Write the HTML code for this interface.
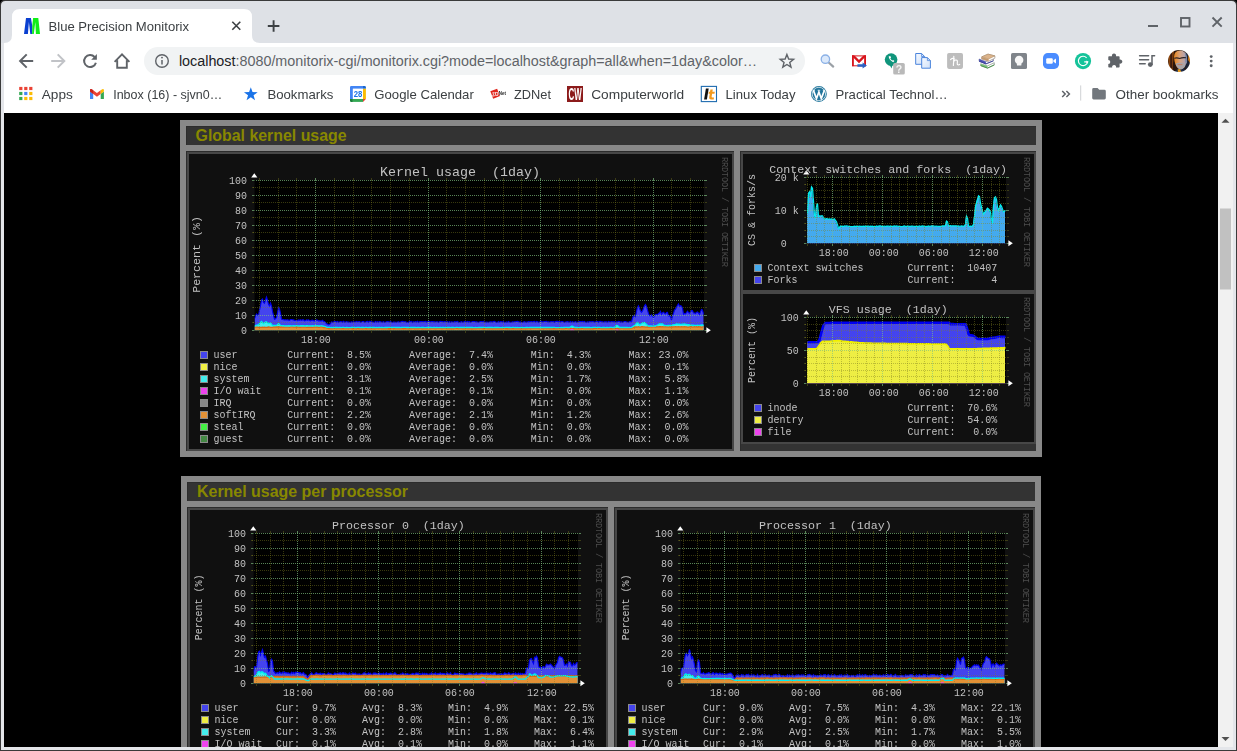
<!DOCTYPE html>
<html><head><meta charset="utf-8"><title>Blue Precision Monitorix</title>
<style>
html,body{margin:0;padding:0;background:#000;overflow:hidden;}
body{width:1237px;height:751px;position:relative;font-family:"Liberation Sans",sans-serif;}
svg{position:absolute;left:0;top:0;display:block;}
text{white-space:pre;}
</style></head><body>
<svg width="1237" height="751" viewBox="0 0 1237 751">
<rect x="0" y="0" width="1237" height="751" fill="#000" />
<path d="M0 751 V5 Q0 0 5 0 H1232 Q1237 0 1237 5 V751 Z" fill="#3a3a3a"/>
<path d="M1 750 V5.5 Q1 1 5.5 1 H1231.5 Q1236 1 1236 5.5 V750 Z" fill="#dee1e6"/>
<rect x="1" y="43" width="3" height="707" fill="#e4e6ea" />
<rect x="1233" y="43" width="3" height="707" fill="#e4e6ea" />
<rect x="1" y="747" width="1235" height="3" fill="#e4e6ea" />
<rect x="4" y="43" width="1229" height="70" fill="#ffffff" />
<path d="M4 43 Q12 43 12 35 V17 Q12 9 20 9 H244 Q252 9 252 17 V35 Q252 43 260 43 Z" fill="#ffffff"/>
<path d="M26 18 H30.9 L32.3 26 L32.1 33.9 H30.3 L28.9 22 L27.9 33.9 H24 Z" fill="#0a3fd0"/><path d="M33.1 18 H38.3 L40 33.9 H35.9 L35.3 22 L33.8 33.9 H32.1 L32.3 26 Z" fill="#10ee18"/>
<path d="M232.3 21.8 L240.3 29.8 M240.3 21.8 L232.3 29.8" stroke="#3c4043" stroke-width="1.6" fill="none"/>
<path d="M267.8 26 H279.4 M273.6 20.2 V31.8" stroke="#3c4043" stroke-width="1.9" fill="none"/>
<path d="M1148 26 H1158" stroke="#5f6368" stroke-width="2" fill="none"/>
<rect x="1181" y="18" width="8.5" height="8.5" stroke="#5f6368" stroke-width="1.9" fill="none"/>
<path d="M1212.5 17.5 L1221.7 26.7 M1221.7 17.5 L1212.5 26.7" stroke="#5f6368" stroke-width="1.9" fill="none"/>
<path d="M33.2 61 H20.4 M26.7 54.4 L20.1 61 L26.7 67.6" stroke="#5f6368" stroke-width="2" fill="none"/>
<path d="M51.2 61 H64 M57.7 54.4 L64.3 61 L57.7 67.6" stroke="#c1c3c7" stroke-width="2" fill="none"/>
<path d="M94.6 57.0 A6.0 6.0 0 1 0 95.9 62.7" stroke="#5f6368" stroke-width="2" fill="none"/>
<path d="M96.9 54 V59.7 H91.2 Z" fill="#5f6368"/>
<path d="M114.6 61.8 L122 54.4 L129.4 61.8 M117.2 60.2 V67.8 H126.8 V60.2" stroke="#5f6368" stroke-width="1.9" fill="none" stroke-linejoin="miter"/>
<rect x="144" y="47" width="661" height="28" rx="14" fill="#f1f3f4"/>
<circle cx="162" cy="61" r="6.3" stroke="#5f6368" stroke-width="1.4" fill="none"/>
<path d="M162 60 V64.6" stroke="#5f6368" stroke-width="1.5"/><circle cx="162" cy="57.6" r="0.95" fill="#5f6368"/>
<text x="178.9" y="65.7" font-family='"Liberation Sans", sans-serif' font-size="15.1" textLength="578.3" lengthAdjust="spacingAndGlyphs"><tspan fill="#202124">localhost</tspan><tspan fill="#5f6368">:8080/monitorix-cgi/monitorix.cgi?mode=localhost&amp;graph=all&amp;when=1day&amp;color…</tspan></text>
<polygon points="786.90,54.50 788.66,59.07 793.56,59.34 789.75,62.43 791.01,67.16 786.90,64.50 782.79,67.16 784.05,62.43 780.24,59.34 785.14,59.07" fill="none" stroke="#5f6368" stroke-width="1.4" stroke-linejoin="miter"/>
<path d="M828.4 62.2 L833.2 66.6" stroke="#9aa0a6" stroke-width="2.2" stroke-linecap="round"/>
<circle cx="825.4" cy="59.2" r="4.2" fill="#dbe9fb" stroke="#8ab0e6" stroke-width="1.3"/>
<clipPath id="gmc"><rect x="852" y="55.4" width="14" height="10.9"/></clipPath>
<rect x="852.5" y="55.9" width="13" height="9.9" fill="#ffffff" stroke="#d8141c" stroke-width="1"/>
<g clip-path="url(#gmc)"><path d="M852.9 66.4 V55 M865.1 66.4 V55" stroke="#d8141c" stroke-width="1.9" fill="none"/><path d="M852 54.6 L859 61.6 L866 54.6" stroke="#d8141c" stroke-width="2.3" fill="none" stroke-linejoin="miter"/></g>
<path d="M857.4 64.2 H862.6 V62.6 L866.9 65.5 L862.6 68.4 V66.8 H857.4 Z" fill="#2c62c4"/>
<circle cx="891.1" cy="59.6" r="6.3" fill="#10957c"/><path d="M889.6 65 L891.6 68.4 L892.4 65 Z" fill="#10957c"/>
<path d="M888.6 56.6 q0.6 3.8 4.6 5.6 l1.2 -1.3 l-1.3 -1 l-0.9 0.6 q-1.4 -0.9 -1.9 -2.3 l0.8 -0.8 l-0.9 -1.5 z" fill="#fff"/>
<rect x="893.2" y="63" width="11.6" height="11.6" rx="1.6" fill="#b9b9b9"/>
<defs><linearGradient id="pg" x1="0" y1="0" x2="1" y2="1"><stop offset="0" stop-color="#f7faff"/><stop offset="1" stop-color="#cfe0f8"/></linearGradient></defs>
<path d="M915.7 53.5 H921.6 L924.6 56.5 V64.3 H915.7 Z" fill="url(#pg)" stroke="#4a84dc" stroke-width="1"/><path d="M921.6 53.5 V56.5 H924.6" fill="none" stroke="#4a84dc" stroke-width="0.8"/>
<path d="M921.7 57.6 H927.4 L930.4 60.6 V68.2 H921.7 Z" fill="url(#pg)" stroke="#4a84dc" stroke-width="1"/><path d="M927.4 57.6 V60.6 H930.4" fill="none" stroke="#4a84dc" stroke-width="0.8"/>
<rect x="947.1" y="53" width="15.9" height="15.9" rx="1.8" fill="#bdbdbd"/>
<path d="M950.6 59.6 C951.4 58.2 952.8 58 954.6 59 M953.8 56.3 C954 59 953.5 62 953.4 65.5 M953.6 61.8 C954.6 59.8 956.8 59.4 957.3 60.8 C957.7 62 956.9 63.4 957.4 64.4 C957.9 65.2 959 65.1 959.7 64.4" stroke="#fff" stroke-width="1.15" fill="none" stroke-linecap="round" stroke-linejoin="round"/>
<path d="M980.7 63.8 L987.5 65.9 L994.3 62.7 L994.3 64.9 L987.5 68.1 L980.7 65.6 Z" fill="#ffffff" stroke="#5a6a5a" stroke-width="0.5"/>
<path d="M980.7 63.8 L987.5 65.9 L987.5 68.1 L980.7 65.6 Z" fill="#7cc47c"/><path d="M980.7 65.6 L987.5 68.1 L994.3 64.9" fill="none" stroke="#3f8f3f" stroke-width="0.9"/>
<path d="M979.1 59 L985.9 61.7 L993.4 58.6 L993.4 60.8 L985.9 63.9 L979.1 61.2 Z" fill="#ffffff" stroke="#4a4a7a" stroke-width="0.5"/>
<path d="M979.1 59 L985.9 61.7 L985.9 63.9 L979.1 61.2 Z" fill="#4a52b4"/><path d="M979.1 61.2 L985.9 63.9 L993.4 60.8" fill="none" stroke="#353c96" stroke-width="0.9"/>
<path d="M981.7 56.9 L988 54.1 L994.9 55.9 L994.9 58.2 L988.6 61.2 L981.7 59 Z" fill="#ffffff" stroke="#7a6a5a" stroke-width="0.5"/>
<path d="M981.7 56.9 L988 54.1 L994.9 55.9 L988.6 59 Z" fill="#dcb48c" stroke="#a8845c" stroke-width="0.5"/><path d="M981.7 56.9 L988.6 59 L988.6 61.2 L981.7 59 Z" fill="#c49a70"/>
<rect x="1011" y="53" width="16" height="16" rx="1.6" fill="#7f848a"/>
<circle cx="1019.1" cy="60" r="4.3" fill="#f7f7f7"/><rect x="1016.9" y="63.2" width="4.5" height="2.3" rx="0.5" fill="#f7f7f7"/>
<rect x="1043" y="53" width="16" height="16" rx="4.8" fill="#4a8cff"/>
<rect x="1046.2" y="58.2" width="6.6" height="5.6" rx="1.2" fill="#fff"/><path d="M1053.4 60.2 L1056 58.4 V63.6 L1053.4 61.8 Z" fill="#fff"/>
<circle cx="1083" cy="61.1" r="8.1" fill="#15c39a"/>
<path d="M1086.6 57.8 A4.7 4.7 0 1 0 1087.7 61.8 H1084.2" stroke="#fff" stroke-width="1.15" fill="none"/><path d="M1086.4 60.4 L1088.4 62 L1086.4 63.6 Z" fill="#fff"/>
<path d="M1108.3 57 Q1108.3 56.2 1109.1 56.2 H1112 A2.1 2.1 0 1 1 1116 56.2 H1118.8 Q1119.6 56.2 1119.6 57 V59.6 A2.1 2.1 0 1 1 1119.6 63.6 V66.8 Q1119.6 67.6 1118.8 67.6 H1116 A2 2 0 1 0 1112.2 67.6 H1109.1 Q1108.3 67.6 1108.3 66.8 V64 A2 2 0 1 0 1108.3 60 Z" fill="#5f6368"/>
<path d="M1139.6 55.7 H1148.6 M1139.6 59.7 H1148.6 M1139.6 63.8 H1145.2" stroke="#5f6368" stroke-width="1.5" fill="none" stroke-linecap="round"/>
<path d="M1152 64.6 V55.7 H1154.6" stroke="#5f6368" stroke-width="1.5" fill="none" stroke-linecap="round"/><circle cx="1150.3" cy="64.6" r="2.4" fill="#5f6368"/>
<defs><linearGradient id="avf" x1="0" x2="1" y1="0" y2="0"><stop offset="0" stop-color="#e8851a"/><stop offset="0.45" stop-color="#d9a27c"/><stop offset="0.8" stop-color="#b9a3a6"/><stop offset="1" stop-color="#8d93ad"/></linearGradient><clipPath id="avc"><circle cx="1179" cy="61" r="11"/></clipPath><filter id="avb" x="-10%" y="-10%" width="120%" height="120%"><feGaussianBlur stdDeviation="0.55"/></filter></defs>
<g clip-path="url(#avc)"><g filter="url(#avb)"><rect x="1166" y="48" width="26" height="26" fill="#2b1709"/><path d="M1168 56 Q1170 50 1174 50 L1172.5 70 L1169 68 Z" fill="#8a4410"/><rect x="1170.2" y="52" width="2" height="16" fill="#3a1c08"/><path d="M1186 52 Q1191 56 1190.5 64 L1186.5 70 L1184 66 Z" fill="#1c2230"/><path d="M1188.4 54 Q1191 58 1190 63 L1188 60 Z" fill="#c77412"/><path d="M1174 57 Q1174 50.6 1180 50.4 Q1186.4 50.6 1186.6 58 Q1187 64 1184 68 Q1181 70.6 1178 68.4 Q1174.6 65 1174 57 Z" fill="url(#avf)"/><path d="M1175.6 63.4 Q1179 62.4 1184.4 63 Q1185.6 66 1183.6 68.4 Q1181 70.4 1178.4 68.6 Q1176 66.4 1175.6 63.4 Z" fill="#a9a4a6"/><path d="M1177.6 64.6 H1182.4" stroke="#c97a5a" stroke-width="0.9"/><path d="M1185 52 Q1187.6 55 1187 64 L1185.4 62 Z" fill="#7f8aa8"/><path d="M1174.2 58.2 Q1177 57.4 1179.6 58.4 Q1182.6 57.2 1186 57.8" stroke="#2a2326" stroke-width="1.1" fill="none"/><path d="M1175 71 L1178 68.6 L1181 70 L1184 68 L1186 72 H1175 Z" fill="#1d2a45"/><path d="M1177.6 69.4 L1179.8 69 L1181.4 72 H1178 Z" fill="#e89a1c"/></g></g>
<circle cx="1211.2" cy="56.6" r="1.45" fill="#5f6368"/>
<circle cx="1211.2" cy="61.1" r="1.45" fill="#5f6368"/>
<circle cx="1211.2" cy="65.7" r="1.45" fill="#5f6368"/>
<rect x="19.2" y="86.9" width="3.2" height="3.2" fill="#ea4335" />
<rect x="24.2" y="86.9" width="3.2" height="3.2" fill="#ea4335" />
<rect x="29.2" y="86.9" width="3.2" height="3.2" fill="#ea4335" />
<rect x="19.2" y="91.9" width="3.2" height="3.2" fill="#34a853" />
<rect x="24.2" y="91.9" width="3.2" height="3.2" fill="#4285f4" />
<rect x="29.2" y="91.9" width="3.2" height="3.2" fill="#fbbc04" />
<rect x="19.2" y="96.9" width="3.2" height="3.2" fill="#34a853" />
<rect x="24.2" y="96.9" width="3.2" height="3.2" fill="#fbbc04" />
<rect x="29.2" y="96.9" width="3.2" height="3.2" fill="#fbbc04" />
<path d="M90 99 V91.4 L93.2 93.8 V99 Z" fill="#4285f4"/><path d="M103.9 99 V91.4 L100.7 93.8 V99 Z" fill="#34a853"/><path d="M90 91.5 V90.2 Q90 88.4 91.8 89.2 L96.95 93.1 L100.7 90.3 V93.9 L96.95 96.8 Z" fill="#ea4335"/><path d="M90 91.5 V90.2 Q90 88.4 91.8 89.2 L93.2 90.3 V93.9 Z" fill="#c5221f"/><path d="M100.7 90.3 L102.1 89.2 Q103.9 88.4 103.9 90.2 V91.5 L100.7 93.9 Z" fill="#fbbc04"/>
<polygon points="250.80,87.20 252.50,92.05 257.65,92.18 253.56,95.30 255.03,100.22 250.80,97.30 246.57,100.22 248.04,95.30 243.95,92.18 249.10,92.05" fill="#1a73e8"/>
<path d="M351.2 86 H363 V88.8 H352.9 V99 H350 V87.2 Q350 86 351.2 86 Z" fill="#4285f4"/><path d="M363 86 H364.7 Q365.9 86 365.9 87.2 V88.8 H363 Z" fill="#1967d2"/><rect x="363" y="88.8" width="2.9" height="10.2" fill="#fbbc04"/><rect x="352.9" y="99" width="10.1" height="2.9" fill="#34a853"/><path d="M350 99 H352.9 V101.9 H351.2 Q350 101.9 350 100.7 Z" fill="#188038"/><path d="M363 99 H365.9 L363 101.9 Z" fill="#ea4335"/><rect x="352.9" y="88.8" width="10.1" height="10.2" fill="#fff"/>
<path d="M490.3 91.2 L497.1 88.8 L500 96.1 L493.2 98.7 Z" fill="#e0251c"/>
<rect x="567" y="86" width="16" height="16" fill="#8c1b1b"/>
<rect x="701.3" y="86.4" width="15.2" height="15.2" fill="#fff" stroke="#1f6cb0" stroke-width="1.1"/>
<path d="M705.9 88.4 H708.7 L706.9 99.5 H704.1 Z" fill="#111"/>
<path d="M710.4 89.4 H712.8 L712.4 91.8 H714.8 L714.5 93.8 H712.1 L711.6 96.8 Q711.5 97.6 712.5 97.6 H714 L713.7 99.5 H710.8 Q708.8 99.3 709.2 97.2 L709.8 93.8 H708.5 L708.8 91.8 H710 Z" fill="#f39a1e"/>
<circle cx="818.9" cy="94" r="7.9" fill="#21759b"/><circle cx="818.9" cy="94" r="6.7" fill="none" stroke="#fff" stroke-width="0.7"/>
<path d="M813.4 90.4 L816.5 98.6 L818.9 92 L821.3 98.6 L824.4 90.4" stroke="#fff" stroke-width="1.7" fill="none" stroke-linejoin="miter"/><path d="M812.6 90.3 H815 M817.6 90.3 H820.2 M822.8 90.3 H825.2" stroke="#fff" stroke-width="0.7"/>
<path d="M1062.2 91 L1065.2 94 L1062.2 97 M1066.4 91 L1069.4 94 L1066.4 97" stroke="#5f6368" stroke-width="1.5" fill="none"/>
<rect x="1080.2" y="85.4" width="1" height="15.2" fill="#cfd1d4" />
<path d="M1092.2 89.4 Q1092.2 88 1093.6 88 H1097.6 L1099.2 89.8 H1104.4 Q1105.8 89.8 1105.8 91.2 V98 Q1105.8 99.4 1104.4 99.4 H1093.6 Q1092.2 99.4 1092.2 98 Z" fill="#72777d"/>
<rect x="1218" y="113" width="15" height="634" fill="#f1f1f1" />
<rect x="1220" y="208.5" width="11" height="81" fill="#c1c1c1" />
<path d="M1221.5 122.8 L1225.5 118.8 L1229.5 122.8 Z" fill="#505050"/>
<path d="M1221.5 737 L1225.5 741 L1229.5 737 Z" fill="#505050"/>
<rect x="4" y="113" width="1214" height="634" fill="#000000" />
<clipPath id="cc"><rect x="4" y="113" width="1214" height="634"/></clipPath>
<g clip-path="url(#cc)">
<rect x="180" y="120" width="862" height="337" fill="#888888" />
<rect x="186" y="126" width="850" height="19" fill="#2c2c2c" />
<rect x="187" y="127" width="849" height="18" fill="#333333" />
<text xml:space="preserve" x="195.6" y="141" font-family='"Liberation Sans", sans-serif' font-size="16" font-weight="bold" fill="#888800" text-anchor="start" textLength="151" lengthAdjust="spacingAndGlyphs" >Global kernel usage</text>
<rect x="740" y="151" width="296" height="300" fill="#2c2c2c" />
<rect x="741" y="152" width="295" height="299" fill="#333333" />
<rect x="186" y="151" width="548" height="300" fill="#2c2c2c" />
<rect x="187" y="152" width="547" height="299" fill="#474747" />
<rect x="189" y="154" width="543" height="295" fill="#101010" />
<rect x="254" y="180" width="450" height="151" fill="#000" />
<path d="M254.5 330.5L254.5 318.55L255.5 316.43L256.5 314.03L257.5 315.04L258.5 315.49L259.5 310.26L260.5 305.56L261.5 300.06L262.5 299.11L263.5 302.43L264.5 303.35L265.5 299.92L266.5 296.95L267.5 300.16L268.5 304.29L269.5 306.03L270.5 303.05L271.5 305.99L272.5 311.33L273.5 315.54L274.5 319.24L275.5 318.72L276.5 317.47L277.5 312.98L278.5 307.84L279.5 309.12L280.5 313.18L281.5 319.04L282.5 319.57L283.5 319.62L284.5 319.99L285.5 319.87L286.5 320.04L287.5 319.87L288.5 320.11L289.5 320.32L290.5 319.54L291.5 319.56L292.5 319.74L293.5 319.90L294.5 320.34L295.5 320.45L296.5 320.40L297.5 320.65L298.5 319.90L299.5 320.31L300.5 319.84L301.5 320.36L302.5 319.74L303.5 319.87L304.5 320.82L305.5 320.60L306.5 319.84L307.5 320.34L308.5 319.79L309.5 320.45L310.5 320.82L311.5 320.22L312.5 320.07L313.5 320.64L314.5 320.85L315.5 320.59L316.5 319.91L317.5 320.15L318.5 320.87L319.5 320.74L320.5 320.91L321.5 320.97L322.5 320.17L323.5 321.35L324.5 321.43L325.5 322.49L326.5 323.71L327.5 324.04L328.5 324.81L329.5 324.34L330.5 323.62L331.5 321.99L332.5 322.22L333.5 322.15L334.5 321.38L335.5 321.57L336.5 322.12L337.5 321.48L338.5 322.22L339.5 322.02L340.5 321.51L341.5 321.74L342.5 322.34L343.5 321.36L344.5 322.22L345.5 322.17L346.5 321.60L347.5 322.09L348.5 322.12L349.5 322.37L350.5 322.35L351.5 321.81L352.5 322.18L353.5 321.79L354.5 322.04L355.5 321.95L356.5 321.39L357.5 321.92L358.5 321.82L359.5 321.50L360.5 322.25L361.5 322.28L362.5 321.45L363.5 321.55L364.5 322.18L365.5 322.24L366.5 321.64L367.5 321.42L368.5 322.23L369.5 321.40L370.5 321.48L371.5 321.79L372.5 321.99L373.5 322.34L374.5 322.41L375.5 321.39L376.5 322.19L377.5 321.67L378.5 322.17L379.5 321.54L380.5 321.79L381.5 322.13L382.5 322.26L383.5 321.66L384.5 322.37L385.5 322.20L386.5 321.83L387.5 321.51L388.5 321.77L389.5 322.14L390.5 321.44L391.5 322.23L392.5 322.43L393.5 322.15L394.5 321.96L395.5 322.38L396.5 322.26L397.5 322.04L398.5 321.82L399.5 322.31L400.5 322.05L401.5 321.47L402.5 321.37L403.5 321.73L404.5 321.69L405.5 321.81L406.5 322.30L407.5 322.41L408.5 322.43L409.5 321.45L410.5 321.68L411.5 321.39L412.5 322.43L413.5 321.75L414.5 321.92L415.5 321.65L416.5 322.10L417.5 321.35L418.5 322.37L419.5 321.85L420.5 321.64L421.5 321.46L422.5 321.64L423.5 321.68L424.5 321.58L425.5 321.44L426.5 322.06L427.5 321.70L428.5 321.46L429.5 321.49L430.5 321.99L431.5 321.58L432.5 321.50L433.5 321.82L434.5 321.76L435.5 322.03L436.5 321.81L437.5 321.78L438.5 322.36L439.5 321.75L440.5 321.36L441.5 321.48L442.5 321.65L443.5 322.02L444.5 321.64L445.5 321.81L446.5 321.97L447.5 321.53L448.5 322.36L449.5 321.62L450.5 322.42L451.5 321.79L452.5 321.92L453.5 322.20L454.5 321.68L455.5 321.90L456.5 321.77L457.5 321.44L458.5 322.17L459.5 322.44L460.5 322.12L461.5 321.70L462.5 322.23L463.5 322.26L464.5 321.45L465.5 321.72L466.5 321.96L467.5 321.47L468.5 322.09L469.5 321.72L470.5 322.23L471.5 321.98L472.5 321.56L473.5 321.44L474.5 321.48L475.5 322.03L476.5 321.81L477.5 322.10L478.5 322.30L479.5 321.90L480.5 321.53L481.5 321.52L482.5 321.67L483.5 321.40L484.5 322.15L485.5 322.26L486.5 321.95L487.5 322.15L488.5 322.21L489.5 321.99L490.5 321.76L491.5 321.91L492.5 322.10L493.5 321.53L494.5 321.37L495.5 321.95L496.5 322.37L497.5 322.42L498.5 321.49L499.5 322.40L500.5 321.67L501.5 321.82L502.5 322.11L503.5 321.58L504.5 322.43L505.5 322.30L506.5 321.95L507.5 322.42L508.5 321.54L509.5 322.19L510.5 322.30L511.5 322.40L512.5 321.76L513.5 321.96L514.5 321.76L515.5 321.73L516.5 321.56L517.5 321.40L518.5 321.70L519.5 322.23L520.5 321.93L521.5 322.25L522.5 322.44L523.5 321.93L524.5 321.66L525.5 322.25L526.5 322.15L527.5 322.07L528.5 321.68L529.5 321.88L530.5 321.77L531.5 321.62L532.5 322.02L533.5 321.58L534.5 321.45L535.5 322.35L536.5 321.42L537.5 321.66L538.5 322.31L539.5 321.95L540.5 321.76L541.5 321.45L542.5 322.04L543.5 321.82L544.5 321.48L545.5 321.57L546.5 321.41L547.5 321.94L548.5 321.73L549.5 322.22L550.5 321.66L551.5 321.55L552.5 321.74L553.5 321.66L554.5 322.22L555.5 321.46L556.5 321.37L557.5 321.37L558.5 321.86L559.5 321.58L560.5 322.10L561.5 321.45L562.5 321.51L563.5 322.07L564.5 322.36L565.5 321.97L566.5 321.84L567.5 321.60L568.5 321.91L569.5 322.42L570.5 321.56L571.5 322.38L572.5 321.57L573.5 322.26L574.5 322.08L575.5 321.58L576.5 322.30L577.5 322.29L578.5 321.88L579.5 321.65L580.5 321.53L581.5 321.69L582.5 321.41L583.5 321.91L584.5 321.41L585.5 322.36L586.5 322.21L587.5 321.87L588.5 322.13L589.5 321.65L590.5 321.75L591.5 321.87L592.5 321.52L593.5 321.83L594.5 322.11L595.5 322.03L596.5 321.52L597.5 321.46L598.5 322.22L599.5 321.51L600.5 321.38L601.5 321.87L602.5 321.82L603.5 322.23L604.5 321.86L605.5 321.90L606.5 321.78L607.5 322.42L608.5 321.38L609.5 321.88L610.5 322.01L611.5 321.57L612.5 321.83L613.5 321.91L614.5 321.69L615.5 322.38L616.5 321.86L617.5 321.99L618.5 321.40L619.5 321.43L620.5 322.15L621.5 321.93L622.5 322.31L623.5 321.97L624.5 321.55L625.5 321.46L626.5 321.93L627.5 322.10L628.5 322.24L629.5 321.77L630.5 321.43L631.5 321.91L632.5 318.19L633.5 316.02L634.5 316.34L635.5 316.80L636.5 311.68L637.5 307.46L638.5 305.80L639.5 308.37L640.5 310.93L641.5 312.25L642.5 310.91L643.5 308.49L644.5 305.83L645.5 304.52L646.5 306.47L647.5 310.07L648.5 313.64L649.5 315.60L650.5 315.80L651.5 314.87L652.5 316.33L653.5 317.36L654.5 315.85L655.5 314.47L656.5 314.36L657.5 314.88L658.5 313.44L659.5 312.96L660.5 311.24L661.5 314.16L662.5 312.81L663.5 312.20L664.5 313.45L665.5 314.03L666.5 312.48L667.5 312.29L668.5 316.07L669.5 315.57L670.5 316.79L671.5 320.25L672.5 315.76L673.5 313.44L674.5 310.13L675.5 309.09L676.5 307.18L677.5 305.26L678.5 303.91L679.5 306.30L680.5 305.70L681.5 306.16L682.5 308.30L683.5 314.05L684.5 313.48L685.5 313.92L686.5 312.49L687.5 311.22L688.5 312.50L689.5 313.30L690.5 312.04L691.5 310.37L692.5 310.60L693.5 313.01L694.5 312.94L695.5 313.48L696.5 312.42L697.5 311.89L698.5 313.10L699.5 314.33L700.5 311.63L701.5 309.46L702.5 310.03L703.5 313.95L703.5 330.5 Z" fill="#4444ee"/>
<path d="M254.5 330.5L254.5 326.01L255.5 325.59L256.5 325.22L257.5 324.95L258.5 324.60L259.5 323.53L260.5 322.55L261.5 321.44L262.5 322.46L263.5 323.48L264.5 322.69L265.5 321.87L266.5 321.97L267.5 322.71L268.5 323.57L269.5 323.17L270.5 323.09L271.5 324.19L272.5 325.59L273.5 325.46L274.5 325.53L275.5 325.52L276.5 325.43L277.5 324.60L278.5 323.59L279.5 324.42L280.5 325.50L281.5 325.68L282.5 325.60L283.5 325.71L284.5 325.88L285.5 325.82L286.5 325.87L287.5 325.84L288.5 325.78L289.5 325.87L290.5 325.76L291.5 325.89L292.5 325.87L293.5 325.74L294.5 325.82L295.5 325.82L296.5 325.78L297.5 325.80L298.5 325.82L299.5 325.89L300.5 325.75L301.5 325.71L302.5 325.70L303.5 325.77L304.5 325.83L305.5 325.83L306.5 325.76L307.5 325.77L308.5 325.88L309.5 325.85L310.5 325.83L311.5 325.80L312.5 325.74L313.5 325.80L314.5 325.89L315.5 325.74L316.5 325.81L317.5 325.80L318.5 325.86L319.5 325.81L320.5 325.82L321.5 325.75L322.5 325.88L323.5 326.09L324.5 326.46L325.5 326.66L326.5 327.09L327.5 327.34L328.5 327.40L329.5 327.41L330.5 327.59L331.5 327.51L332.5 327.56L333.5 327.54L334.5 327.50L335.5 327.41L336.5 327.50L337.5 327.41L338.5 327.57L339.5 327.42L340.5 327.53L341.5 327.56L342.5 327.45L343.5 327.42L344.5 327.60L345.5 327.55L346.5 327.45L347.5 327.53L348.5 327.55L349.5 327.60L350.5 327.59L351.5 327.48L352.5 327.40L353.5 327.40L354.5 327.50L355.5 327.60L356.5 327.54L357.5 327.44L358.5 327.43L359.5 327.47L360.5 327.55L361.5 327.49L362.5 327.50L363.5 327.47L364.5 327.55L365.5 327.41L366.5 327.42L367.5 327.57L368.5 327.54L369.5 327.43L370.5 327.54L371.5 327.41L372.5 327.50L373.5 327.46L374.5 327.46L375.5 327.56L376.5 327.54L377.5 327.55L378.5 327.46L379.5 327.46L380.5 327.57L381.5 327.42L382.5 327.52L383.5 327.55L384.5 327.51L385.5 327.40L386.5 327.49L387.5 327.48L388.5 327.42L389.5 327.41L390.5 327.45L391.5 327.52L392.5 327.48L393.5 327.42L394.5 327.44L395.5 327.48L396.5 327.53L397.5 327.53L398.5 327.45L399.5 327.49L400.5 327.60L401.5 327.46L402.5 327.42L403.5 327.44L404.5 327.42L405.5 327.42L406.5 327.49L407.5 327.44L408.5 327.52L409.5 327.58L410.5 327.53L411.5 327.54L412.5 327.41L413.5 327.46L414.5 327.49L415.5 327.48L416.5 327.58L417.5 327.49L418.5 327.46L419.5 327.52L420.5 327.55L421.5 327.52L422.5 327.54L423.5 327.46L424.5 327.57L425.5 327.58L426.5 327.54L427.5 327.46L428.5 327.45L429.5 327.47L430.5 327.41L431.5 327.53L432.5 327.59L433.5 327.50L434.5 327.51L435.5 327.56L436.5 327.47L437.5 327.53L438.5 327.55L439.5 327.53L440.5 327.41L441.5 327.60L442.5 327.53L443.5 327.54L444.5 327.56L445.5 327.51L446.5 327.56L447.5 327.42L448.5 327.50L449.5 327.46L450.5 327.57L451.5 327.51L452.5 327.48L453.5 327.43L454.5 327.55L455.5 327.51L456.5 327.43L457.5 327.43L458.5 327.55L459.5 327.49L460.5 327.45L461.5 327.52L462.5 327.47L463.5 327.47L464.5 327.41L465.5 327.49L466.5 327.46L467.5 327.53L468.5 327.45L469.5 327.54L470.5 327.50L471.5 327.53L472.5 327.54L473.5 327.57L474.5 327.55L475.5 327.49L476.5 327.55L477.5 327.59L478.5 327.44L479.5 327.54L480.5 327.41L481.5 327.48L482.5 327.52L483.5 327.43L484.5 327.42L485.5 327.54L486.5 327.57L487.5 327.47L488.5 327.43L489.5 327.48L490.5 327.44L491.5 327.52L492.5 327.48L493.5 327.55L494.5 327.52L495.5 327.52L496.5 327.52L497.5 327.52L498.5 327.44L499.5 327.57L500.5 327.56L501.5 327.55L502.5 327.41L503.5 327.50L504.5 327.59L505.5 327.43L506.5 327.43L507.5 327.44L508.5 327.53L509.5 327.45L510.5 327.54L511.5 327.57L512.5 327.43L513.5 327.43L514.5 327.56L515.5 327.42L516.5 327.60L517.5 327.54L518.5 327.60L519.5 327.57L520.5 327.57L521.5 327.46L522.5 327.54L523.5 327.56L524.5 327.56L525.5 327.54L526.5 327.43L527.5 327.48L528.5 327.58L529.5 327.46L530.5 327.49L531.5 327.51L532.5 327.49L533.5 327.47L534.5 327.44L535.5 327.50L536.5 327.47L537.5 327.51L538.5 327.47L539.5 327.52L540.5 327.52L541.5 327.50L542.5 327.46L543.5 327.54L544.5 327.42L545.5 327.50L546.5 327.43L547.5 327.46L548.5 327.41L549.5 327.46L550.5 327.51L551.5 327.52L552.5 327.48L553.5 327.45L554.5 327.43L555.5 327.57L556.5 327.59L557.5 327.58L558.5 327.58L559.5 327.59L560.5 327.60L561.5 327.55L562.5 327.58L563.5 327.46L564.5 327.48L565.5 327.41L566.5 327.41L567.5 327.45L568.5 327.41L569.5 327.59L570.5 326.91L571.5 326.13L572.5 326.22L573.5 326.92L574.5 327.45L575.5 327.52L576.5 327.49L577.5 327.54L578.5 327.55L579.5 327.58L580.5 327.48L581.5 327.41L582.5 327.40L583.5 327.45L584.5 327.41L585.5 327.53L586.5 327.54L587.5 327.42L588.5 327.48L589.5 327.47L590.5 327.60L591.5 327.55L592.5 327.50L593.5 327.45L594.5 327.43L595.5 327.45L596.5 327.53L597.5 327.52L598.5 327.43L599.5 327.40L600.5 327.50L601.5 327.56L602.5 327.48L603.5 327.49L604.5 327.53L605.5 327.55L606.5 327.52L607.5 327.48L608.5 327.57L609.5 327.49L610.5 327.41L611.5 327.45L612.5 327.55L613.5 327.52L614.5 327.58L615.5 326.49L616.5 325.55L617.5 325.65L618.5 326.53L619.5 327.48L620.5 327.48L621.5 327.52L622.5 327.54L623.5 327.53L624.5 327.40L625.5 327.53L626.5 327.50L627.5 327.51L628.5 327.57L629.5 327.52L630.5 327.56L631.5 327.34L632.5 326.73L633.5 326.13L634.5 325.41L635.5 324.54L636.5 323.53L637.5 322.47L638.5 323.77L639.5 325.00L640.5 324.30L641.5 323.75L642.5 322.97L643.5 322.83L644.5 322.55L645.5 323.44L646.5 324.40L647.5 325.22L648.5 326.07L649.5 326.01L650.5 326.04L651.5 325.93L652.5 326.05L653.5 326.06L654.5 325.97L655.5 325.97L656.5 325.48L657.5 325.00L658.5 324.41L659.5 324.01L660.5 323.91L661.5 324.02L662.5 324.01L663.5 324.78L664.5 325.46L665.5 325.45L666.5 325.55L667.5 325.49L668.5 325.45L669.5 325.50L670.5 325.47L671.5 325.23L672.5 324.96L673.5 324.78L674.5 324.54L675.5 324.35L676.5 323.92L677.5 324.07L678.5 324.27L679.5 324.28L680.5 324.42L681.5 324.44L682.5 324.18L683.5 324.14L684.5 324.04L685.5 324.21L686.5 324.35L687.5 324.59L688.5 324.76L689.5 324.91L690.5 325.04L691.5 325.17L692.5 325.28L693.5 325.23L694.5 325.42L695.5 325.50L696.5 325.42L697.5 325.29L698.5 325.38L699.5 325.30L700.5 325.12L701.5 325.04L702.5 324.98L703.5 324.99L703.5 330.5 Z" fill="#44eeee"/>
<path d="M254.5 330.5L254.5 330.50L255.5 330.50L256.5 330.50L257.5 330.50L258.5 330.50L259.5 330.50L260.5 330.50L261.5 330.50L262.5 330.50L263.5 330.50L264.5 330.50L265.5 330.50L266.5 330.50L267.5 330.50L268.5 330.50L269.5 330.50L270.5 330.50L271.5 330.50L272.5 330.50L273.5 330.50L274.5 330.50L275.5 330.50L276.5 330.50L277.5 330.50L278.5 330.50L279.5 330.50L280.5 330.50L281.5 330.50L282.5 330.50L283.5 330.50L284.5 330.50L285.5 330.50L286.5 330.50L287.5 330.50L288.5 330.50L289.5 330.50L290.5 330.50L291.5 330.50L292.5 330.50L293.5 330.50L294.5 330.50L295.5 330.50L296.5 330.50L297.5 330.50L298.5 330.50L299.5 330.50L300.5 330.50L301.5 330.50L302.5 330.50L303.5 330.50L304.5 330.50L305.5 330.50L306.5 330.50L307.5 330.50L308.5 330.50L309.5 330.50L310.5 330.50L311.5 330.50L312.5 330.50L313.5 330.50L314.5 330.50L315.5 330.50L316.5 330.50L317.5 330.50L318.5 330.50L319.5 330.50L320.5 330.50L321.5 330.50L322.5 330.50L323.5 330.50L324.5 330.50L325.5 330.50L326.5 330.50L327.5 330.50L328.5 330.50L329.5 330.50L330.5 330.50L331.5 330.50L332.5 330.50L333.5 330.50L334.5 330.50L335.5 330.50L336.5 330.50L337.5 330.50L338.5 330.50L339.5 330.50L340.5 330.50L341.5 330.50L342.5 330.50L343.5 330.50L344.5 330.50L345.5 330.50L346.5 330.50L347.5 330.50L348.5 330.50L349.5 330.50L350.5 330.50L351.5 330.50L352.5 330.50L353.5 330.50L354.5 330.50L355.5 330.50L356.5 330.50L357.5 330.50L358.5 330.50L359.5 330.50L360.5 330.50L361.5 330.50L362.5 330.50L363.5 330.50L364.5 330.50L365.5 330.50L366.5 330.50L367.5 330.50L368.5 330.50L369.5 330.50L370.5 330.50L371.5 330.50L372.5 330.50L373.5 330.50L374.5 330.50L375.5 330.50L376.5 330.50L377.5 330.50L378.5 330.50L379.5 330.50L380.5 330.50L381.5 330.50L382.5 330.50L383.5 330.50L384.5 330.50L385.5 330.50L386.5 330.50L387.5 330.50L388.5 330.50L389.5 330.50L390.5 330.50L391.5 330.50L392.5 330.50L393.5 330.50L394.5 330.50L395.5 330.50L396.5 330.50L397.5 330.50L398.5 330.50L399.5 330.50L400.5 330.50L401.5 330.50L402.5 330.50L403.5 330.50L404.5 330.50L405.5 330.50L406.5 330.50L407.5 330.50L408.5 330.50L409.5 330.50L410.5 330.50L411.5 330.50L412.5 330.50L413.5 330.50L414.5 330.50L415.5 330.50L416.5 330.50L417.5 330.50L418.5 330.50L419.5 330.50L420.5 330.50L421.5 330.50L422.5 330.50L423.5 330.50L424.5 330.50L425.5 330.50L426.5 330.50L427.5 330.50L428.5 330.50L429.5 330.50L430.5 330.50L431.5 330.50L432.5 330.50L433.5 330.50L434.5 330.50L435.5 330.50L436.5 330.50L437.5 330.50L438.5 330.50L439.5 330.50L440.5 330.50L441.5 330.50L442.5 330.50L443.5 330.50L444.5 330.50L445.5 330.50L446.5 330.50L447.5 330.50L448.5 330.50L449.5 330.50L450.5 330.50L451.5 330.50L452.5 330.50L453.5 330.50L454.5 330.50L455.5 330.50L456.5 330.50L457.5 330.50L458.5 330.50L459.5 330.50L460.5 330.50L461.5 330.50L462.5 330.50L463.5 330.50L464.5 330.50L465.5 330.50L466.5 330.50L467.5 330.50L468.5 330.50L469.5 330.50L470.5 330.50L471.5 330.50L472.5 330.50L473.5 330.50L474.5 330.50L475.5 330.50L476.5 330.50L477.5 330.50L478.5 330.50L479.5 330.50L480.5 330.50L481.5 330.50L482.5 330.50L483.5 330.50L484.5 330.50L485.5 330.50L486.5 330.50L487.5 330.50L488.5 330.50L489.5 330.50L490.5 330.50L491.5 330.50L492.5 330.50L493.5 330.50L494.5 330.50L495.5 330.50L496.5 330.50L497.5 330.50L498.5 330.50L499.5 330.50L500.5 330.50L501.5 330.50L502.5 330.50L503.5 330.50L504.5 330.50L505.5 330.50L506.5 330.50L507.5 330.50L508.5 330.50L509.5 330.50L510.5 330.50L511.5 330.50L512.5 330.50L513.5 330.50L514.5 330.50L515.5 330.50L516.5 330.50L517.5 330.50L518.5 330.50L519.5 330.50L520.5 330.50L521.5 330.50L522.5 330.50L523.5 330.50L524.5 330.50L525.5 330.50L526.5 330.50L527.5 330.50L528.5 330.50L529.5 330.50L530.5 330.50L531.5 330.50L532.5 330.50L533.5 330.50L534.5 330.50L535.5 330.50L536.5 330.50L537.5 330.50L538.5 330.50L539.5 330.50L540.5 330.50L541.5 330.50L542.5 330.50L543.5 330.50L544.5 330.50L545.5 330.50L546.5 330.50L547.5 330.50L548.5 330.50L549.5 330.50L550.5 330.50L551.5 330.50L552.5 330.50L553.5 330.50L554.5 330.50L555.5 330.50L556.5 330.50L557.5 330.50L558.5 330.50L559.5 330.50L560.5 330.50L561.5 330.50L562.5 330.50L563.5 330.50L564.5 330.50L565.5 330.50L566.5 330.50L567.5 330.50L568.5 330.50L569.5 330.50L570.5 329.62L571.5 328.74L572.5 328.74L573.5 329.62L574.5 330.50L575.5 330.50L576.5 330.50L577.5 330.50L578.5 330.50L579.5 330.50L580.5 330.50L581.5 330.50L582.5 330.50L583.5 330.50L584.5 330.50L585.5 330.50L586.5 330.50L587.5 330.50L588.5 330.50L589.5 330.50L590.5 330.50L591.5 330.50L592.5 330.50L593.5 330.50L594.5 330.50L595.5 330.50L596.5 330.50L597.5 330.50L598.5 330.50L599.5 330.50L600.5 330.50L601.5 330.50L602.5 330.50L603.5 330.50L604.5 330.50L605.5 330.50L606.5 330.50L607.5 330.50L608.5 330.50L609.5 330.50L610.5 330.50L611.5 330.50L612.5 330.50L613.5 330.50L614.5 330.50L615.5 329.86L616.5 329.22L617.5 329.22L618.5 329.86L619.5 330.50L620.5 330.50L621.5 330.50L622.5 330.50L623.5 330.50L624.5 330.50L625.5 330.50L626.5 330.50L627.5 330.50L628.5 330.50L629.5 330.50L630.5 330.50L631.5 330.50L632.5 330.50L633.5 330.50L634.5 330.50L635.5 330.50L636.5 330.50L637.5 330.50L638.5 330.50L639.5 330.50L640.5 330.50L641.5 330.50L642.5 330.50L643.5 330.50L644.5 330.50L645.5 330.50L646.5 330.50L647.5 330.50L648.5 330.50L649.5 330.50L650.5 330.50L651.5 330.50L652.5 330.50L653.5 330.50L654.5 330.50L655.5 330.50L656.5 330.50L657.5 330.50L658.5 330.50L659.5 330.50L660.5 330.50L661.5 330.50L662.5 330.50L663.5 330.50L664.5 330.50L665.5 330.50L666.5 330.50L667.5 330.50L668.5 330.50L669.5 330.50L670.5 330.50L671.5 330.50L672.5 330.50L673.5 330.50L674.5 330.50L675.5 330.50L676.5 330.50L677.5 330.50L678.5 330.50L679.5 330.50L680.5 330.50L681.5 330.50L682.5 330.50L683.5 330.50L684.5 330.50L685.5 330.50L686.5 330.50L687.5 330.50L688.5 330.50L689.5 330.50L690.5 330.50L691.5 330.50L692.5 330.50L693.5 330.50L694.5 330.50L695.5 330.50L696.5 330.50L697.5 330.50L698.5 330.50L699.5 330.50L700.5 330.50L701.5 330.50L702.5 330.50L703.5 330.50L703.5 330.5 Z" fill="#ee44ee"/>
<path d="M254.5 330.5L254.5 327.42L255.5 327.20L256.5 327.19L257.5 327.10L258.5 327.43L259.5 327.40L260.5 327.44L261.5 327.39L262.5 327.13L263.5 327.42L264.5 327.22L265.5 327.37L266.5 327.32L267.5 327.24L268.5 327.03L269.5 327.14L270.5 327.43L271.5 327.29L272.5 327.35L273.5 326.98L274.5 327.01L275.5 327.00L276.5 326.99L277.5 327.02L278.5 326.91L279.5 326.98L280.5 327.24L281.5 326.94L282.5 327.11L283.5 326.97L284.5 327.07L285.5 327.14L286.5 327.17L287.5 327.14L288.5 327.19L289.5 327.29L290.5 326.94L291.5 326.95L292.5 326.86L293.5 327.00L294.5 327.07L295.5 326.98L296.5 327.28L297.5 327.01L298.5 327.13L299.5 327.26L300.5 327.25L301.5 327.09L302.5 327.22L303.5 327.12L304.5 327.05L305.5 327.15L306.5 327.28L307.5 327.10L308.5 327.23L309.5 327.23L310.5 327.25L311.5 327.17L312.5 327.31L313.5 327.02L314.5 326.87L315.5 327.16L316.5 326.99L317.5 326.88L318.5 327.33L319.5 327.28L320.5 326.95L321.5 326.93L322.5 327.03L323.5 327.53L324.5 327.66L325.5 327.70L326.5 327.95L327.5 328.25L328.5 328.58L329.5 328.29L330.5 328.56L331.5 328.39L332.5 328.68L333.5 328.26L334.5 328.45L335.5 328.39L336.5 328.64L337.5 328.44L338.5 328.46L339.5 328.45L340.5 328.57L341.5 328.39L342.5 328.58L343.5 328.60L344.5 328.67L345.5 328.41L346.5 328.69L347.5 328.64L348.5 328.72L349.5 328.43L350.5 328.47L351.5 328.48L352.5 328.73L353.5 328.53L354.5 328.58L355.5 328.70L356.5 328.75L357.5 328.25L358.5 328.69L359.5 328.60L360.5 328.62L361.5 328.45L362.5 328.71L363.5 328.52L364.5 328.57L365.5 328.33L366.5 328.75L367.5 328.58L368.5 328.50L369.5 328.27L370.5 328.49L371.5 328.51L372.5 328.42L373.5 328.60L374.5 328.73L375.5 328.50L376.5 328.29L377.5 328.38L378.5 328.62L379.5 328.41L380.5 328.33L381.5 328.62L382.5 328.46L383.5 328.57L384.5 328.63L385.5 328.61L386.5 328.65L387.5 328.57L388.5 328.73L389.5 328.55L390.5 328.71L391.5 328.37L392.5 328.45L393.5 328.75L394.5 328.36L395.5 328.65L396.5 328.51L397.5 328.47L398.5 328.58L399.5 328.61L400.5 328.53L401.5 328.68L402.5 328.32L403.5 328.69L404.5 328.34L405.5 328.64L406.5 328.60L407.5 328.56L408.5 328.73L409.5 328.69L410.5 328.57L411.5 328.53L412.5 328.31L413.5 328.26L414.5 328.73L415.5 328.48L416.5 328.69L417.5 328.35L418.5 328.59L419.5 328.30L420.5 328.48L421.5 328.69L422.5 328.75L423.5 328.63L424.5 328.32L425.5 328.68L426.5 328.51L427.5 328.56L428.5 328.58L429.5 328.35L430.5 328.64L431.5 328.39L432.5 328.42L433.5 328.28L434.5 328.49L435.5 328.29L436.5 328.53L437.5 328.46L438.5 328.44L439.5 328.33L440.5 328.30L441.5 328.69L442.5 328.68L443.5 328.48L444.5 328.34L445.5 328.48L446.5 328.60L447.5 328.27L448.5 328.60L449.5 328.71L450.5 328.72L451.5 328.73L452.5 328.39L453.5 328.70L454.5 328.39L455.5 328.32L456.5 328.25L457.5 328.35L458.5 328.54L459.5 328.44L460.5 328.33L461.5 328.39L462.5 328.60L463.5 328.37L464.5 328.70L465.5 328.60L466.5 328.25L467.5 328.51L468.5 328.62L469.5 328.36L470.5 328.52L471.5 328.75L472.5 328.74L473.5 328.62L474.5 328.58L475.5 328.28L476.5 328.63L477.5 328.32L478.5 328.32L479.5 328.54L480.5 328.25L481.5 328.37L482.5 328.51L483.5 328.62L484.5 328.52L485.5 328.30L486.5 328.48L487.5 328.65L488.5 328.56L489.5 328.51L490.5 328.65L491.5 328.46L492.5 328.73L493.5 328.34L494.5 328.66L495.5 328.70L496.5 328.46L497.5 328.60L498.5 328.31L499.5 328.50L500.5 328.49L501.5 328.33L502.5 328.64L503.5 328.38L504.5 328.43L505.5 328.54L506.5 328.27L507.5 328.74L508.5 328.32L509.5 328.68L510.5 328.33L511.5 328.67L512.5 328.72L513.5 328.50L514.5 328.29L515.5 328.62L516.5 328.51L517.5 328.45L518.5 328.63L519.5 328.48L520.5 328.75L521.5 328.53L522.5 328.37L523.5 328.58L524.5 328.64L525.5 328.72L526.5 328.40L527.5 328.54L528.5 328.29L529.5 328.38L530.5 328.70L531.5 328.29L532.5 328.28L533.5 328.34L534.5 328.33L535.5 328.41L536.5 328.39L537.5 328.42L538.5 328.45L539.5 328.62L540.5 328.68L541.5 328.39L542.5 328.45L543.5 328.72L544.5 328.43L545.5 328.44L546.5 328.49L547.5 328.36L548.5 328.31L549.5 328.56L550.5 328.34L551.5 328.50L552.5 328.46L553.5 328.54L554.5 328.28L555.5 328.53L556.5 328.27L557.5 328.58L558.5 328.41L559.5 328.29L560.5 328.41L561.5 328.56L562.5 328.71L563.5 328.51L564.5 328.54L565.5 328.34L566.5 328.36L567.5 328.26L568.5 328.53L569.5 328.54L570.5 328.47L571.5 328.38L572.5 328.71L573.5 328.64L574.5 328.68L575.5 328.59L576.5 328.60L577.5 328.27L578.5 328.65L579.5 328.28L580.5 328.60L581.5 328.65L582.5 328.26L583.5 328.71L584.5 328.69L585.5 328.69L586.5 328.72L587.5 328.56L588.5 328.64L589.5 328.67L590.5 328.74L591.5 328.40L592.5 328.73L593.5 328.63L594.5 328.47L595.5 328.31L596.5 328.42L597.5 328.40L598.5 328.40L599.5 328.35L600.5 328.32L601.5 328.67L602.5 328.72L603.5 328.44L604.5 328.49L605.5 328.49L606.5 328.36L607.5 328.66L608.5 328.40L609.5 328.54L610.5 328.54L611.5 328.63L612.5 328.61L613.5 328.46L614.5 328.47L615.5 328.30L616.5 328.61L617.5 328.39L618.5 328.70L619.5 328.42L620.5 328.67L621.5 328.32L622.5 328.27L623.5 328.62L624.5 328.35L625.5 328.64L626.5 328.60L627.5 328.70L628.5 328.53L629.5 328.70L630.5 328.40L631.5 328.16L632.5 327.94L633.5 327.46L634.5 327.37L635.5 326.98L636.5 326.97L637.5 327.15L638.5 326.71L639.5 327.11L640.5 327.10L641.5 326.75L642.5 326.74L643.5 326.93L644.5 326.94L645.5 327.08L646.5 327.15L647.5 326.89L648.5 327.03L649.5 327.07L650.5 326.70L651.5 327.14L652.5 326.97L653.5 326.77L654.5 326.78L655.5 327.10L656.5 326.78L657.5 326.87L658.5 326.84L659.5 326.68L660.5 326.75L661.5 326.85L662.5 326.77L663.5 326.90L664.5 326.87L665.5 326.74L666.5 326.84L667.5 326.96L668.5 327.14L669.5 326.76L670.5 326.98L671.5 326.94L672.5 327.01L673.5 326.87L674.5 326.95L675.5 326.73L676.5 326.85L677.5 326.87L678.5 326.76L679.5 326.93L680.5 326.88L681.5 326.77L682.5 326.79L683.5 326.78L684.5 326.70L685.5 326.87L686.5 326.87L687.5 327.06L688.5 327.03L689.5 326.93L690.5 326.90L691.5 326.70L692.5 327.13L693.5 326.98L694.5 326.78L695.5 326.92L696.5 326.73L697.5 327.07L698.5 326.76L699.5 326.93L700.5 326.87L701.5 327.12L702.5 326.95L703.5 326.75L703.5 330.5 Z" fill="#e29136"/>
<path d="M254.5 318.55L255.5 316.43L256.5 314.03L257.5 315.04L258.5 315.49L259.5 310.26L260.5 305.56L261.5 300.06L262.5 299.11L263.5 302.43L264.5 303.35L265.5 299.92L266.5 296.95L267.5 300.16L268.5 304.29L269.5 306.03L270.5 303.05L271.5 305.99L272.5 311.33L273.5 315.54L274.5 319.24L275.5 318.72L276.5 317.47L277.5 312.98L278.5 307.84L279.5 309.12L280.5 313.18L281.5 319.04L282.5 319.57L283.5 319.62L284.5 319.99L285.5 319.87L286.5 320.04L287.5 319.87L288.5 320.11L289.5 320.32L290.5 319.54L291.5 319.56L292.5 319.74L293.5 319.90L294.5 320.34L295.5 320.45L296.5 320.40L297.5 320.65L298.5 319.90L299.5 320.31L300.5 319.84L301.5 320.36L302.5 319.74L303.5 319.87L304.5 320.82L305.5 320.60L306.5 319.84L307.5 320.34L308.5 319.79L309.5 320.45L310.5 320.82L311.5 320.22L312.5 320.07L313.5 320.64L314.5 320.85L315.5 320.59L316.5 319.91L317.5 320.15L318.5 320.87L319.5 320.74L320.5 320.91L321.5 320.97L322.5 320.17L323.5 321.35L324.5 321.43L325.5 322.49L326.5 323.71L327.5 324.04L328.5 324.81L329.5 324.34L330.5 323.62L331.5 321.99L332.5 322.22L333.5 322.15L334.5 321.38L335.5 321.57L336.5 322.12L337.5 321.48L338.5 322.22L339.5 322.02L340.5 321.51L341.5 321.74L342.5 322.34L343.5 321.36L344.5 322.22L345.5 322.17L346.5 321.60L347.5 322.09L348.5 322.12L349.5 322.37L350.5 322.35L351.5 321.81L352.5 322.18L353.5 321.79L354.5 322.04L355.5 321.95L356.5 321.39L357.5 321.92L358.5 321.82L359.5 321.50L360.5 322.25L361.5 322.28L362.5 321.45L363.5 321.55L364.5 322.18L365.5 322.24L366.5 321.64L367.5 321.42L368.5 322.23L369.5 321.40L370.5 321.48L371.5 321.79L372.5 321.99L373.5 322.34L374.5 322.41L375.5 321.39L376.5 322.19L377.5 321.67L378.5 322.17L379.5 321.54L380.5 321.79L381.5 322.13L382.5 322.26L383.5 321.66L384.5 322.37L385.5 322.20L386.5 321.83L387.5 321.51L388.5 321.77L389.5 322.14L390.5 321.44L391.5 322.23L392.5 322.43L393.5 322.15L394.5 321.96L395.5 322.38L396.5 322.26L397.5 322.04L398.5 321.82L399.5 322.31L400.5 322.05L401.5 321.47L402.5 321.37L403.5 321.73L404.5 321.69L405.5 321.81L406.5 322.30L407.5 322.41L408.5 322.43L409.5 321.45L410.5 321.68L411.5 321.39L412.5 322.43L413.5 321.75L414.5 321.92L415.5 321.65L416.5 322.10L417.5 321.35L418.5 322.37L419.5 321.85L420.5 321.64L421.5 321.46L422.5 321.64L423.5 321.68L424.5 321.58L425.5 321.44L426.5 322.06L427.5 321.70L428.5 321.46L429.5 321.49L430.5 321.99L431.5 321.58L432.5 321.50L433.5 321.82L434.5 321.76L435.5 322.03L436.5 321.81L437.5 321.78L438.5 322.36L439.5 321.75L440.5 321.36L441.5 321.48L442.5 321.65L443.5 322.02L444.5 321.64L445.5 321.81L446.5 321.97L447.5 321.53L448.5 322.36L449.5 321.62L450.5 322.42L451.5 321.79L452.5 321.92L453.5 322.20L454.5 321.68L455.5 321.90L456.5 321.77L457.5 321.44L458.5 322.17L459.5 322.44L460.5 322.12L461.5 321.70L462.5 322.23L463.5 322.26L464.5 321.45L465.5 321.72L466.5 321.96L467.5 321.47L468.5 322.09L469.5 321.72L470.5 322.23L471.5 321.98L472.5 321.56L473.5 321.44L474.5 321.48L475.5 322.03L476.5 321.81L477.5 322.10L478.5 322.30L479.5 321.90L480.5 321.53L481.5 321.52L482.5 321.67L483.5 321.40L484.5 322.15L485.5 322.26L486.5 321.95L487.5 322.15L488.5 322.21L489.5 321.99L490.5 321.76L491.5 321.91L492.5 322.10L493.5 321.53L494.5 321.37L495.5 321.95L496.5 322.37L497.5 322.42L498.5 321.49L499.5 322.40L500.5 321.67L501.5 321.82L502.5 322.11L503.5 321.58L504.5 322.43L505.5 322.30L506.5 321.95L507.5 322.42L508.5 321.54L509.5 322.19L510.5 322.30L511.5 322.40L512.5 321.76L513.5 321.96L514.5 321.76L515.5 321.73L516.5 321.56L517.5 321.40L518.5 321.70L519.5 322.23L520.5 321.93L521.5 322.25L522.5 322.44L523.5 321.93L524.5 321.66L525.5 322.25L526.5 322.15L527.5 322.07L528.5 321.68L529.5 321.88L530.5 321.77L531.5 321.62L532.5 322.02L533.5 321.58L534.5 321.45L535.5 322.35L536.5 321.42L537.5 321.66L538.5 322.31L539.5 321.95L540.5 321.76L541.5 321.45L542.5 322.04L543.5 321.82L544.5 321.48L545.5 321.57L546.5 321.41L547.5 321.94L548.5 321.73L549.5 322.22L550.5 321.66L551.5 321.55L552.5 321.74L553.5 321.66L554.5 322.22L555.5 321.46L556.5 321.37L557.5 321.37L558.5 321.86L559.5 321.58L560.5 322.10L561.5 321.45L562.5 321.51L563.5 322.07L564.5 322.36L565.5 321.97L566.5 321.84L567.5 321.60L568.5 321.91L569.5 322.42L570.5 321.56L571.5 322.38L572.5 321.57L573.5 322.26L574.5 322.08L575.5 321.58L576.5 322.30L577.5 322.29L578.5 321.88L579.5 321.65L580.5 321.53L581.5 321.69L582.5 321.41L583.5 321.91L584.5 321.41L585.5 322.36L586.5 322.21L587.5 321.87L588.5 322.13L589.5 321.65L590.5 321.75L591.5 321.87L592.5 321.52L593.5 321.83L594.5 322.11L595.5 322.03L596.5 321.52L597.5 321.46L598.5 322.22L599.5 321.51L600.5 321.38L601.5 321.87L602.5 321.82L603.5 322.23L604.5 321.86L605.5 321.90L606.5 321.78L607.5 322.42L608.5 321.38L609.5 321.88L610.5 322.01L611.5 321.57L612.5 321.83L613.5 321.91L614.5 321.69L615.5 322.38L616.5 321.86L617.5 321.99L618.5 321.40L619.5 321.43L620.5 322.15L621.5 321.93L622.5 322.31L623.5 321.97L624.5 321.55L625.5 321.46L626.5 321.93L627.5 322.10L628.5 322.24L629.5 321.77L630.5 321.43L631.5 321.91L632.5 318.19L633.5 316.02L634.5 316.34L635.5 316.80L636.5 311.68L637.5 307.46L638.5 305.80L639.5 308.37L640.5 310.93L641.5 312.25L642.5 310.91L643.5 308.49L644.5 305.83L645.5 304.52L646.5 306.47L647.5 310.07L648.5 313.64L649.5 315.60L650.5 315.80L651.5 314.87L652.5 316.33L653.5 317.36L654.5 315.85L655.5 314.47L656.5 314.36L657.5 314.88L658.5 313.44L659.5 312.96L660.5 311.24L661.5 314.16L662.5 312.81L663.5 312.20L664.5 313.45L665.5 314.03L666.5 312.48L667.5 312.29L668.5 316.07L669.5 315.57L670.5 316.79L671.5 320.25L672.5 315.76L673.5 313.44L674.5 310.13L675.5 309.09L676.5 307.18L677.5 305.26L678.5 303.91L679.5 306.30L680.5 305.70L681.5 306.16L682.5 308.30L683.5 314.05L684.5 313.48L685.5 313.92L686.5 312.49L687.5 311.22L688.5 312.50L689.5 313.30L690.5 312.04L691.5 310.37L692.5 310.60L693.5 313.01L694.5 312.94L695.5 313.48L696.5 312.42L697.5 311.89L698.5 313.10L699.5 314.33L700.5 311.63L701.5 309.46L702.5 310.03L703.5 313.95" stroke="#0000ee" stroke-width="1.1" fill="none"/>
<path d="M254.5 327.42L255.5 327.20L256.5 327.19L257.5 327.10L258.5 327.43L259.5 327.40L260.5 327.44L261.5 327.39L262.5 327.13L263.5 327.42L264.5 327.22L265.5 327.37L266.5 327.32L267.5 327.24L268.5 327.03L269.5 327.14L270.5 327.43L271.5 327.29L272.5 327.35L273.5 326.98L274.5 327.01L275.5 327.00L276.5 326.99L277.5 327.02L278.5 326.91L279.5 326.98L280.5 327.24L281.5 326.94L282.5 327.11L283.5 326.97L284.5 327.07L285.5 327.14L286.5 327.17L287.5 327.14L288.5 327.19L289.5 327.29L290.5 326.94L291.5 326.95L292.5 326.86L293.5 327.00L294.5 327.07L295.5 326.98L296.5 327.28L297.5 327.01L298.5 327.13L299.5 327.26L300.5 327.25L301.5 327.09L302.5 327.22L303.5 327.12L304.5 327.05L305.5 327.15L306.5 327.28L307.5 327.10L308.5 327.23L309.5 327.23L310.5 327.25L311.5 327.17L312.5 327.31L313.5 327.02L314.5 326.87L315.5 327.16L316.5 326.99L317.5 326.88L318.5 327.33L319.5 327.28L320.5 326.95L321.5 326.93L322.5 327.03L323.5 327.53L324.5 327.66L325.5 327.70L326.5 327.95L327.5 328.25L328.5 328.58L329.5 328.29L330.5 328.56L331.5 328.39L332.5 328.68L333.5 328.26L334.5 328.45L335.5 328.39L336.5 328.64L337.5 328.44L338.5 328.46L339.5 328.45L340.5 328.57L341.5 328.39L342.5 328.58L343.5 328.60L344.5 328.67L345.5 328.41L346.5 328.69L347.5 328.64L348.5 328.72L349.5 328.43L350.5 328.47L351.5 328.48L352.5 328.73L353.5 328.53L354.5 328.58L355.5 328.70L356.5 328.75L357.5 328.25L358.5 328.69L359.5 328.60L360.5 328.62L361.5 328.45L362.5 328.71L363.5 328.52L364.5 328.57L365.5 328.33L366.5 328.75L367.5 328.58L368.5 328.50L369.5 328.27L370.5 328.49L371.5 328.51L372.5 328.42L373.5 328.60L374.5 328.73L375.5 328.50L376.5 328.29L377.5 328.38L378.5 328.62L379.5 328.41L380.5 328.33L381.5 328.62L382.5 328.46L383.5 328.57L384.5 328.63L385.5 328.61L386.5 328.65L387.5 328.57L388.5 328.73L389.5 328.55L390.5 328.71L391.5 328.37L392.5 328.45L393.5 328.75L394.5 328.36L395.5 328.65L396.5 328.51L397.5 328.47L398.5 328.58L399.5 328.61L400.5 328.53L401.5 328.68L402.5 328.32L403.5 328.69L404.5 328.34L405.5 328.64L406.5 328.60L407.5 328.56L408.5 328.73L409.5 328.69L410.5 328.57L411.5 328.53L412.5 328.31L413.5 328.26L414.5 328.73L415.5 328.48L416.5 328.69L417.5 328.35L418.5 328.59L419.5 328.30L420.5 328.48L421.5 328.69L422.5 328.75L423.5 328.63L424.5 328.32L425.5 328.68L426.5 328.51L427.5 328.56L428.5 328.58L429.5 328.35L430.5 328.64L431.5 328.39L432.5 328.42L433.5 328.28L434.5 328.49L435.5 328.29L436.5 328.53L437.5 328.46L438.5 328.44L439.5 328.33L440.5 328.30L441.5 328.69L442.5 328.68L443.5 328.48L444.5 328.34L445.5 328.48L446.5 328.60L447.5 328.27L448.5 328.60L449.5 328.71L450.5 328.72L451.5 328.73L452.5 328.39L453.5 328.70L454.5 328.39L455.5 328.32L456.5 328.25L457.5 328.35L458.5 328.54L459.5 328.44L460.5 328.33L461.5 328.39L462.5 328.60L463.5 328.37L464.5 328.70L465.5 328.60L466.5 328.25L467.5 328.51L468.5 328.62L469.5 328.36L470.5 328.52L471.5 328.75L472.5 328.74L473.5 328.62L474.5 328.58L475.5 328.28L476.5 328.63L477.5 328.32L478.5 328.32L479.5 328.54L480.5 328.25L481.5 328.37L482.5 328.51L483.5 328.62L484.5 328.52L485.5 328.30L486.5 328.48L487.5 328.65L488.5 328.56L489.5 328.51L490.5 328.65L491.5 328.46L492.5 328.73L493.5 328.34L494.5 328.66L495.5 328.70L496.5 328.46L497.5 328.60L498.5 328.31L499.5 328.50L500.5 328.49L501.5 328.33L502.5 328.64L503.5 328.38L504.5 328.43L505.5 328.54L506.5 328.27L507.5 328.74L508.5 328.32L509.5 328.68L510.5 328.33L511.5 328.67L512.5 328.72L513.5 328.50L514.5 328.29L515.5 328.62L516.5 328.51L517.5 328.45L518.5 328.63L519.5 328.48L520.5 328.75L521.5 328.53L522.5 328.37L523.5 328.58L524.5 328.64L525.5 328.72L526.5 328.40L527.5 328.54L528.5 328.29L529.5 328.38L530.5 328.70L531.5 328.29L532.5 328.28L533.5 328.34L534.5 328.33L535.5 328.41L536.5 328.39L537.5 328.42L538.5 328.45L539.5 328.62L540.5 328.68L541.5 328.39L542.5 328.45L543.5 328.72L544.5 328.43L545.5 328.44L546.5 328.49L547.5 328.36L548.5 328.31L549.5 328.56L550.5 328.34L551.5 328.50L552.5 328.46L553.5 328.54L554.5 328.28L555.5 328.53L556.5 328.27L557.5 328.58L558.5 328.41L559.5 328.29L560.5 328.41L561.5 328.56L562.5 328.71L563.5 328.51L564.5 328.54L565.5 328.34L566.5 328.36L567.5 328.26L568.5 328.53L569.5 328.54L570.5 328.47L571.5 328.38L572.5 328.71L573.5 328.64L574.5 328.68L575.5 328.59L576.5 328.60L577.5 328.27L578.5 328.65L579.5 328.28L580.5 328.60L581.5 328.65L582.5 328.26L583.5 328.71L584.5 328.69L585.5 328.69L586.5 328.72L587.5 328.56L588.5 328.64L589.5 328.67L590.5 328.74L591.5 328.40L592.5 328.73L593.5 328.63L594.5 328.47L595.5 328.31L596.5 328.42L597.5 328.40L598.5 328.40L599.5 328.35L600.5 328.32L601.5 328.67L602.5 328.72L603.5 328.44L604.5 328.49L605.5 328.49L606.5 328.36L607.5 328.66L608.5 328.40L609.5 328.54L610.5 328.54L611.5 328.63L612.5 328.61L613.5 328.46L614.5 328.47L615.5 328.30L616.5 328.61L617.5 328.39L618.5 328.70L619.5 328.42L620.5 328.67L621.5 328.32L622.5 328.27L623.5 328.62L624.5 328.35L625.5 328.64L626.5 328.60L627.5 328.70L628.5 328.53L629.5 328.70L630.5 328.40L631.5 328.16L632.5 327.94L633.5 327.46L634.5 327.37L635.5 326.98L636.5 326.97L637.5 327.15L638.5 326.71L639.5 327.11L640.5 327.10L641.5 326.75L642.5 326.74L643.5 326.93L644.5 326.94L645.5 327.08L646.5 327.15L647.5 326.89L648.5 327.03L649.5 327.07L650.5 326.70L651.5 327.14L652.5 326.97L653.5 326.77L654.5 326.78L655.5 327.10L656.5 326.78L657.5 326.87L658.5 326.84L659.5 326.68L660.5 326.75L661.5 326.85L662.5 326.77L663.5 326.90L664.5 326.87L665.5 326.74L666.5 326.84L667.5 326.96L668.5 327.14L669.5 326.76L670.5 326.98L671.5 326.94L672.5 327.01L673.5 326.87L674.5 326.95L675.5 326.73L676.5 326.85L677.5 326.87L678.5 326.76L679.5 326.93L680.5 326.88L681.5 326.77L682.5 326.79L683.5 326.78L684.5 326.70L685.5 326.87L686.5 326.87L687.5 327.06L688.5 327.03L689.5 326.93L690.5 326.90L691.5 326.70L692.5 327.13L693.5 326.98L694.5 326.78L695.5 326.92L696.5 326.73L697.5 327.07L698.5 326.76L699.5 326.93L700.5 326.87L701.5 327.12L702.5 326.95L703.5 326.75" stroke="#d86612" stroke-width="1.3" fill="none"/>
<path d="M254.5 326.01L255.5 325.59L256.5 325.22L257.5 324.95L258.5 324.60L259.5 323.53L260.5 322.55L261.5 321.44L262.5 322.46L263.5 323.48L264.5 322.69L265.5 321.87L266.5 321.97L267.5 322.71L268.5 323.57L269.5 323.17L270.5 323.09L271.5 324.19L272.5 325.59L273.5 325.46L274.5 325.53L275.5 325.52L276.5 325.43L277.5 324.60L278.5 323.59L279.5 324.42L280.5 325.50L281.5 325.68L282.5 325.60L283.5 325.71L284.5 325.88L285.5 325.82L286.5 325.87L287.5 325.84L288.5 325.78L289.5 325.87L290.5 325.76L291.5 325.89L292.5 325.87L293.5 325.74L294.5 325.82L295.5 325.82L296.5 325.78L297.5 325.80L298.5 325.82L299.5 325.89L300.5 325.75L301.5 325.71L302.5 325.70L303.5 325.77L304.5 325.83L305.5 325.83L306.5 325.76L307.5 325.77L308.5 325.88L309.5 325.85L310.5 325.83L311.5 325.80L312.5 325.74L313.5 325.80L314.5 325.89L315.5 325.74L316.5 325.81L317.5 325.80L318.5 325.86L319.5 325.81L320.5 325.82L321.5 325.75L322.5 325.88L323.5 326.09L324.5 326.46L325.5 326.66L326.5 327.09L327.5 327.34L328.5 327.40L329.5 327.41L330.5 327.59L331.5 327.51L332.5 327.56L333.5 327.54L334.5 327.50L335.5 327.41L336.5 327.50L337.5 327.41L338.5 327.57L339.5 327.42L340.5 327.53L341.5 327.56L342.5 327.45L343.5 327.42L344.5 327.60L345.5 327.55L346.5 327.45L347.5 327.53L348.5 327.55L349.5 327.60L350.5 327.59L351.5 327.48L352.5 327.40L353.5 327.40L354.5 327.50L355.5 327.60L356.5 327.54L357.5 327.44L358.5 327.43L359.5 327.47L360.5 327.55L361.5 327.49L362.5 327.50L363.5 327.47L364.5 327.55L365.5 327.41L366.5 327.42L367.5 327.57L368.5 327.54L369.5 327.43L370.5 327.54L371.5 327.41L372.5 327.50L373.5 327.46L374.5 327.46L375.5 327.56L376.5 327.54L377.5 327.55L378.5 327.46L379.5 327.46L380.5 327.57L381.5 327.42L382.5 327.52L383.5 327.55L384.5 327.51L385.5 327.40L386.5 327.49L387.5 327.48L388.5 327.42L389.5 327.41L390.5 327.45L391.5 327.52L392.5 327.48L393.5 327.42L394.5 327.44L395.5 327.48L396.5 327.53L397.5 327.53L398.5 327.45L399.5 327.49L400.5 327.60L401.5 327.46L402.5 327.42L403.5 327.44L404.5 327.42L405.5 327.42L406.5 327.49L407.5 327.44L408.5 327.52L409.5 327.58L410.5 327.53L411.5 327.54L412.5 327.41L413.5 327.46L414.5 327.49L415.5 327.48L416.5 327.58L417.5 327.49L418.5 327.46L419.5 327.52L420.5 327.55L421.5 327.52L422.5 327.54L423.5 327.46L424.5 327.57L425.5 327.58L426.5 327.54L427.5 327.46L428.5 327.45L429.5 327.47L430.5 327.41L431.5 327.53L432.5 327.59L433.5 327.50L434.5 327.51L435.5 327.56L436.5 327.47L437.5 327.53L438.5 327.55L439.5 327.53L440.5 327.41L441.5 327.60L442.5 327.53L443.5 327.54L444.5 327.56L445.5 327.51L446.5 327.56L447.5 327.42L448.5 327.50L449.5 327.46L450.5 327.57L451.5 327.51L452.5 327.48L453.5 327.43L454.5 327.55L455.5 327.51L456.5 327.43L457.5 327.43L458.5 327.55L459.5 327.49L460.5 327.45L461.5 327.52L462.5 327.47L463.5 327.47L464.5 327.41L465.5 327.49L466.5 327.46L467.5 327.53L468.5 327.45L469.5 327.54L470.5 327.50L471.5 327.53L472.5 327.54L473.5 327.57L474.5 327.55L475.5 327.49L476.5 327.55L477.5 327.59L478.5 327.44L479.5 327.54L480.5 327.41L481.5 327.48L482.5 327.52L483.5 327.43L484.5 327.42L485.5 327.54L486.5 327.57L487.5 327.47L488.5 327.43L489.5 327.48L490.5 327.44L491.5 327.52L492.5 327.48L493.5 327.55L494.5 327.52L495.5 327.52L496.5 327.52L497.5 327.52L498.5 327.44L499.5 327.57L500.5 327.56L501.5 327.55L502.5 327.41L503.5 327.50L504.5 327.59L505.5 327.43L506.5 327.43L507.5 327.44L508.5 327.53L509.5 327.45L510.5 327.54L511.5 327.57L512.5 327.43L513.5 327.43L514.5 327.56L515.5 327.42L516.5 327.60L517.5 327.54L518.5 327.60L519.5 327.57L520.5 327.57L521.5 327.46L522.5 327.54L523.5 327.56L524.5 327.56L525.5 327.54L526.5 327.43L527.5 327.48L528.5 327.58L529.5 327.46L530.5 327.49L531.5 327.51L532.5 327.49L533.5 327.47L534.5 327.44L535.5 327.50L536.5 327.47L537.5 327.51L538.5 327.47L539.5 327.52L540.5 327.52L541.5 327.50L542.5 327.46L543.5 327.54L544.5 327.42L545.5 327.50L546.5 327.43L547.5 327.46L548.5 327.41L549.5 327.46L550.5 327.51L551.5 327.52L552.5 327.48L553.5 327.45L554.5 327.43L555.5 327.57L556.5 327.59L557.5 327.58L558.5 327.58L559.5 327.59L560.5 327.60L561.5 327.55L562.5 327.58L563.5 327.46L564.5 327.48L565.5 327.41L566.5 327.41L567.5 327.45L568.5 327.41L569.5 327.59L570.5 326.91L571.5 326.13L572.5 326.22L573.5 326.92L574.5 327.45L575.5 327.52L576.5 327.49L577.5 327.54L578.5 327.55L579.5 327.58L580.5 327.48L581.5 327.41L582.5 327.40L583.5 327.45L584.5 327.41L585.5 327.53L586.5 327.54L587.5 327.42L588.5 327.48L589.5 327.47L590.5 327.60L591.5 327.55L592.5 327.50L593.5 327.45L594.5 327.43L595.5 327.45L596.5 327.53L597.5 327.52L598.5 327.43L599.5 327.40L600.5 327.50L601.5 327.56L602.5 327.48L603.5 327.49L604.5 327.53L605.5 327.55L606.5 327.52L607.5 327.48L608.5 327.57L609.5 327.49L610.5 327.41L611.5 327.45L612.5 327.55L613.5 327.52L614.5 327.58L615.5 326.49L616.5 325.55L617.5 325.65L618.5 326.53L619.5 327.48L620.5 327.48L621.5 327.52L622.5 327.54L623.5 327.53L624.5 327.40L625.5 327.53L626.5 327.50L627.5 327.51L628.5 327.57L629.5 327.52L630.5 327.56L631.5 327.34L632.5 326.73L633.5 326.13L634.5 325.41L635.5 324.54L636.5 323.53L637.5 322.47L638.5 323.77L639.5 325.00L640.5 324.30L641.5 323.75L642.5 322.97L643.5 322.83L644.5 322.55L645.5 323.44L646.5 324.40L647.5 325.22L648.5 326.07L649.5 326.01L650.5 326.04L651.5 325.93L652.5 326.05L653.5 326.06L654.5 325.97L655.5 325.97L656.5 325.48L657.5 325.00L658.5 324.41L659.5 324.01L660.5 323.91L661.5 324.02L662.5 324.01L663.5 324.78L664.5 325.46L665.5 325.45L666.5 325.55L667.5 325.49L668.5 325.45L669.5 325.50L670.5 325.47L671.5 325.23L672.5 324.96L673.5 324.78L674.5 324.54L675.5 324.35L676.5 323.92L677.5 324.07L678.5 324.27L679.5 324.28L680.5 324.42L681.5 324.44L682.5 324.18L683.5 324.14L684.5 324.04L685.5 324.21L686.5 324.35L687.5 324.59L688.5 324.76L689.5 324.91L690.5 325.04L691.5 325.17L692.5 325.28L693.5 325.23L694.5 325.42L695.5 325.50L696.5 325.42L697.5 325.29L698.5 325.38L699.5 325.30L700.5 325.12L701.5 325.04L702.5 324.98L703.5 324.99" stroke="#00eeee" stroke-width="1.35" fill="none"/>
<path d="M254.5 330.5L254.5 330.50L255.5 330.50L256.5 330.50L257.5 330.50L258.5 330.50L259.5 330.50L260.5 330.50L261.5 330.50L262.5 330.50L263.5 330.50L264.5 330.50L265.5 330.50L266.5 330.50L267.5 330.50L268.5 330.50L269.5 330.50L270.5 330.50L271.5 330.50L272.5 330.50L273.5 330.50L274.5 330.50L275.5 330.50L276.5 330.50L277.5 330.50L278.5 330.50L279.5 330.50L280.5 330.50L281.5 330.50L282.5 330.50L283.5 330.50L284.5 330.50L285.5 330.50L286.5 330.50L287.5 330.50L288.5 330.50L289.5 330.50L290.5 330.50L291.5 330.50L292.5 330.50L293.5 330.50L294.5 330.50L295.5 330.50L296.5 330.50L297.5 330.50L298.5 330.50L299.5 330.50L300.5 330.50L301.5 330.50L302.5 330.50L303.5 330.50L304.5 330.50L305.5 330.50L306.5 330.50L307.5 330.50L308.5 330.50L309.5 330.50L310.5 330.50L311.5 330.50L312.5 330.50L313.5 330.50L314.5 330.50L315.5 330.50L316.5 330.50L317.5 330.50L318.5 330.50L319.5 330.50L320.5 330.50L321.5 330.50L322.5 330.50L323.5 330.50L324.5 330.50L325.5 330.50L326.5 330.50L327.5 330.50L328.5 330.50L329.5 330.50L330.5 330.50L331.5 330.50L332.5 330.50L333.5 330.50L334.5 330.50L335.5 330.50L336.5 330.50L337.5 330.50L338.5 330.50L339.5 330.50L340.5 330.50L341.5 330.50L342.5 330.50L343.5 330.50L344.5 330.50L345.5 330.50L346.5 330.50L347.5 330.50L348.5 330.50L349.5 330.50L350.5 330.50L351.5 330.50L352.5 330.50L353.5 330.50L354.5 330.50L355.5 330.50L356.5 330.50L357.5 330.50L358.5 330.50L359.5 330.50L360.5 330.50L361.5 330.50L362.5 330.50L363.5 330.50L364.5 330.50L365.5 330.50L366.5 330.50L367.5 330.50L368.5 330.50L369.5 330.50L370.5 330.50L371.5 330.50L372.5 330.50L373.5 330.50L374.5 330.50L375.5 330.50L376.5 330.50L377.5 330.50L378.5 330.50L379.5 330.50L380.5 330.50L381.5 330.50L382.5 330.50L383.5 330.50L384.5 330.50L385.5 330.50L386.5 330.50L387.5 330.50L388.5 330.50L389.5 330.50L390.5 330.50L391.5 330.50L392.5 330.50L393.5 330.50L394.5 330.50L395.5 330.50L396.5 330.50L397.5 330.50L398.5 330.50L399.5 330.50L400.5 330.50L401.5 330.50L402.5 330.50L403.5 330.50L404.5 330.50L405.5 330.50L406.5 330.50L407.5 330.50L408.5 330.50L409.5 330.50L410.5 330.50L411.5 330.50L412.5 330.50L413.5 330.50L414.5 330.50L415.5 330.50L416.5 330.50L417.5 330.50L418.5 330.50L419.5 330.50L420.5 330.50L421.5 330.50L422.5 330.50L423.5 330.50L424.5 330.50L425.5 330.50L426.5 330.50L427.5 330.50L428.5 330.50L429.5 330.50L430.5 330.50L431.5 330.50L432.5 330.50L433.5 330.50L434.5 330.50L435.5 330.50L436.5 330.50L437.5 330.50L438.5 330.50L439.5 330.50L440.5 330.50L441.5 330.50L442.5 330.50L443.5 330.50L444.5 330.50L445.5 330.50L446.5 330.50L447.5 330.50L448.5 330.50L449.5 330.50L450.5 330.50L451.5 330.50L452.5 330.50L453.5 330.50L454.5 330.50L455.5 330.50L456.5 330.50L457.5 330.50L458.5 330.50L459.5 330.50L460.5 330.50L461.5 330.50L462.5 330.50L463.5 330.50L464.5 330.50L465.5 330.50L466.5 330.50L467.5 330.50L468.5 330.50L469.5 330.50L470.5 330.50L471.5 330.50L472.5 330.50L473.5 330.50L474.5 330.50L475.5 330.50L476.5 330.50L477.5 330.50L478.5 330.50L479.5 330.50L480.5 330.50L481.5 330.50L482.5 330.50L483.5 330.50L484.5 330.50L485.5 330.50L486.5 330.50L487.5 330.50L488.5 330.50L489.5 330.50L490.5 330.50L491.5 330.50L492.5 330.50L493.5 330.50L494.5 330.50L495.5 330.50L496.5 330.50L497.5 330.50L498.5 330.50L499.5 330.50L500.5 330.50L501.5 330.50L502.5 330.50L503.5 330.50L504.5 330.50L505.5 330.50L506.5 330.50L507.5 330.50L508.5 330.50L509.5 330.50L510.5 330.50L511.5 330.50L512.5 330.50L513.5 330.50L514.5 330.50L515.5 330.50L516.5 330.50L517.5 330.50L518.5 330.50L519.5 330.50L520.5 330.50L521.5 330.50L522.5 330.50L523.5 330.50L524.5 330.50L525.5 330.50L526.5 330.50L527.5 330.50L528.5 330.50L529.5 330.50L530.5 330.50L531.5 330.50L532.5 330.50L533.5 330.50L534.5 330.50L535.5 330.50L536.5 330.50L537.5 330.50L538.5 330.50L539.5 330.50L540.5 330.50L541.5 330.50L542.5 330.50L543.5 330.50L544.5 330.50L545.5 330.50L546.5 330.50L547.5 330.50L548.5 330.50L549.5 330.50L550.5 330.50L551.5 330.50L552.5 330.50L553.5 330.50L554.5 330.50L555.5 330.50L556.5 330.50L557.5 330.50L558.5 330.50L559.5 330.50L560.5 330.50L561.5 330.50L562.5 330.50L563.5 330.50L564.5 330.50L565.5 330.50L566.5 330.50L567.5 330.50L568.5 330.50L569.5 330.50L570.5 329.62L571.5 328.74L572.5 328.74L573.5 329.62L574.5 330.50L575.5 330.50L576.5 330.50L577.5 330.50L578.5 330.50L579.5 330.50L580.5 330.50L581.5 330.50L582.5 330.50L583.5 330.50L584.5 330.50L585.5 330.50L586.5 330.50L587.5 330.50L588.5 330.50L589.5 330.50L590.5 330.50L591.5 330.50L592.5 330.50L593.5 330.50L594.5 330.50L595.5 330.50L596.5 330.50L597.5 330.50L598.5 330.50L599.5 330.50L600.5 330.50L601.5 330.50L602.5 330.50L603.5 330.50L604.5 330.50L605.5 330.50L606.5 330.50L607.5 330.50L608.5 330.50L609.5 330.50L610.5 330.50L611.5 330.50L612.5 330.50L613.5 330.50L614.5 330.50L615.5 329.86L616.5 329.22L617.5 329.22L618.5 329.86L619.5 330.50L620.5 330.50L621.5 330.50L622.5 330.50L623.5 330.50L624.5 330.50L625.5 330.50L626.5 330.50L627.5 330.50L628.5 330.50L629.5 330.50L630.5 330.50L631.5 330.50L632.5 330.50L633.5 330.50L634.5 330.50L635.5 330.50L636.5 330.50L637.5 330.50L638.5 330.50L639.5 330.50L640.5 330.50L641.5 330.50L642.5 330.50L643.5 330.50L644.5 330.50L645.5 330.50L646.5 330.50L647.5 330.50L648.5 330.50L649.5 330.50L650.5 330.50L651.5 330.50L652.5 330.50L653.5 330.50L654.5 330.50L655.5 330.50L656.5 330.50L657.5 330.50L658.5 330.50L659.5 330.50L660.5 330.50L661.5 330.50L662.5 330.50L663.5 330.50L664.5 330.50L665.5 330.50L666.5 330.50L667.5 330.50L668.5 330.50L669.5 330.50L670.5 330.50L671.5 330.50L672.5 330.50L673.5 330.50L674.5 330.50L675.5 330.50L676.5 330.50L677.5 330.50L678.5 330.50L679.5 330.50L680.5 330.50L681.5 330.50L682.5 330.50L683.5 330.50L684.5 330.50L685.5 330.50L686.5 330.50L687.5 330.50L688.5 330.50L689.5 330.50L690.5 330.50L691.5 330.50L692.5 330.50L693.5 330.50L694.5 330.50L695.5 330.50L696.5 330.50L697.5 330.50L698.5 330.50L699.5 330.50L700.5 330.50L701.5 330.50L702.5 330.50L703.5 330.50L703.5 330.5 Z" fill="#ee44ee"/>
<path d="M259.5 180V331M278.5 180V331M296.5 180V331M334.5 180V331M353.5 180V331M371.5 180V331M390.5 180V331M409.5 180V331M446.5 180V331M465.5 180V331M484.5 180V331M503.5 180V331M521.5 180V331M559.5 180V331M578.5 180V331M596.5 180V331M615.5 180V331M634.5 180V331M671.5 180V331M690.5 180V331" stroke="#808020" stroke-opacity="0.44" stroke-width="1" stroke-dasharray="1 1" fill="none" shape-rendering="crispEdges"/>
<path d="M315.5 180V331M428.5 180V331M540.5 180V331M653.5 180V331" stroke="#80c080" stroke-opacity="0.68" stroke-width="1" stroke-dasharray="1 1" fill="none" shape-rendering="crispEdges"/>
<path d="M253 187.5H705M253 202.5H705M253 217.5H705M253 232.5H705M253 247.5H705M253 262.5H705M253 277.5H705M253 292.5H705M253 307.5H705M253 322.5H705" stroke="#808020" stroke-opacity="0.44" stroke-width="1" stroke-dasharray="1 1" fill="none" shape-rendering="crispEdges"/>
<path d="M254 180.5H705M254 195.5H705M254 210.5H705M254 225.5H705M254 240.5H705M254 255.5H705M254 270.5H705M254 285.5H705M254 300.5H705M254 315.5H705M254 330.5H705" stroke="#80c080" stroke-opacity="0.68" stroke-width="1" stroke-dasharray="1 1" fill="none" shape-rendering="crispEdges"/>
<path d="M250 330.5H708M254.5 176V334" stroke="#101010" stroke-opacity="0.55" stroke-width="1" fill="none" shape-rendering="crispEdges"/>
<path d="M259.5 178V180M259.5 331V333M278.5 178V180M278.5 331V333M296.5 178V180M296.5 331V333M334.5 178V180M334.5 331V333M353.5 178V180M353.5 331V333M371.5 178V180M371.5 331V333M390.5 178V180M390.5 331V333M409.5 178V180M409.5 331V333M446.5 178V180M446.5 331V333M465.5 178V180M465.5 331V333M484.5 178V180M484.5 331V333M503.5 178V180M503.5 331V333M521.5 178V180M521.5 331V333M559.5 178V180M559.5 331V333M578.5 178V180M578.5 331V333M596.5 178V180M596.5 331V333M615.5 178V180M615.5 331V333M634.5 178V180M634.5 331V333M671.5 178V180M671.5 331V333M690.5 178V180M690.5 331V333" stroke="#808020" stroke-opacity="0.4" stroke-width="1" fill="none" shape-rendering="crispEdges"/>
<path d="M315.5 178V180M315.5 331V333M428.5 178V180M428.5 331V333M540.5 178V180M540.5 331V333M653.5 178V180M653.5 331V333" stroke="#80c080" stroke-opacity="0.66" stroke-width="1" fill="none" shape-rendering="crispEdges"/>
<path d="M252 187.5H254M705 187.5H707M252 202.5H254M705 202.5H707M252 217.5H254M705 217.5H707M252 232.5H254M705 232.5H707M252 247.5H254M705 247.5H707M252 262.5H254M705 262.5H707M252 277.5H254M705 277.5H707M252 292.5H254M705 292.5H707M252 307.5H254M705 307.5H707M252 322.5H254M705 322.5H707" stroke="#808020" stroke-opacity="0.4" stroke-width="1" fill="none" shape-rendering="crispEdges"/>
<path d="M252 180.5H254M705 180.5H707M252 195.5H254M705 195.5H707M252 210.5H254M705 210.5H707M252 225.5H254M705 225.5H707M252 240.5H254M705 240.5H707M252 255.5H254M705 255.5H707M252 270.5H254M705 270.5H707M252 285.5H254M705 285.5H707M252 300.5H254M705 300.5H707M252 315.5H254M705 315.5H707M252 330.5H254M705 330.5H707" stroke="#80c080" stroke-opacity="0.66" stroke-width="1" fill="none" shape-rendering="crispEdges"/>
<path d="M251.2 177.6 L254.3 173.2 L257.4 177.6 Z" fill="#fff"/>
<path d="M706.4 327.2 L710.8 330.2 L706.4 333.2 Z" fill="#fff"/>
<rect x="200.5" y="351.5" width="7" height="7" fill="#4444ee" stroke="#8c8c8c" stroke-width="1"/>
<rect x="200.5" y="363.5" width="7" height="7" fill="#eeee44" stroke="#8c8c8c" stroke-width="1"/>
<rect x="200.5" y="375.5" width="7" height="7" fill="#44eeee" stroke="#8c8c8c" stroke-width="1"/>
<rect x="200.5" y="387.5" width="7" height="7" fill="#ee44ee" stroke="#8c8c8c" stroke-width="1"/>
<rect x="200.5" y="399.5" width="7" height="7" fill="#888888" stroke="#8c8c8c" stroke-width="1"/>
<rect x="200.5" y="411.5" width="7" height="7" fill="#e29136" stroke="#8c8c8c" stroke-width="1"/>
<rect x="200.5" y="423.5" width="7" height="7" fill="#44ee44" stroke="#8c8c8c" stroke-width="1"/>
<rect x="200.5" y="435.5" width="7" height="7" fill="#448844" stroke="#8c8c8c" stroke-width="1"/>
<rect x="741" y="152" width="295" height="140" fill="#474747" />
<rect x="743" y="154" width="291" height="136" fill="#101010" />
<rect x="806" y="177" width="200" height="67" fill="#000" />
<path d="M807.0 243.5L807.0 213.41L808.0 193.33L809.0 191.79L810.0 197.19L811.0 186.83L812.0 188.20L813.0 200.83L814.0 215.52L815.0 217.59L816.0 206.40L817.0 203.22L818.0 216.37L819.0 215.82L820.0 215.98L821.0 215.77L822.0 215.75L823.0 217.69L824.0 219.10L825.0 219.07L826.0 218.65L827.0 218.77L828.0 219.22L829.0 218.79L830.0 219.27L831.0 218.96L832.0 219.32L833.0 219.43L834.0 218.84L835.0 220.50L836.0 221.70L837.0 224.66L838.0 228.24L839.0 227.65L840.0 225.98L841.0 226.27L842.0 226.17L843.0 226.50L844.0 225.99L845.0 226.16L846.0 225.97L847.0 226.02L848.0 226.43L849.0 226.39L850.0 226.52L851.0 226.54L852.0 226.59L853.0 226.43L854.0 226.21L855.0 226.63L856.0 226.16L857.0 226.40L858.0 226.42L859.0 226.06L860.0 226.29L861.0 226.41L862.0 226.29L863.0 226.13L864.0 226.59L865.0 225.94L866.0 226.61L867.0 226.10L868.0 226.03L869.0 226.61L870.0 226.07L871.0 226.36L872.0 226.21L873.0 226.61L874.0 226.58L875.0 226.49L876.0 225.95L877.0 226.48L878.0 226.08L879.0 225.96L880.0 225.95L881.0 226.37L882.0 226.36L883.0 226.24L884.0 226.06L885.0 226.53L886.0 226.08L887.0 226.05L888.0 226.00L889.0 226.58L890.0 225.94L891.0 226.54L892.0 226.36L893.0 226.17L894.0 225.96L895.0 226.36L896.0 225.95L897.0 226.21L898.0 226.38L899.0 226.37L900.0 226.47L901.0 226.54L902.0 226.49L903.0 226.11L904.0 225.89L905.0 226.47L906.0 226.55L907.0 225.89L908.0 226.21L909.0 226.30L910.0 226.42L911.0 226.17L912.0 226.00L913.0 226.26L914.0 226.28L915.0 226.54L916.0 225.94L917.0 226.55L918.0 226.23L919.0 225.99L920.0 226.48L921.0 226.06L922.0 225.91L923.0 226.13L924.0 226.02L925.0 226.49L926.0 226.26L927.0 226.46L928.0 225.97L929.0 226.36L930.0 226.25L931.0 225.86L932.0 225.96L933.0 225.88L934.0 226.24L935.0 226.22L936.0 226.05L937.0 226.22L938.0 226.35L939.0 226.27L940.0 226.45L941.0 226.29L942.0 225.86L943.0 225.88L944.0 226.11L945.0 225.50L946.0 221.11L947.0 221.79L948.0 226.06L949.0 225.72L950.0 225.68L951.0 226.05L952.0 225.77L953.0 225.80L954.0 225.88L955.0 225.92L956.0 225.87L957.0 226.16L958.0 225.94L959.0 226.26L960.0 226.14L961.0 225.95L962.0 226.03L963.0 226.33L964.0 225.89L965.0 224.40L966.0 215.94L967.0 217.84L968.0 226.07L969.0 226.37L970.0 226.18L971.0 226.43L972.0 226.28L973.0 224.40L974.0 216.29L975.0 206.61L976.0 202.90L977.0 199.33L978.0 195.77L979.0 196.60L980.0 203.26L981.0 207.24L982.0 210.87L983.0 214.17L984.0 212.68L985.0 211.49L986.0 209.73L987.0 208.23L988.0 209.01L989.0 210.19L990.0 212.52L991.0 219.37L992.0 223.35L993.0 205.34L994.0 197.73L995.0 196.80L996.0 199.44L997.0 207.38L998.0 210.56L999.0 207.41L1000.0 204.81L1001.0 206.40L1002.0 208.85L1003.0 211.83L1004.0 211.24L1005.0 210.54L1005.0 243.5 Z" fill="#44aaee"/>
<path d="M807.5 213.41L808.5 193.33L809.5 191.79L810.5 197.19L811.5 186.83L812.5 188.20L813.5 200.83L814.5 215.52L815.5 217.59L816.5 206.40L817.5 203.22L818.5 216.37L819.5 215.82L820.5 215.98L821.5 215.77L822.5 215.75L823.5 217.69L824.5 219.10L825.5 219.07L826.5 218.65L827.5 218.77L828.5 219.22L829.5 218.79L830.5 219.27L831.5 218.96L832.5 219.32L833.5 219.43L834.5 218.84L835.5 220.50L836.5 221.70L837.5 224.66L838.5 228.24L839.5 227.65L840.5 225.98L841.5 226.27L842.5 226.17L843.5 226.50L844.5 225.99L845.5 226.16L846.5 225.97L847.5 226.02L848.5 226.43L849.5 226.39L850.5 226.52L851.5 226.54L852.5 226.59L853.5 226.43L854.5 226.21L855.5 226.63L856.5 226.16L857.5 226.40L858.5 226.42L859.5 226.06L860.5 226.29L861.5 226.41L862.5 226.29L863.5 226.13L864.5 226.59L865.5 225.94L866.5 226.61L867.5 226.10L868.5 226.03L869.5 226.61L870.5 226.07L871.5 226.36L872.5 226.21L873.5 226.61L874.5 226.58L875.5 226.49L876.5 225.95L877.5 226.48L878.5 226.08L879.5 225.96L880.5 225.95L881.5 226.37L882.5 226.36L883.5 226.24L884.5 226.06L885.5 226.53L886.5 226.08L887.5 226.05L888.5 226.00L889.5 226.58L890.5 225.94L891.5 226.54L892.5 226.36L893.5 226.17L894.5 225.96L895.5 226.36L896.5 225.95L897.5 226.21L898.5 226.38L899.5 226.37L900.5 226.47L901.5 226.54L902.5 226.49L903.5 226.11L904.5 225.89L905.5 226.47L906.5 226.55L907.5 225.89L908.5 226.21L909.5 226.30L910.5 226.42L911.5 226.17L912.5 226.00L913.5 226.26L914.5 226.28L915.5 226.54L916.5 225.94L917.5 226.55L918.5 226.23L919.5 225.99L920.5 226.48L921.5 226.06L922.5 225.91L923.5 226.13L924.5 226.02L925.5 226.49L926.5 226.26L927.5 226.46L928.5 225.97L929.5 226.36L930.5 226.25L931.5 225.86L932.5 225.96L933.5 225.88L934.5 226.24L935.5 226.22L936.5 226.05L937.5 226.22L938.5 226.35L939.5 226.27L940.5 226.45L941.5 226.29L942.5 225.86L943.5 225.88L944.5 226.11L945.5 225.50L946.5 221.11L947.5 221.79L948.5 226.06L949.5 225.72L950.5 225.68L951.5 226.05L952.5 225.77L953.5 225.80L954.5 225.88L955.5 225.92L956.5 225.87L957.5 226.16L958.5 225.94L959.5 226.26L960.5 226.14L961.5 225.95L962.5 226.03L963.5 226.33L964.5 225.89L965.5 224.40L966.5 215.94L967.5 217.84L968.5 226.07L969.5 226.37L970.5 226.18L971.5 226.43L972.5 226.28L973.5 224.40L974.5 216.29L975.5 206.61L976.5 202.90L977.5 199.33L978.5 195.77L979.5 196.60L980.5 203.26L981.5 207.24L982.5 210.87L983.5 214.17L984.5 212.68L985.5 211.49L986.5 209.73L987.5 208.23L988.5 209.01L989.5 210.19L990.5 212.52L991.5 219.37L992.5 223.35L993.5 205.34L994.5 197.73L995.5 196.80L996.5 199.44L997.5 207.38L998.5 210.56L999.5 207.41L1000.5 204.81L1001.5 206.40L1002.5 208.85L1003.5 211.83L1004.5 211.24L1005.5 210.54" stroke="#00eeee" stroke-width="1.2" fill="none"/>
<path d="M807 243.5 H1006" stroke="#2222aa" stroke-width="1" fill="none"/>
<path d="M807.5 177V244M816.5 177V244M824.5 177V244M841.5 177V244M849.5 177V244M857.5 177V244M866.5 177V244M874.5 177V244M891.5 177V244M899.5 177V244M907.5 177V244M916.5 177V244M924.5 177V244M941.5 177V244M949.5 177V244M957.5 177V244M966.5 177V244M974.5 177V244M991.5 177V244M999.5 177V244" stroke="#808020" stroke-opacity="0.44" stroke-width="1" stroke-dasharray="1 1" fill="none" shape-rendering="crispEdges"/>
<path d="M832.5 177V244M882.5 177V244M932.5 177V244M982.5 177V244" stroke="#80c080" stroke-opacity="0.68" stroke-width="1" stroke-dasharray="1 1" fill="none" shape-rendering="crispEdges"/>
<path d="M805 184.5H1007M805 190.5H1007M805 197.5H1007M805 203.5H1007M805 217.5H1007M805 223.5H1007M805 230.5H1007M805 236.5H1007" stroke="#808020" stroke-opacity="0.44" stroke-width="1" stroke-dasharray="1 1" fill="none" shape-rendering="crispEdges"/>
<path d="M806 177.5H1007M806 210.5H1007M806 243.5H1007" stroke="#80c080" stroke-opacity="0.68" stroke-width="1" stroke-dasharray="1 1" fill="none" shape-rendering="crispEdges"/>
<path d="M802 243.5H1010M806.5 173V247" stroke="#101010" stroke-opacity="0.55" stroke-width="1" fill="none" shape-rendering="crispEdges"/>
<path d="M807.5 175V177M807.5 244V246M816.5 175V177M816.5 244V246M824.5 175V177M824.5 244V246M841.5 175V177M841.5 244V246M849.5 175V177M849.5 244V246M857.5 175V177M857.5 244V246M866.5 175V177M866.5 244V246M874.5 175V177M874.5 244V246M891.5 175V177M891.5 244V246M899.5 175V177M899.5 244V246M907.5 175V177M907.5 244V246M916.5 175V177M916.5 244V246M924.5 175V177M924.5 244V246M941.5 175V177M941.5 244V246M949.5 175V177M949.5 244V246M957.5 175V177M957.5 244V246M966.5 175V177M966.5 244V246M974.5 175V177M974.5 244V246M991.5 175V177M991.5 244V246M999.5 175V177M999.5 244V246" stroke="#808020" stroke-opacity="0.4" stroke-width="1" fill="none" shape-rendering="crispEdges"/>
<path d="M832.5 175V177M832.5 244V246M882.5 175V177M882.5 244V246M932.5 175V177M932.5 244V246M982.5 175V177M982.5 244V246" stroke="#80c080" stroke-opacity="0.66" stroke-width="1" fill="none" shape-rendering="crispEdges"/>
<path d="M804 184.5H806M1007 184.5H1009M804 190.5H806M1007 190.5H1009M804 197.5H806M1007 197.5H1009M804 203.5H806M1007 203.5H1009M804 217.5H806M1007 217.5H1009M804 223.5H806M1007 223.5H1009M804 230.5H806M1007 230.5H1009M804 236.5H806M1007 236.5H1009" stroke="#808020" stroke-opacity="0.4" stroke-width="1" fill="none" shape-rendering="crispEdges"/>
<path d="M804 177.5H806M1007 177.5H1009M804 210.5H806M1007 210.5H1009M804 243.5H806M1007 243.5H1009" stroke="#80c080" stroke-opacity="0.66" stroke-width="1" fill="none" shape-rendering="crispEdges"/>
<path d="M803.2 174.6 L806.3 170.2 L809.4 174.6 Z" fill="#fff"/>
<path d="M1008.4 240.2 L1012.8 243.2 L1008.4 246.2 Z" fill="#fff"/>
<rect x="754.5" y="264.5" width="7" height="7" fill="#44aaee" stroke="#8c8c8c" stroke-width="1"/>
<rect x="754.5" y="276.5" width="7" height="7" fill="#4444ee" stroke="#8c8c8c" stroke-width="1"/>
<rect x="741" y="292" width="295" height="152" fill="#474747" />
<rect x="743" y="294" width="291" height="148" fill="#101010" />
<rect x="806" y="317" width="200" height="67" fill="#000" />
<path d="M807.0 383.5L807.0 342.25L808.0 342.25L809.0 342.25L810.0 342.25L811.0 342.25L812.0 342.25L813.0 342.25L814.0 342.25L815.0 342.25L816.0 342.25L817.0 342.25L818.0 341.10L819.0 339.94L820.0 335.98L821.0 332.02L822.0 328.72L823.0 325.42L824.0 324.26L825.0 323.11L826.0 323.07L827.0 323.03L828.0 322.99L829.0 322.94L830.0 322.90L831.0 322.86L832.0 322.82L833.0 322.78L834.0 322.78L835.0 322.78L836.0 322.78L837.0 322.78L838.0 322.78L839.0 322.78L840.0 322.78L841.0 322.78L842.0 322.78L843.0 322.78L844.0 322.78L845.0 322.78L846.0 322.78L847.0 322.78L848.0 322.78L849.0 322.78L850.0 322.78L851.0 322.78L852.0 322.78L853.0 322.78L854.0 322.78L855.0 322.78L856.0 322.78L857.0 322.78L858.0 322.78L859.0 322.78L860.0 322.78L861.0 322.78L862.0 322.78L863.0 322.78L864.0 322.78L865.0 322.78L866.0 322.78L867.0 322.78L868.0 322.78L869.0 322.78L870.0 322.78L871.0 322.78L872.0 322.78L873.0 322.78L874.0 322.78L875.0 322.78L876.0 322.78L877.0 322.78L878.0 322.78L879.0 322.78L880.0 322.78L881.0 322.78L882.0 322.78L883.0 322.78L884.0 322.78L885.0 322.78L886.0 322.78L887.0 322.78L888.0 322.78L889.0 322.78L890.0 322.78L891.0 322.78L892.0 322.78L893.0 322.78L894.0 322.78L895.0 322.78L896.0 322.78L897.0 322.78L898.0 322.78L899.0 322.78L900.0 322.78L901.0 322.78L902.0 322.78L903.0 322.78L904.0 322.78L905.0 322.78L906.0 322.78L907.0 322.78L908.0 322.78L909.0 322.78L910.0 322.78L911.0 322.78L912.0 322.78L913.0 322.78L914.0 322.78L915.0 322.78L916.0 322.78L917.0 322.78L918.0 322.78L919.0 322.78L920.0 322.78L921.0 322.78L922.0 322.78L923.0 322.78L924.0 322.78L925.0 322.78L926.0 322.78L927.0 322.78L928.0 322.78L929.0 322.78L930.0 322.78L931.0 322.78L932.0 322.78L933.0 322.78L934.0 322.78L935.0 322.78L936.0 322.78L937.0 322.78L938.0 322.78L939.0 322.78L940.0 322.78L941.0 322.78L942.0 322.78L943.0 322.78L944.0 322.78L945.0 322.78L946.0 322.78L947.0 322.78L948.0 322.78L949.0 323.44L950.0 324.10L951.0 324.12L952.0 324.14L953.0 324.17L954.0 324.19L955.0 324.21L956.0 324.23L957.0 324.25L958.0 324.28L959.0 324.30L960.0 324.32L961.0 324.34L962.0 324.36L963.0 324.39L964.0 324.41L965.0 324.43L966.0 326.85L967.0 329.99L968.0 333.84L969.0 335.09L970.0 335.23L971.0 335.38L972.0 335.52L973.0 335.73L974.0 336.51L975.0 337.30L976.0 337.99L977.0 338.68L978.0 338.95L979.0 338.95L980.0 338.95L981.0 338.95L982.0 338.95L983.0 338.95L984.0 338.95L985.0 338.95L986.0 338.95L987.0 338.95L988.0 338.81L989.0 338.45L990.0 338.09L991.0 337.98L992.0 337.86L993.0 337.75L994.0 337.63L995.0 337.42L996.0 337.20L997.0 336.99L998.0 336.77L999.0 336.79L1000.0 336.81L1001.0 336.83L1002.0 336.85L1003.0 336.87L1004.0 336.89L1005.0 336.90L1005.0 383.5 Z" fill="#4444ee"/>
<path d="M807.5 342.25L808.5 342.25L809.5 342.25L810.5 342.25L811.5 342.25L812.5 342.25L813.5 342.25L814.5 342.25L815.5 342.25L816.5 342.25L817.5 342.25L818.5 341.10L819.5 339.94L820.5 335.98L821.5 332.02L822.5 328.72L823.5 325.42L824.5 324.26L825.5 323.11L826.5 323.07L827.5 323.03L828.5 322.99L829.5 322.94L830.5 322.90L831.5 322.86L832.5 322.82L833.5 322.78L834.5 322.78L835.5 322.78L836.5 322.78L837.5 322.78L838.5 322.78L839.5 322.78L840.5 322.78L841.5 322.78L842.5 322.78L843.5 322.78L844.5 322.78L845.5 322.78L846.5 322.78L847.5 322.78L848.5 322.78L849.5 322.78L850.5 322.78L851.5 322.78L852.5 322.78L853.5 322.78L854.5 322.78L855.5 322.78L856.5 322.78L857.5 322.78L858.5 322.78L859.5 322.78L860.5 322.78L861.5 322.78L862.5 322.78L863.5 322.78L864.5 322.78L865.5 322.78L866.5 322.78L867.5 322.78L868.5 322.78L869.5 322.78L870.5 322.78L871.5 322.78L872.5 322.78L873.5 322.78L874.5 322.78L875.5 322.78L876.5 322.78L877.5 322.78L878.5 322.78L879.5 322.78L880.5 322.78L881.5 322.78L882.5 322.78L883.5 322.78L884.5 322.78L885.5 322.78L886.5 322.78L887.5 322.78L888.5 322.78L889.5 322.78L890.5 322.78L891.5 322.78L892.5 322.78L893.5 322.78L894.5 322.78L895.5 322.78L896.5 322.78L897.5 322.78L898.5 322.78L899.5 322.78L900.5 322.78L901.5 322.78L902.5 322.78L903.5 322.78L904.5 322.78L905.5 322.78L906.5 322.78L907.5 322.78L908.5 322.78L909.5 322.78L910.5 322.78L911.5 322.78L912.5 322.78L913.5 322.78L914.5 322.78L915.5 322.78L916.5 322.78L917.5 322.78L918.5 322.78L919.5 322.78L920.5 322.78L921.5 322.78L922.5 322.78L923.5 322.78L924.5 322.78L925.5 322.78L926.5 322.78L927.5 322.78L928.5 322.78L929.5 322.78L930.5 322.78L931.5 322.78L932.5 322.78L933.5 322.78L934.5 322.78L935.5 322.78L936.5 322.78L937.5 322.78L938.5 322.78L939.5 322.78L940.5 322.78L941.5 322.78L942.5 322.78L943.5 322.78L944.5 322.78L945.5 322.78L946.5 322.78L947.5 322.78L948.5 322.78L949.5 323.44L950.5 324.10L951.5 324.12L952.5 324.14L953.5 324.17L954.5 324.19L955.5 324.21L956.5 324.23L957.5 324.25L958.5 324.28L959.5 324.30L960.5 324.32L961.5 324.34L962.5 324.36L963.5 324.39L964.5 324.41L965.5 324.43L966.5 326.85L967.5 329.99L968.5 333.84L969.5 335.09L970.5 335.23L971.5 335.38L972.5 335.52L973.5 335.73L974.5 336.51L975.5 337.30L976.5 337.99L977.5 338.68L978.5 338.95L979.5 338.95L980.5 338.95L981.5 338.95L982.5 338.95L983.5 338.95L984.5 338.95L985.5 338.95L986.5 338.95L987.5 338.95L988.5 338.81L989.5 338.45L990.5 338.09L991.5 337.98L992.5 337.86L993.5 337.75L994.5 337.63L995.5 337.42L996.5 337.20L997.5 336.99L998.5 336.77L999.5 336.79L1000.5 336.81L1001.5 336.83L1002.5 336.85L1003.5 336.87L1004.5 336.89L1005.5 336.90" stroke="#0000f2" stroke-width="2.6" fill="none"/>
<path d="M807.0 383.5L807.0 348.85L808.0 348.85L809.0 348.85L810.0 348.85L811.0 348.85L812.0 348.85L813.0 348.85L814.0 348.85L815.0 348.85L816.0 348.85L817.0 347.69L818.0 346.54L819.0 344.89L820.0 343.24L821.0 342.32L822.0 341.39L823.0 341.38L824.0 341.36L825.0 341.34L826.0 341.33L827.0 341.31L828.0 341.29L829.0 341.28L830.0 341.26L831.0 341.17L832.0 341.08L833.0 341.00L834.0 340.91L835.0 340.82L836.0 340.73L837.0 340.67L838.0 340.60L839.0 340.76L840.0 340.93L841.0 341.10L842.0 341.26L843.0 341.34L844.0 341.43L845.0 341.51L846.0 341.59L847.0 341.67L848.0 341.75L849.0 341.84L850.0 341.92L851.0 342.02L852.0 342.12L853.0 342.22L854.0 342.32L855.0 342.42L856.0 342.51L857.0 342.61L858.0 342.71L859.0 342.81L860.0 342.91L861.0 342.94L862.0 342.98L863.0 343.01L864.0 343.04L865.0 343.07L866.0 343.11L867.0 343.14L868.0 343.17L869.0 343.21L870.0 343.24L871.0 343.26L872.0 343.28L873.0 343.30L874.0 343.31L875.0 343.33L876.0 343.35L877.0 343.37L878.0 343.39L879.0 343.40L880.0 343.42L881.0 343.44L882.0 343.46L883.0 343.48L884.0 343.50L885.0 343.51L886.0 343.53L887.0 343.55L888.0 343.57L889.0 343.58L890.0 343.59L891.0 343.60L892.0 343.61L893.0 343.62L894.0 343.63L895.0 343.64L896.0 343.65L897.0 343.66L898.0 343.67L899.0 343.68L900.0 343.69L901.0 343.70L902.0 343.71L903.0 343.72L904.0 343.74L905.0 343.75L906.0 343.76L907.0 343.77L908.0 343.78L909.0 343.79L910.0 343.80L911.0 343.81L912.0 343.82L913.0 343.83L914.0 343.84L915.0 343.85L916.0 343.86L917.0 343.87L918.0 343.88L919.0 343.89L920.0 343.90L921.0 343.91L922.0 343.93L923.0 343.94L924.0 343.95L925.0 343.96L926.0 343.98L927.0 343.99L928.0 344.00L929.0 344.02L930.0 344.03L931.0 344.04L932.0 344.06L933.0 344.07L934.0 344.08L935.0 344.09L936.0 344.11L937.0 344.12L938.0 344.13L939.0 344.15L940.0 344.16L941.0 344.17L942.0 344.18L943.0 344.20L944.0 344.21L945.0 344.22L946.0 344.78L947.0 345.88L948.0 347.37L949.0 348.85L950.0 348.85L951.0 348.85L952.0 348.85L953.0 348.85L954.0 348.85L955.0 348.85L956.0 348.85L957.0 348.85L958.0 348.85L959.0 348.85L960.0 348.85L961.0 348.85L962.0 348.85L963.0 348.85L964.0 348.85L965.0 348.85L966.0 348.85L967.0 348.85L968.0 348.85L969.0 348.85L970.0 348.85L971.0 348.85L972.0 348.85L973.0 348.85L974.0 348.85L975.0 348.85L976.0 348.80L977.0 348.76L978.0 348.71L979.0 348.67L980.0 348.62L981.0 348.57L982.0 348.53L983.0 348.48L984.0 348.43L985.0 348.39L986.0 348.36L987.0 348.34L988.0 348.31L989.0 348.28L990.0 348.26L991.0 348.23L992.0 348.20L993.0 348.18L994.0 348.15L995.0 348.12L996.0 348.08L997.0 348.04L998.0 348.01L999.0 347.97L1000.0 347.93L1001.0 347.89L1002.0 347.85L1003.0 347.81L1004.0 347.77L1005.0 347.73L1005.0 383.5 Z" fill="#eeee44"/>
<path d="M807.5 348.85L808.5 348.85L809.5 348.85L810.5 348.85L811.5 348.85L812.5 348.85L813.5 348.85L814.5 348.85L815.5 348.85L816.5 348.85L817.5 347.69L818.5 346.54L819.5 344.89L820.5 343.24L821.5 342.32L822.5 341.39L823.5 341.38L824.5 341.36L825.5 341.34L826.5 341.33L827.5 341.31L828.5 341.29L829.5 341.28L830.5 341.26L831.5 341.17L832.5 341.08L833.5 341.00L834.5 340.91L835.5 340.82L836.5 340.73L837.5 340.67L838.5 340.60L839.5 340.76L840.5 340.93L841.5 341.10L842.5 341.26L843.5 341.34L844.5 341.43L845.5 341.51L846.5 341.59L847.5 341.67L848.5 341.75L849.5 341.84L850.5 341.92L851.5 342.02L852.5 342.12L853.5 342.22L854.5 342.32L855.5 342.42L856.5 342.51L857.5 342.61L858.5 342.71L859.5 342.81L860.5 342.91L861.5 342.94L862.5 342.98L863.5 343.01L864.5 343.04L865.5 343.07L866.5 343.11L867.5 343.14L868.5 343.17L869.5 343.21L870.5 343.24L871.5 343.26L872.5 343.28L873.5 343.30L874.5 343.31L875.5 343.33L876.5 343.35L877.5 343.37L878.5 343.39L879.5 343.40L880.5 343.42L881.5 343.44L882.5 343.46L883.5 343.48L884.5 343.50L885.5 343.51L886.5 343.53L887.5 343.55L888.5 343.57L889.5 343.58L890.5 343.59L891.5 343.60L892.5 343.61L893.5 343.62L894.5 343.63L895.5 343.64L896.5 343.65L897.5 343.66L898.5 343.67L899.5 343.68L900.5 343.69L901.5 343.70L902.5 343.71L903.5 343.72L904.5 343.74L905.5 343.75L906.5 343.76L907.5 343.77L908.5 343.78L909.5 343.79L910.5 343.80L911.5 343.81L912.5 343.82L913.5 343.83L914.5 343.84L915.5 343.85L916.5 343.86L917.5 343.87L918.5 343.88L919.5 343.89L920.5 343.90L921.5 343.91L922.5 343.93L923.5 343.94L924.5 343.95L925.5 343.96L926.5 343.98L927.5 343.99L928.5 344.00L929.5 344.02L930.5 344.03L931.5 344.04L932.5 344.06L933.5 344.07L934.5 344.08L935.5 344.09L936.5 344.11L937.5 344.12L938.5 344.13L939.5 344.15L940.5 344.16L941.5 344.17L942.5 344.18L943.5 344.20L944.5 344.21L945.5 344.22L946.5 344.78L947.5 345.88L948.5 347.37L949.5 348.85L950.5 348.85L951.5 348.85L952.5 348.85L953.5 348.85L954.5 348.85L955.5 348.85L956.5 348.85L957.5 348.85L958.5 348.85L959.5 348.85L960.5 348.85L961.5 348.85L962.5 348.85L963.5 348.85L964.5 348.85L965.5 348.85L966.5 348.85L967.5 348.85L968.5 348.85L969.5 348.85L970.5 348.85L971.5 348.85L972.5 348.85L973.5 348.85L974.5 348.85L975.5 348.85L976.5 348.80L977.5 348.76L978.5 348.71L979.5 348.67L980.5 348.62L981.5 348.57L982.5 348.53L983.5 348.48L984.5 348.43L985.5 348.39L986.5 348.36L987.5 348.34L988.5 348.31L989.5 348.28L990.5 348.26L991.5 348.23L992.5 348.20L993.5 348.18L994.5 348.15L995.5 348.12L996.5 348.08L997.5 348.04L998.5 348.01L999.5 347.97L1000.5 347.93L1001.5 347.89L1002.5 347.85L1003.5 347.81L1004.5 347.77L1005.5 347.73" stroke="#f0f000" stroke-width="1.8" fill="none"/>
<path d="M807 383.5 H1006" stroke="#ee44ee" stroke-opacity="0.55" stroke-width="1" fill="none"/>
<path d="M807.5 317V384M816.5 317V384M824.5 317V384M841.5 317V384M849.5 317V384M857.5 317V384M866.5 317V384M874.5 317V384M891.5 317V384M899.5 317V384M907.5 317V384M916.5 317V384M924.5 317V384M941.5 317V384M949.5 317V384M957.5 317V384M966.5 317V384M974.5 317V384M991.5 317V384M999.5 317V384" stroke="#808020" stroke-opacity="0.44" stroke-width="1" stroke-dasharray="1 1" fill="none" shape-rendering="crispEdges"/>
<path d="M832.5 317V384M882.5 317V384M932.5 317V384M982.5 317V384" stroke="#80c080" stroke-opacity="0.68" stroke-width="1" stroke-dasharray="1 1" fill="none" shape-rendering="crispEdges"/>
<path d="M805 324.5H1007M805 330.5H1007M805 337.5H1007M805 343.5H1007M805 357.5H1007M805 363.5H1007M805 370.5H1007M805 376.5H1007" stroke="#808020" stroke-opacity="0.44" stroke-width="1" stroke-dasharray="1 1" fill="none" shape-rendering="crispEdges"/>
<path d="M806 317.5H1007M806 350.5H1007M806 383.5H1007" stroke="#80c080" stroke-opacity="0.68" stroke-width="1" stroke-dasharray="1 1" fill="none" shape-rendering="crispEdges"/>
<path d="M802 383.5H1010M806.5 313V387" stroke="#101010" stroke-opacity="0.55" stroke-width="1" fill="none" shape-rendering="crispEdges"/>
<path d="M807.5 315V317M807.5 384V386M816.5 315V317M816.5 384V386M824.5 315V317M824.5 384V386M841.5 315V317M841.5 384V386M849.5 315V317M849.5 384V386M857.5 315V317M857.5 384V386M866.5 315V317M866.5 384V386M874.5 315V317M874.5 384V386M891.5 315V317M891.5 384V386M899.5 315V317M899.5 384V386M907.5 315V317M907.5 384V386M916.5 315V317M916.5 384V386M924.5 315V317M924.5 384V386M941.5 315V317M941.5 384V386M949.5 315V317M949.5 384V386M957.5 315V317M957.5 384V386M966.5 315V317M966.5 384V386M974.5 315V317M974.5 384V386M991.5 315V317M991.5 384V386M999.5 315V317M999.5 384V386" stroke="#808020" stroke-opacity="0.4" stroke-width="1" fill="none" shape-rendering="crispEdges"/>
<path d="M832.5 315V317M832.5 384V386M882.5 315V317M882.5 384V386M932.5 315V317M932.5 384V386M982.5 315V317M982.5 384V386" stroke="#80c080" stroke-opacity="0.66" stroke-width="1" fill="none" shape-rendering="crispEdges"/>
<path d="M804 324.5H806M1007 324.5H1009M804 330.5H806M1007 330.5H1009M804 337.5H806M1007 337.5H1009M804 343.5H806M1007 343.5H1009M804 357.5H806M1007 357.5H1009M804 363.5H806M1007 363.5H1009M804 370.5H806M1007 370.5H1009M804 376.5H806M1007 376.5H1009" stroke="#808020" stroke-opacity="0.4" stroke-width="1" fill="none" shape-rendering="crispEdges"/>
<path d="M804 317.5H806M1007 317.5H1009M804 350.5H806M1007 350.5H1009M804 383.5H806M1007 383.5H1009" stroke="#80c080" stroke-opacity="0.66" stroke-width="1" fill="none" shape-rendering="crispEdges"/>
<path d="M803.2 314.6 L806.3 310.2 L809.4 314.6 Z" fill="#fff"/>
<path d="M1008.4 380.2 L1012.8 383.2 L1008.4 386.2 Z" fill="#fff"/>
<rect x="754.5" y="404.5" width="7" height="7" fill="#4444ee" stroke="#8c8c8c" stroke-width="1"/>
<rect x="754.5" y="416.5" width="7" height="7" fill="#eeee44" stroke="#8c8c8c" stroke-width="1"/>
<rect x="754.5" y="428.5" width="7" height="7" fill="#ee44ee" stroke="#8c8c8c" stroke-width="1"/>
<rect x="181" y="476" width="860" height="300" fill="#888888" />
<rect x="187" y="482" width="848" height="19" fill="#2c2c2c" />
<rect x="188" y="483" width="847" height="18" fill="#333333" />
<text xml:space="preserve" x="197" y="497" font-family='"Liberation Sans", sans-serif' font-size="16" font-weight="bold" fill="#888800" text-anchor="start" textLength="211" lengthAdjust="spacingAndGlyphs" >Kernel usage per processor</text>
<rect x="187" y="507" width="421" height="299" fill="#2c2c2c" />
<rect x="188" y="508" width="420" height="298" fill="#474747" />
<rect x="190" y="510" width="416" height="294" fill="#101010" />
<rect x="253" y="533" width="325" height="151" fill="#000" />
<path d="M253.5 683.5L253.5 671.74L254.5 666.74L255.5 666.84L256.5 667.64L257.5 658.35L258.5 652.12L259.5 651.27L260.5 655.33L261.5 652.29L262.5 649.60L263.5 654.04L264.5 657.35L265.5 656.02L266.5 659.92L267.5 663.54L268.5 671.29L269.5 670.61L270.5 660.97L271.5 659.15L272.5 660.98L273.5 670.89L274.5 671.88L275.5 673.49L276.5 672.95L277.5 672.64L278.5 673.38L279.5 671.82L280.5 672.94L281.5 673.37L282.5 672.12L283.5 673.45L284.5 671.95L285.5 672.87L286.5 672.71L287.5 673.12L288.5 672.86L289.5 673.45L290.5 673.75L291.5 672.19L292.5 673.41L293.5 672.39L294.5 673.50L295.5 672.07L296.5 672.22L297.5 672.51L298.5 672.51L299.5 672.88L300.5 672.61L301.5 673.78L302.5 673.13L303.5 672.48L304.5 674.17L305.5 674.23L306.5 675.23L307.5 677.17L308.5 676.06L309.5 674.59L310.5 673.92L311.5 672.76L312.5 673.92L313.5 674.60L314.5 674.47L315.5 673.29L316.5 672.76L317.5 673.71L318.5 673.72L319.5 673.60L320.5 673.23L321.5 674.23L322.5 673.49L323.5 673.59L324.5 673.47L325.5 674.31L326.5 674.33L327.5 673.99L328.5 672.89L329.5 673.99L330.5 673.52L331.5 674.07L332.5 674.45L333.5 674.53L334.5 673.10L335.5 673.17L336.5 673.94L337.5 673.35L338.5 673.37L339.5 672.94L340.5 672.83L341.5 673.88L342.5 672.77L343.5 672.82L344.5 673.53L345.5 672.97L346.5 673.72L347.5 673.94L348.5 674.18L349.5 672.99L350.5 674.34L351.5 674.52L352.5 673.12L353.5 673.18L354.5 673.73L355.5 673.06L356.5 674.55L357.5 674.16L358.5 674.10L359.5 673.85L360.5 674.33L361.5 674.52L362.5 674.01L363.5 672.94L364.5 672.78L365.5 673.23L366.5 673.74L367.5 674.17L368.5 672.83L369.5 673.65L370.5 673.27L371.5 674.60L372.5 674.25L373.5 673.06L374.5 673.14L375.5 672.98L376.5 673.51L377.5 673.84L378.5 673.55L379.5 673.04L380.5 674.06L381.5 673.63L382.5 674.13L383.5 673.19L384.5 674.63L385.5 673.35L386.5 672.84L387.5 674.61L388.5 673.52L389.5 673.43L390.5 673.03L391.5 673.54L392.5 674.16L393.5 673.88L394.5 672.83L395.5 672.93L396.5 674.40L397.5 674.47L398.5 674.47L399.5 674.60L400.5 673.80L401.5 674.38L402.5 673.00L403.5 673.40L404.5 674.41L405.5 673.63L406.5 674.03L407.5 673.71L408.5 674.23L409.5 674.33L410.5 674.30L411.5 673.93L412.5 673.30L413.5 673.60L414.5 674.56L415.5 673.30L416.5 672.99L417.5 673.18L418.5 673.15L419.5 674.64L420.5 673.77L421.5 674.53L422.5 673.20L423.5 674.32L424.5 673.30L425.5 674.17L426.5 673.33L427.5 674.05L428.5 674.57L429.5 673.91L430.5 674.06L431.5 672.94L432.5 674.09L433.5 673.69L434.5 673.61L435.5 672.85L436.5 674.46L437.5 673.51L438.5 673.68L439.5 673.25L440.5 672.81L441.5 674.06L442.5 673.32L443.5 673.65L444.5 673.58L445.5 674.53L446.5 673.10L447.5 672.79L448.5 673.98L449.5 674.05L450.5 672.76L451.5 674.45L452.5 674.51L453.5 674.51L454.5 673.10L455.5 673.21L456.5 673.80L457.5 673.47L458.5 674.61L459.5 673.43L460.5 673.81L461.5 673.67L462.5 673.91L463.5 673.89L464.5 674.22L465.5 674.56L466.5 673.83L467.5 674.18L468.5 673.31L469.5 673.10L470.5 673.27L471.5 673.78L472.5 674.20L473.5 673.92L474.5 673.73L475.5 673.45L476.5 672.82L477.5 674.49L478.5 673.74L479.5 673.72L480.5 673.29L481.5 672.96L482.5 673.17L483.5 673.46L484.5 673.21L485.5 673.38L486.5 673.02L487.5 673.32L488.5 673.35L489.5 674.18L490.5 672.91L491.5 673.92L492.5 673.48L493.5 673.08L494.5 672.82L495.5 672.77L496.5 674.64L497.5 674.06L498.5 674.06L499.5 673.91L500.5 674.37L501.5 673.60L502.5 674.50L503.5 674.08L504.5 672.86L505.5 673.24L506.5 673.77L507.5 674.44L508.5 672.83L509.5 673.31L510.5 674.26L511.5 674.01L512.5 673.43L513.5 673.35L514.5 674.15L515.5 672.84L516.5 674.04L517.5 674.17L518.5 673.04L519.5 674.36L520.5 673.36L521.5 674.27L522.5 673.51L523.5 674.12L524.5 673.93L525.5 673.26L526.5 668.16L527.5 668.22L528.5 668.38L529.5 660.29L530.5 658.86L531.5 658.46L532.5 661.53L533.5 663.69L534.5 657.28L535.5 657.68L536.5 656.20L537.5 658.27L538.5 665.71L539.5 668.01L540.5 667.10L541.5 669.48L542.5 666.90L543.5 666.72L544.5 667.84L545.5 666.20L546.5 664.02L547.5 664.87L548.5 664.96L549.5 664.69L550.5 664.02L551.5 665.01L552.5 666.13L553.5 667.21L554.5 668.49L555.5 665.54L556.5 663.96L557.5 662.19L558.5 657.64L559.5 656.31L560.5 656.93L561.5 657.19L562.5 657.78L563.5 660.29L564.5 665.37L565.5 665.02L566.5 663.94L567.5 665.90L568.5 661.74L569.5 662.03L570.5 662.27L571.5 665.69L572.5 665.94L573.5 663.50L574.5 665.15L575.5 664.37L576.5 662.65L577.5 662.53L577.5 683.5 Z" fill="#4444ee"/>
<path d="M253.5 683.5L253.5 676.98L254.5 676.21L255.5 675.76L256.5 675.10L257.5 672.76L258.5 671.53L259.5 671.42L260.5 672.98L261.5 671.87L262.5 672.00L263.5 672.86L264.5 673.67L265.5 673.30L266.5 674.80L267.5 676.41L268.5 676.37L269.5 677.66L270.5 675.79L271.5 675.62L272.5 676.68L273.5 677.84L274.5 678.96L275.5 678.93L276.5 678.98L277.5 678.91L278.5 678.95L279.5 678.91L280.5 678.99L281.5 678.96L282.5 678.98L283.5 679.05L284.5 678.91L285.5 679.04L286.5 678.94L287.5 678.91L288.5 678.97L289.5 679.07L290.5 678.93L291.5 678.97L292.5 679.06L293.5 679.09L294.5 678.99L295.5 679.09L296.5 678.91L297.5 679.00L298.5 679.00L299.5 679.02L300.5 678.97L301.5 678.92L302.5 679.04L303.5 679.03L304.5 679.28L305.5 679.94L306.5 680.18L307.5 680.56L308.5 680.65L309.5 679.67L310.5 679.09L311.5 679.18L312.5 679.00L313.5 679.13L314.5 679.11L315.5 679.12L316.5 679.01L317.5 679.01L318.5 679.10L319.5 679.12L320.5 679.18L321.5 679.02L322.5 679.17L323.5 679.09L324.5 679.13L325.5 679.13L326.5 679.13L327.5 679.16L328.5 679.19L329.5 679.09L330.5 679.04L331.5 679.07L332.5 679.16L333.5 679.06L334.5 679.19L335.5 679.12L336.5 679.03L337.5 679.02L338.5 679.11L339.5 679.03L340.5 679.10L341.5 679.10L342.5 679.08L343.5 679.00L344.5 679.05L345.5 679.11L346.5 679.05L347.5 679.07L348.5 679.13L349.5 679.04L350.5 679.04L351.5 679.08L352.5 679.01L353.5 679.20L354.5 679.10L355.5 679.07L356.5 679.13L357.5 679.17L358.5 679.06L359.5 679.11L360.5 679.15L361.5 679.19L362.5 679.01L363.5 679.13L364.5 679.18L365.5 679.16L366.5 679.15L367.5 679.03L368.5 679.16L369.5 679.14L370.5 679.18L371.5 679.11L372.5 679.16L373.5 679.13L374.5 679.05L375.5 679.01L376.5 679.03L377.5 679.19L378.5 679.12L379.5 679.03L380.5 679.19L381.5 679.16L382.5 679.10L383.5 679.12L384.5 679.05L385.5 679.06L386.5 679.11L387.5 679.15L388.5 679.15L389.5 679.15L390.5 679.19L391.5 679.07L392.5 679.17L393.5 679.02L394.5 679.07L395.5 679.19L396.5 679.10L397.5 679.08L398.5 679.19L399.5 679.10L400.5 679.19L401.5 679.05L402.5 679.20L403.5 679.07L404.5 679.00L405.5 679.03L406.5 679.15L407.5 679.09L408.5 679.17L409.5 679.13L410.5 679.03L411.5 679.04L412.5 679.20L413.5 679.12L414.5 679.07L415.5 679.16L416.5 679.04L417.5 679.02L418.5 679.09L419.5 679.13L420.5 679.03L421.5 679.10L422.5 679.16L423.5 679.14L424.5 679.17L425.5 679.03L426.5 679.10L427.5 679.06L428.5 679.04L429.5 679.01L430.5 679.16L431.5 679.12L432.5 679.03L433.5 679.05L434.5 679.12L435.5 679.07L436.5 679.16L437.5 679.17L438.5 679.19L439.5 679.12L440.5 679.15L441.5 679.10L442.5 679.01L443.5 679.17L444.5 679.09L445.5 679.03L446.5 679.08L447.5 679.09L448.5 679.05L449.5 679.20L450.5 679.01L451.5 679.06L452.5 679.04L453.5 679.03L454.5 679.18L455.5 679.19L456.5 679.16L457.5 679.10L458.5 679.01L459.5 679.02L460.5 679.12L461.5 679.08L462.5 679.05L463.5 679.13L464.5 679.01L465.5 679.01L466.5 679.05L467.5 679.02L468.5 679.04L469.5 679.07L470.5 679.14L471.5 679.14L472.5 679.15L473.5 679.19L474.5 679.01L475.5 679.14L476.5 679.20L477.5 679.14L478.5 679.18L479.5 679.11L480.5 679.13L481.5 678.52L482.5 677.82L483.5 677.84L484.5 678.49L485.5 679.04L486.5 679.14L487.5 679.09L488.5 679.02L489.5 679.01L490.5 679.13L491.5 679.19L492.5 679.01L493.5 679.10L494.5 679.16L495.5 679.17L496.5 679.15L497.5 679.14L498.5 679.17L499.5 679.19L500.5 679.00L501.5 679.04L502.5 679.18L503.5 679.10L504.5 679.04L505.5 679.10L506.5 679.19L507.5 679.13L508.5 679.12L509.5 679.02L510.5 679.08L511.5 679.11L512.5 679.07L513.5 678.23L514.5 677.14L515.5 677.12L516.5 677.15L517.5 679.13L518.5 679.14L519.5 679.20L520.5 679.18L521.5 679.17L522.5 679.11L523.5 679.04L524.5 679.16L525.5 678.91L526.5 677.67L527.5 677.07L528.5 676.20L529.5 674.02L530.5 674.08L531.5 675.39L532.5 675.32L533.5 674.56L534.5 674.01L535.5 674.13L536.5 675.12L537.5 676.09L538.5 677.67L539.5 677.62L540.5 677.52L541.5 677.59L542.5 677.54L543.5 677.15L544.5 676.53L545.5 675.54L546.5 675.65L547.5 675.59L548.5 675.56L549.5 676.34L550.5 677.08L551.5 677.15L552.5 677.09L553.5 677.13L554.5 676.79L555.5 676.38L556.5 676.00L557.5 675.83L558.5 675.65L559.5 675.74L560.5 675.92L561.5 675.93L562.5 675.94L563.5 675.58L564.5 675.64L565.5 675.71L566.5 676.17L567.5 676.23L568.5 676.39L569.5 676.75L570.5 676.87L571.5 676.93L572.5 677.01L573.5 676.96L574.5 676.95L575.5 676.80L576.5 676.60L577.5 676.67L577.5 683.5 Z" fill="#44eeee"/>
<path d="M253.5 683.5L253.5 683.50L254.5 683.50L255.5 683.50L256.5 683.50L257.5 683.50L258.5 683.50L259.5 683.50L260.5 683.50L261.5 683.50L262.5 683.50L263.5 683.50L264.5 683.50L265.5 683.50L266.5 683.50L267.5 683.50L268.5 683.50L269.5 683.50L270.5 683.50L271.5 683.50L272.5 683.50L273.5 683.50L274.5 683.50L275.5 683.50L276.5 683.50L277.5 683.50L278.5 683.50L279.5 683.50L280.5 683.50L281.5 683.50L282.5 683.50L283.5 683.50L284.5 683.50L285.5 683.50L286.5 683.50L287.5 683.50L288.5 683.50L289.5 683.50L290.5 683.50L291.5 683.50L292.5 683.50L293.5 683.50L294.5 683.50L295.5 683.50L296.5 683.50L297.5 683.50L298.5 683.50L299.5 683.50L300.5 683.50L301.5 683.50L302.5 683.50L303.5 683.50L304.5 683.50L305.5 683.50L306.5 683.50L307.5 683.50L308.5 683.50L309.5 683.50L310.5 683.50L311.5 683.50L312.5 683.50L313.5 683.50L314.5 683.50L315.5 683.50L316.5 683.50L317.5 683.50L318.5 683.50L319.5 683.50L320.5 683.50L321.5 683.50L322.5 683.50L323.5 683.50L324.5 683.50L325.5 683.50L326.5 683.50L327.5 683.50L328.5 683.50L329.5 683.50L330.5 683.50L331.5 683.50L332.5 683.50L333.5 683.50L334.5 683.50L335.5 683.50L336.5 683.50L337.5 683.50L338.5 683.50L339.5 683.50L340.5 683.50L341.5 683.50L342.5 683.50L343.5 683.50L344.5 683.50L345.5 683.50L346.5 683.50L347.5 683.50L348.5 683.50L349.5 683.50L350.5 683.50L351.5 683.50L352.5 683.50L353.5 683.50L354.5 683.50L355.5 683.50L356.5 683.50L357.5 683.50L358.5 683.50L359.5 683.50L360.5 683.50L361.5 683.50L362.5 683.50L363.5 683.50L364.5 683.50L365.5 683.50L366.5 683.50L367.5 683.50L368.5 683.50L369.5 683.50L370.5 683.50L371.5 683.50L372.5 683.50L373.5 683.50L374.5 683.50L375.5 683.50L376.5 683.50L377.5 683.50L378.5 683.50L379.5 683.50L380.5 683.50L381.5 683.50L382.5 683.50L383.5 683.50L384.5 683.50L385.5 683.50L386.5 683.50L387.5 683.50L388.5 683.50L389.5 683.50L390.5 683.50L391.5 683.50L392.5 683.50L393.5 683.50L394.5 683.50L395.5 683.50L396.5 683.50L397.5 683.50L398.5 683.50L399.5 683.50L400.5 683.50L401.5 683.50L402.5 683.50L403.5 683.50L404.5 683.50L405.5 683.50L406.5 683.50L407.5 683.50L408.5 683.50L409.5 683.50L410.5 683.50L411.5 683.50L412.5 683.50L413.5 683.50L414.5 683.50L415.5 683.50L416.5 683.50L417.5 683.50L418.5 683.50L419.5 683.50L420.5 683.50L421.5 683.50L422.5 683.50L423.5 683.50L424.5 683.50L425.5 683.50L426.5 683.50L427.5 683.50L428.5 683.50L429.5 683.50L430.5 683.50L431.5 683.50L432.5 683.50L433.5 683.50L434.5 683.50L435.5 683.50L436.5 683.50L437.5 683.50L438.5 683.50L439.5 683.50L440.5 683.50L441.5 683.50L442.5 683.50L443.5 683.50L444.5 683.50L445.5 683.50L446.5 683.50L447.5 683.50L448.5 683.50L449.5 683.50L450.5 683.50L451.5 683.50L452.5 683.50L453.5 683.50L454.5 683.50L455.5 683.50L456.5 683.50L457.5 683.50L458.5 683.50L459.5 683.50L460.5 683.50L461.5 683.50L462.5 683.50L463.5 683.50L464.5 683.50L465.5 683.50L466.5 683.50L467.5 683.50L468.5 683.50L469.5 683.50L470.5 683.50L471.5 683.50L472.5 683.50L473.5 683.50L474.5 683.50L475.5 683.50L476.5 683.50L477.5 683.50L478.5 683.50L479.5 683.50L480.5 683.50L481.5 682.62L482.5 681.74L483.5 681.74L484.5 682.62L485.5 683.50L486.5 683.50L487.5 683.50L488.5 683.50L489.5 683.50L490.5 683.50L491.5 683.50L492.5 683.50L493.5 683.50L494.5 683.50L495.5 683.50L496.5 683.50L497.5 683.50L498.5 683.50L499.5 683.50L500.5 683.50L501.5 683.50L502.5 683.50L503.5 683.50L504.5 683.50L505.5 683.50L506.5 683.50L507.5 683.50L508.5 683.50L509.5 683.50L510.5 683.50L511.5 683.50L512.5 683.50L513.5 682.86L514.5 682.22L515.5 682.22L516.5 682.22L517.5 683.50L518.5 683.50L519.5 683.50L520.5 683.50L521.5 683.50L522.5 683.50L523.5 683.50L524.5 683.50L525.5 683.50L526.5 683.50L527.5 683.50L528.5 683.50L529.5 683.50L530.5 683.50L531.5 683.50L532.5 683.50L533.5 683.50L534.5 683.50L535.5 683.50L536.5 683.50L537.5 683.50L538.5 683.50L539.5 683.50L540.5 683.50L541.5 683.50L542.5 683.50L543.5 683.50L544.5 683.50L545.5 683.50L546.5 683.50L547.5 683.50L548.5 683.50L549.5 683.50L550.5 683.50L551.5 683.50L552.5 683.50L553.5 683.50L554.5 683.50L555.5 683.50L556.5 683.50L557.5 683.50L558.5 683.50L559.5 683.50L560.5 683.50L561.5 683.50L562.5 683.50L563.5 683.50L564.5 683.50L565.5 683.50L566.5 683.50L567.5 683.50L568.5 683.50L569.5 683.50L570.5 683.50L571.5 683.50L572.5 683.50L573.5 683.50L574.5 683.50L575.5 683.50L576.5 683.50L577.5 683.50L577.5 683.5 Z" fill="#ee44ee"/>
<path d="M253.5 683.5L253.5 677.09L254.5 677.05L255.5 677.04L256.5 677.42L257.5 677.13L258.5 677.19L259.5 677.10L260.5 677.27L261.5 677.21L262.5 677.06L263.5 677.14L264.5 676.99L265.5 677.18L266.5 677.12L267.5 676.77L268.5 676.89L269.5 676.81L270.5 676.67L271.5 676.83L272.5 676.95L273.5 676.56L274.5 676.66L275.5 676.62L276.5 676.64L277.5 676.46L278.5 676.77L279.5 676.57L280.5 676.77L281.5 676.66L282.5 676.62L283.5 676.79L284.5 676.91L285.5 676.71L286.5 676.59L287.5 676.65L288.5 676.73L289.5 676.63L290.5 676.86L291.5 676.86L292.5 676.79L293.5 676.54L294.5 676.85L295.5 676.89L296.5 676.90L297.5 676.93L298.5 676.81L299.5 676.66L300.5 676.54L301.5 676.78L302.5 676.77L303.5 676.81L304.5 677.60L305.5 678.16L306.5 678.68L307.5 679.22L308.5 678.82L309.5 677.12L310.5 675.80L311.5 675.60L312.5 675.76L313.5 675.48L314.5 675.29L315.5 675.45L316.5 675.28L317.5 675.67L318.5 675.26L319.5 675.72L320.5 675.54L321.5 675.74L322.5 675.35L323.5 675.41L324.5 675.26L325.5 675.35L326.5 675.28L327.5 675.48L328.5 675.26L329.5 675.38L330.5 675.58L331.5 675.26L332.5 675.56L333.5 675.65L334.5 675.71L335.5 675.52L336.5 675.65L337.5 675.28L338.5 675.27L339.5 675.64L340.5 675.70L341.5 675.49L342.5 675.67L343.5 675.48L344.5 675.34L345.5 675.62L346.5 675.54L347.5 675.30L348.5 675.53L349.5 675.58L350.5 675.30L351.5 675.34L352.5 675.30L353.5 675.41L354.5 675.54L355.5 675.40L356.5 675.34L357.5 675.43L358.5 675.63L359.5 675.60L360.5 675.55L361.5 675.36L362.5 675.47L363.5 675.48L364.5 675.34L365.5 675.70L366.5 675.43L367.5 675.58L368.5 675.47L369.5 675.33L370.5 675.63L371.5 675.27L372.5 675.71L373.5 675.47L374.5 675.48L375.5 675.63L376.5 675.47L377.5 675.51L378.5 675.53L379.5 675.39L380.5 675.75L381.5 675.56L382.5 675.36L383.5 675.68L384.5 675.32L385.5 675.65L386.5 675.41L387.5 675.66L388.5 675.53L389.5 675.54L390.5 675.71L391.5 675.40L392.5 675.51L393.5 675.41L394.5 675.48L395.5 675.47L396.5 675.49L397.5 675.60L398.5 675.30L399.5 675.71L400.5 675.31L401.5 675.32L402.5 675.50L403.5 675.36L404.5 675.41L405.5 675.45L406.5 675.60L407.5 675.59L408.5 675.58L409.5 675.60L410.5 675.27L411.5 675.58L412.5 675.56L413.5 675.54L414.5 675.34L415.5 675.51L416.5 675.47L417.5 675.62L418.5 675.61L419.5 675.71L420.5 675.64L421.5 675.62L422.5 675.32L423.5 675.50L424.5 675.69L425.5 675.52L426.5 675.69L427.5 675.47L428.5 675.53L429.5 675.32L430.5 675.62L431.5 675.32L432.5 675.63L433.5 675.26L434.5 675.43L435.5 675.73L436.5 675.35L437.5 675.61L438.5 675.57L439.5 675.68L440.5 675.33L441.5 675.70L442.5 675.38L443.5 675.55L444.5 675.41L445.5 675.60L446.5 675.71L447.5 675.29L448.5 675.42L449.5 675.67L450.5 675.26L451.5 675.29L452.5 675.66L453.5 675.74L454.5 675.44L455.5 675.68L456.5 675.38L457.5 675.52L458.5 675.40L459.5 675.47L460.5 675.36L461.5 675.34L462.5 675.45L463.5 675.45L464.5 675.59L465.5 675.68L466.5 675.70L467.5 675.32L468.5 675.65L469.5 675.54L470.5 675.59L471.5 675.44L472.5 675.48L473.5 675.32L474.5 675.53L475.5 675.57L476.5 675.42L477.5 675.38L478.5 675.29L479.5 675.59L480.5 675.31L481.5 675.26L482.5 675.26L483.5 675.69L484.5 675.56L485.5 675.36L486.5 675.33L487.5 675.73L488.5 675.55L489.5 675.39L490.5 675.37L491.5 675.48L492.5 675.64L493.5 675.55L494.5 675.72L495.5 675.59L496.5 675.54L497.5 675.34L498.5 675.46L499.5 675.54L500.5 675.63L501.5 675.59L502.5 675.41L503.5 675.53L504.5 675.66L505.5 675.34L506.5 675.46L507.5 675.27L508.5 675.48L509.5 675.44L510.5 675.54L511.5 675.45L512.5 675.29L513.5 675.26L514.5 675.42L515.5 675.53L516.5 675.72L517.5 675.33L518.5 675.55L519.5 675.56L520.5 675.72L521.5 675.73L522.5 675.55L523.5 675.26L524.5 675.38L525.5 675.40L526.5 675.72L527.5 676.21L528.5 676.26L529.5 676.04L530.5 676.31L531.5 676.04L532.5 676.07L533.5 676.05L534.5 676.26L535.5 676.28L536.5 676.08L537.5 676.24L538.5 675.99L539.5 676.15L540.5 675.99L541.5 675.92L542.5 675.99L543.5 676.02L544.5 676.18L545.5 676.10L546.5 675.79L547.5 676.14L548.5 676.12L549.5 676.02L550.5 675.99L551.5 675.86L552.5 676.10L553.5 675.76L554.5 676.23L555.5 675.84L556.5 675.95L557.5 675.78L558.5 676.15L559.5 675.88L560.5 675.74L561.5 675.88L562.5 676.15L563.5 675.75L564.5 675.72L565.5 676.14L566.5 675.78L567.5 676.15L568.5 676.15L569.5 675.78L570.5 675.82L571.5 675.70L572.5 675.85L573.5 675.91L574.5 676.03L575.5 675.87L576.5 675.66L577.5 675.83L577.5 683.5 Z" fill="#e29136"/>
<path d="M253.5 671.74L254.5 666.74L255.5 666.84L256.5 667.64L257.5 658.35L258.5 652.12L259.5 651.27L260.5 655.33L261.5 652.29L262.5 649.60L263.5 654.04L264.5 657.35L265.5 656.02L266.5 659.92L267.5 663.54L268.5 671.29L269.5 670.61L270.5 660.97L271.5 659.15L272.5 660.98L273.5 670.89L274.5 671.88L275.5 673.49L276.5 672.95L277.5 672.64L278.5 673.38L279.5 671.82L280.5 672.94L281.5 673.37L282.5 672.12L283.5 673.45L284.5 671.95L285.5 672.87L286.5 672.71L287.5 673.12L288.5 672.86L289.5 673.45L290.5 673.75L291.5 672.19L292.5 673.41L293.5 672.39L294.5 673.50L295.5 672.07L296.5 672.22L297.5 672.51L298.5 672.51L299.5 672.88L300.5 672.61L301.5 673.78L302.5 673.13L303.5 672.48L304.5 674.17L305.5 674.23L306.5 675.23L307.5 677.17L308.5 676.06L309.5 674.59L310.5 673.92L311.5 672.76L312.5 673.92L313.5 674.60L314.5 674.47L315.5 673.29L316.5 672.76L317.5 673.71L318.5 673.72L319.5 673.60L320.5 673.23L321.5 674.23L322.5 673.49L323.5 673.59L324.5 673.47L325.5 674.31L326.5 674.33L327.5 673.99L328.5 672.89L329.5 673.99L330.5 673.52L331.5 674.07L332.5 674.45L333.5 674.53L334.5 673.10L335.5 673.17L336.5 673.94L337.5 673.35L338.5 673.37L339.5 672.94L340.5 672.83L341.5 673.88L342.5 672.77L343.5 672.82L344.5 673.53L345.5 672.97L346.5 673.72L347.5 673.94L348.5 674.18L349.5 672.99L350.5 674.34L351.5 674.52L352.5 673.12L353.5 673.18L354.5 673.73L355.5 673.06L356.5 674.55L357.5 674.16L358.5 674.10L359.5 673.85L360.5 674.33L361.5 674.52L362.5 674.01L363.5 672.94L364.5 672.78L365.5 673.23L366.5 673.74L367.5 674.17L368.5 672.83L369.5 673.65L370.5 673.27L371.5 674.60L372.5 674.25L373.5 673.06L374.5 673.14L375.5 672.98L376.5 673.51L377.5 673.84L378.5 673.55L379.5 673.04L380.5 674.06L381.5 673.63L382.5 674.13L383.5 673.19L384.5 674.63L385.5 673.35L386.5 672.84L387.5 674.61L388.5 673.52L389.5 673.43L390.5 673.03L391.5 673.54L392.5 674.16L393.5 673.88L394.5 672.83L395.5 672.93L396.5 674.40L397.5 674.47L398.5 674.47L399.5 674.60L400.5 673.80L401.5 674.38L402.5 673.00L403.5 673.40L404.5 674.41L405.5 673.63L406.5 674.03L407.5 673.71L408.5 674.23L409.5 674.33L410.5 674.30L411.5 673.93L412.5 673.30L413.5 673.60L414.5 674.56L415.5 673.30L416.5 672.99L417.5 673.18L418.5 673.15L419.5 674.64L420.5 673.77L421.5 674.53L422.5 673.20L423.5 674.32L424.5 673.30L425.5 674.17L426.5 673.33L427.5 674.05L428.5 674.57L429.5 673.91L430.5 674.06L431.5 672.94L432.5 674.09L433.5 673.69L434.5 673.61L435.5 672.85L436.5 674.46L437.5 673.51L438.5 673.68L439.5 673.25L440.5 672.81L441.5 674.06L442.5 673.32L443.5 673.65L444.5 673.58L445.5 674.53L446.5 673.10L447.5 672.79L448.5 673.98L449.5 674.05L450.5 672.76L451.5 674.45L452.5 674.51L453.5 674.51L454.5 673.10L455.5 673.21L456.5 673.80L457.5 673.47L458.5 674.61L459.5 673.43L460.5 673.81L461.5 673.67L462.5 673.91L463.5 673.89L464.5 674.22L465.5 674.56L466.5 673.83L467.5 674.18L468.5 673.31L469.5 673.10L470.5 673.27L471.5 673.78L472.5 674.20L473.5 673.92L474.5 673.73L475.5 673.45L476.5 672.82L477.5 674.49L478.5 673.74L479.5 673.72L480.5 673.29L481.5 672.96L482.5 673.17L483.5 673.46L484.5 673.21L485.5 673.38L486.5 673.02L487.5 673.32L488.5 673.35L489.5 674.18L490.5 672.91L491.5 673.92L492.5 673.48L493.5 673.08L494.5 672.82L495.5 672.77L496.5 674.64L497.5 674.06L498.5 674.06L499.5 673.91L500.5 674.37L501.5 673.60L502.5 674.50L503.5 674.08L504.5 672.86L505.5 673.24L506.5 673.77L507.5 674.44L508.5 672.83L509.5 673.31L510.5 674.26L511.5 674.01L512.5 673.43L513.5 673.35L514.5 674.15L515.5 672.84L516.5 674.04L517.5 674.17L518.5 673.04L519.5 674.36L520.5 673.36L521.5 674.27L522.5 673.51L523.5 674.12L524.5 673.93L525.5 673.26L526.5 668.16L527.5 668.22L528.5 668.38L529.5 660.29L530.5 658.86L531.5 658.46L532.5 661.53L533.5 663.69L534.5 657.28L535.5 657.68L536.5 656.20L537.5 658.27L538.5 665.71L539.5 668.01L540.5 667.10L541.5 669.48L542.5 666.90L543.5 666.72L544.5 667.84L545.5 666.20L546.5 664.02L547.5 664.87L548.5 664.96L549.5 664.69L550.5 664.02L551.5 665.01L552.5 666.13L553.5 667.21L554.5 668.49L555.5 665.54L556.5 663.96L557.5 662.19L558.5 657.64L559.5 656.31L560.5 656.93L561.5 657.19L562.5 657.78L563.5 660.29L564.5 665.37L565.5 665.02L566.5 663.94L567.5 665.90L568.5 661.74L569.5 662.03L570.5 662.27L571.5 665.69L572.5 665.94L573.5 663.50L574.5 665.15L575.5 664.37L576.5 662.65L577.5 662.53" stroke="#0000ee" stroke-width="1.1" fill="none"/>
<path d="M253.5 677.09L254.5 677.05L255.5 677.04L256.5 677.42L257.5 677.13L258.5 677.19L259.5 677.10L260.5 677.27L261.5 677.21L262.5 677.06L263.5 677.14L264.5 676.99L265.5 677.18L266.5 677.12L267.5 676.77L268.5 676.89L269.5 676.81L270.5 676.67L271.5 676.83L272.5 676.95L273.5 676.56L274.5 676.66L275.5 676.62L276.5 676.64L277.5 676.46L278.5 676.77L279.5 676.57L280.5 676.77L281.5 676.66L282.5 676.62L283.5 676.79L284.5 676.91L285.5 676.71L286.5 676.59L287.5 676.65L288.5 676.73L289.5 676.63L290.5 676.86L291.5 676.86L292.5 676.79L293.5 676.54L294.5 676.85L295.5 676.89L296.5 676.90L297.5 676.93L298.5 676.81L299.5 676.66L300.5 676.54L301.5 676.78L302.5 676.77L303.5 676.81L304.5 677.60L305.5 678.16L306.5 678.68L307.5 679.22L308.5 678.82L309.5 677.12L310.5 675.80L311.5 675.60L312.5 675.76L313.5 675.48L314.5 675.29L315.5 675.45L316.5 675.28L317.5 675.67L318.5 675.26L319.5 675.72L320.5 675.54L321.5 675.74L322.5 675.35L323.5 675.41L324.5 675.26L325.5 675.35L326.5 675.28L327.5 675.48L328.5 675.26L329.5 675.38L330.5 675.58L331.5 675.26L332.5 675.56L333.5 675.65L334.5 675.71L335.5 675.52L336.5 675.65L337.5 675.28L338.5 675.27L339.5 675.64L340.5 675.70L341.5 675.49L342.5 675.67L343.5 675.48L344.5 675.34L345.5 675.62L346.5 675.54L347.5 675.30L348.5 675.53L349.5 675.58L350.5 675.30L351.5 675.34L352.5 675.30L353.5 675.41L354.5 675.54L355.5 675.40L356.5 675.34L357.5 675.43L358.5 675.63L359.5 675.60L360.5 675.55L361.5 675.36L362.5 675.47L363.5 675.48L364.5 675.34L365.5 675.70L366.5 675.43L367.5 675.58L368.5 675.47L369.5 675.33L370.5 675.63L371.5 675.27L372.5 675.71L373.5 675.47L374.5 675.48L375.5 675.63L376.5 675.47L377.5 675.51L378.5 675.53L379.5 675.39L380.5 675.75L381.5 675.56L382.5 675.36L383.5 675.68L384.5 675.32L385.5 675.65L386.5 675.41L387.5 675.66L388.5 675.53L389.5 675.54L390.5 675.71L391.5 675.40L392.5 675.51L393.5 675.41L394.5 675.48L395.5 675.47L396.5 675.49L397.5 675.60L398.5 675.30L399.5 675.71L400.5 675.31L401.5 675.32L402.5 675.50L403.5 675.36L404.5 675.41L405.5 675.45L406.5 675.60L407.5 675.59L408.5 675.58L409.5 675.60L410.5 675.27L411.5 675.58L412.5 675.56L413.5 675.54L414.5 675.34L415.5 675.51L416.5 675.47L417.5 675.62L418.5 675.61L419.5 675.71L420.5 675.64L421.5 675.62L422.5 675.32L423.5 675.50L424.5 675.69L425.5 675.52L426.5 675.69L427.5 675.47L428.5 675.53L429.5 675.32L430.5 675.62L431.5 675.32L432.5 675.63L433.5 675.26L434.5 675.43L435.5 675.73L436.5 675.35L437.5 675.61L438.5 675.57L439.5 675.68L440.5 675.33L441.5 675.70L442.5 675.38L443.5 675.55L444.5 675.41L445.5 675.60L446.5 675.71L447.5 675.29L448.5 675.42L449.5 675.67L450.5 675.26L451.5 675.29L452.5 675.66L453.5 675.74L454.5 675.44L455.5 675.68L456.5 675.38L457.5 675.52L458.5 675.40L459.5 675.47L460.5 675.36L461.5 675.34L462.5 675.45L463.5 675.45L464.5 675.59L465.5 675.68L466.5 675.70L467.5 675.32L468.5 675.65L469.5 675.54L470.5 675.59L471.5 675.44L472.5 675.48L473.5 675.32L474.5 675.53L475.5 675.57L476.5 675.42L477.5 675.38L478.5 675.29L479.5 675.59L480.5 675.31L481.5 675.26L482.5 675.26L483.5 675.69L484.5 675.56L485.5 675.36L486.5 675.33L487.5 675.73L488.5 675.55L489.5 675.39L490.5 675.37L491.5 675.48L492.5 675.64L493.5 675.55L494.5 675.72L495.5 675.59L496.5 675.54L497.5 675.34L498.5 675.46L499.5 675.54L500.5 675.63L501.5 675.59L502.5 675.41L503.5 675.53L504.5 675.66L505.5 675.34L506.5 675.46L507.5 675.27L508.5 675.48L509.5 675.44L510.5 675.54L511.5 675.45L512.5 675.29L513.5 675.26L514.5 675.42L515.5 675.53L516.5 675.72L517.5 675.33L518.5 675.55L519.5 675.56L520.5 675.72L521.5 675.73L522.5 675.55L523.5 675.26L524.5 675.38L525.5 675.40L526.5 675.72L527.5 676.21L528.5 676.26L529.5 676.04L530.5 676.31L531.5 676.04L532.5 676.07L533.5 676.05L534.5 676.26L535.5 676.28L536.5 676.08L537.5 676.24L538.5 675.99L539.5 676.15L540.5 675.99L541.5 675.92L542.5 675.99L543.5 676.02L544.5 676.18L545.5 676.10L546.5 675.79L547.5 676.14L548.5 676.12L549.5 676.02L550.5 675.99L551.5 675.86L552.5 676.10L553.5 675.76L554.5 676.23L555.5 675.84L556.5 675.95L557.5 675.78L558.5 676.15L559.5 675.88L560.5 675.74L561.5 675.88L562.5 676.15L563.5 675.75L564.5 675.72L565.5 676.14L566.5 675.78L567.5 676.15L568.5 676.15L569.5 675.78L570.5 675.82L571.5 675.70L572.5 675.85L573.5 675.91L574.5 676.03L575.5 675.87L576.5 675.66L577.5 675.83" stroke="#d86612" stroke-width="1.3" fill="none"/>
<path d="M253.5 676.98L254.5 676.21L255.5 675.76L256.5 675.10L257.5 672.76L258.5 671.53L259.5 671.42L260.5 672.98L261.5 671.87L262.5 672.00L263.5 672.86L264.5 673.67L265.5 673.30L266.5 674.80L267.5 676.41L268.5 676.37L269.5 677.66L270.5 675.79L271.5 675.62L272.5 676.68L273.5 677.84L274.5 678.96L275.5 678.93L276.5 678.98L277.5 678.91L278.5 678.95L279.5 678.91L280.5 678.99L281.5 678.96L282.5 678.98L283.5 679.05L284.5 678.91L285.5 679.04L286.5 678.94L287.5 678.91L288.5 678.97L289.5 679.07L290.5 678.93L291.5 678.97L292.5 679.06L293.5 679.09L294.5 678.99L295.5 679.09L296.5 678.91L297.5 679.00L298.5 679.00L299.5 679.02L300.5 678.97L301.5 678.92L302.5 679.04L303.5 679.03L304.5 679.28L305.5 679.94L306.5 680.18L307.5 680.56L308.5 680.65L309.5 679.67L310.5 679.09L311.5 679.18L312.5 679.00L313.5 679.13L314.5 679.11L315.5 679.12L316.5 679.01L317.5 679.01L318.5 679.10L319.5 679.12L320.5 679.18L321.5 679.02L322.5 679.17L323.5 679.09L324.5 679.13L325.5 679.13L326.5 679.13L327.5 679.16L328.5 679.19L329.5 679.09L330.5 679.04L331.5 679.07L332.5 679.16L333.5 679.06L334.5 679.19L335.5 679.12L336.5 679.03L337.5 679.02L338.5 679.11L339.5 679.03L340.5 679.10L341.5 679.10L342.5 679.08L343.5 679.00L344.5 679.05L345.5 679.11L346.5 679.05L347.5 679.07L348.5 679.13L349.5 679.04L350.5 679.04L351.5 679.08L352.5 679.01L353.5 679.20L354.5 679.10L355.5 679.07L356.5 679.13L357.5 679.17L358.5 679.06L359.5 679.11L360.5 679.15L361.5 679.19L362.5 679.01L363.5 679.13L364.5 679.18L365.5 679.16L366.5 679.15L367.5 679.03L368.5 679.16L369.5 679.14L370.5 679.18L371.5 679.11L372.5 679.16L373.5 679.13L374.5 679.05L375.5 679.01L376.5 679.03L377.5 679.19L378.5 679.12L379.5 679.03L380.5 679.19L381.5 679.16L382.5 679.10L383.5 679.12L384.5 679.05L385.5 679.06L386.5 679.11L387.5 679.15L388.5 679.15L389.5 679.15L390.5 679.19L391.5 679.07L392.5 679.17L393.5 679.02L394.5 679.07L395.5 679.19L396.5 679.10L397.5 679.08L398.5 679.19L399.5 679.10L400.5 679.19L401.5 679.05L402.5 679.20L403.5 679.07L404.5 679.00L405.5 679.03L406.5 679.15L407.5 679.09L408.5 679.17L409.5 679.13L410.5 679.03L411.5 679.04L412.5 679.20L413.5 679.12L414.5 679.07L415.5 679.16L416.5 679.04L417.5 679.02L418.5 679.09L419.5 679.13L420.5 679.03L421.5 679.10L422.5 679.16L423.5 679.14L424.5 679.17L425.5 679.03L426.5 679.10L427.5 679.06L428.5 679.04L429.5 679.01L430.5 679.16L431.5 679.12L432.5 679.03L433.5 679.05L434.5 679.12L435.5 679.07L436.5 679.16L437.5 679.17L438.5 679.19L439.5 679.12L440.5 679.15L441.5 679.10L442.5 679.01L443.5 679.17L444.5 679.09L445.5 679.03L446.5 679.08L447.5 679.09L448.5 679.05L449.5 679.20L450.5 679.01L451.5 679.06L452.5 679.04L453.5 679.03L454.5 679.18L455.5 679.19L456.5 679.16L457.5 679.10L458.5 679.01L459.5 679.02L460.5 679.12L461.5 679.08L462.5 679.05L463.5 679.13L464.5 679.01L465.5 679.01L466.5 679.05L467.5 679.02L468.5 679.04L469.5 679.07L470.5 679.14L471.5 679.14L472.5 679.15L473.5 679.19L474.5 679.01L475.5 679.14L476.5 679.20L477.5 679.14L478.5 679.18L479.5 679.11L480.5 679.13L481.5 678.52L482.5 677.82L483.5 677.84L484.5 678.49L485.5 679.04L486.5 679.14L487.5 679.09L488.5 679.02L489.5 679.01L490.5 679.13L491.5 679.19L492.5 679.01L493.5 679.10L494.5 679.16L495.5 679.17L496.5 679.15L497.5 679.14L498.5 679.17L499.5 679.19L500.5 679.00L501.5 679.04L502.5 679.18L503.5 679.10L504.5 679.04L505.5 679.10L506.5 679.19L507.5 679.13L508.5 679.12L509.5 679.02L510.5 679.08L511.5 679.11L512.5 679.07L513.5 678.23L514.5 677.14L515.5 677.12L516.5 677.15L517.5 679.13L518.5 679.14L519.5 679.20L520.5 679.18L521.5 679.17L522.5 679.11L523.5 679.04L524.5 679.16L525.5 678.91L526.5 677.67L527.5 677.07L528.5 676.20L529.5 674.02L530.5 674.08L531.5 675.39L532.5 675.32L533.5 674.56L534.5 674.01L535.5 674.13L536.5 675.12L537.5 676.09L538.5 677.67L539.5 677.62L540.5 677.52L541.5 677.59L542.5 677.54L543.5 677.15L544.5 676.53L545.5 675.54L546.5 675.65L547.5 675.59L548.5 675.56L549.5 676.34L550.5 677.08L551.5 677.15L552.5 677.09L553.5 677.13L554.5 676.79L555.5 676.38L556.5 676.00L557.5 675.83L558.5 675.65L559.5 675.74L560.5 675.92L561.5 675.93L562.5 675.94L563.5 675.58L564.5 675.64L565.5 675.71L566.5 676.17L567.5 676.23L568.5 676.39L569.5 676.75L570.5 676.87L571.5 676.93L572.5 677.01L573.5 676.96L574.5 676.95L575.5 676.80L576.5 676.60L577.5 676.67" stroke="#00eeee" stroke-width="1.35" fill="none"/>
<path d="M253.5 683.5L253.5 683.50L254.5 683.50L255.5 683.50L256.5 683.50L257.5 683.50L258.5 683.50L259.5 683.50L260.5 683.50L261.5 683.50L262.5 683.50L263.5 683.50L264.5 683.50L265.5 683.50L266.5 683.50L267.5 683.50L268.5 683.50L269.5 683.50L270.5 683.50L271.5 683.50L272.5 683.50L273.5 683.50L274.5 683.50L275.5 683.50L276.5 683.50L277.5 683.50L278.5 683.50L279.5 683.50L280.5 683.50L281.5 683.50L282.5 683.50L283.5 683.50L284.5 683.50L285.5 683.50L286.5 683.50L287.5 683.50L288.5 683.50L289.5 683.50L290.5 683.50L291.5 683.50L292.5 683.50L293.5 683.50L294.5 683.50L295.5 683.50L296.5 683.50L297.5 683.50L298.5 683.50L299.5 683.50L300.5 683.50L301.5 683.50L302.5 683.50L303.5 683.50L304.5 683.50L305.5 683.50L306.5 683.50L307.5 683.50L308.5 683.50L309.5 683.50L310.5 683.50L311.5 683.50L312.5 683.50L313.5 683.50L314.5 683.50L315.5 683.50L316.5 683.50L317.5 683.50L318.5 683.50L319.5 683.50L320.5 683.50L321.5 683.50L322.5 683.50L323.5 683.50L324.5 683.50L325.5 683.50L326.5 683.50L327.5 683.50L328.5 683.50L329.5 683.50L330.5 683.50L331.5 683.50L332.5 683.50L333.5 683.50L334.5 683.50L335.5 683.50L336.5 683.50L337.5 683.50L338.5 683.50L339.5 683.50L340.5 683.50L341.5 683.50L342.5 683.50L343.5 683.50L344.5 683.50L345.5 683.50L346.5 683.50L347.5 683.50L348.5 683.50L349.5 683.50L350.5 683.50L351.5 683.50L352.5 683.50L353.5 683.50L354.5 683.50L355.5 683.50L356.5 683.50L357.5 683.50L358.5 683.50L359.5 683.50L360.5 683.50L361.5 683.50L362.5 683.50L363.5 683.50L364.5 683.50L365.5 683.50L366.5 683.50L367.5 683.50L368.5 683.50L369.5 683.50L370.5 683.50L371.5 683.50L372.5 683.50L373.5 683.50L374.5 683.50L375.5 683.50L376.5 683.50L377.5 683.50L378.5 683.50L379.5 683.50L380.5 683.50L381.5 683.50L382.5 683.50L383.5 683.50L384.5 683.50L385.5 683.50L386.5 683.50L387.5 683.50L388.5 683.50L389.5 683.50L390.5 683.50L391.5 683.50L392.5 683.50L393.5 683.50L394.5 683.50L395.5 683.50L396.5 683.50L397.5 683.50L398.5 683.50L399.5 683.50L400.5 683.50L401.5 683.50L402.5 683.50L403.5 683.50L404.5 683.50L405.5 683.50L406.5 683.50L407.5 683.50L408.5 683.50L409.5 683.50L410.5 683.50L411.5 683.50L412.5 683.50L413.5 683.50L414.5 683.50L415.5 683.50L416.5 683.50L417.5 683.50L418.5 683.50L419.5 683.50L420.5 683.50L421.5 683.50L422.5 683.50L423.5 683.50L424.5 683.50L425.5 683.50L426.5 683.50L427.5 683.50L428.5 683.50L429.5 683.50L430.5 683.50L431.5 683.50L432.5 683.50L433.5 683.50L434.5 683.50L435.5 683.50L436.5 683.50L437.5 683.50L438.5 683.50L439.5 683.50L440.5 683.50L441.5 683.50L442.5 683.50L443.5 683.50L444.5 683.50L445.5 683.50L446.5 683.50L447.5 683.50L448.5 683.50L449.5 683.50L450.5 683.50L451.5 683.50L452.5 683.50L453.5 683.50L454.5 683.50L455.5 683.50L456.5 683.50L457.5 683.50L458.5 683.50L459.5 683.50L460.5 683.50L461.5 683.50L462.5 683.50L463.5 683.50L464.5 683.50L465.5 683.50L466.5 683.50L467.5 683.50L468.5 683.50L469.5 683.50L470.5 683.50L471.5 683.50L472.5 683.50L473.5 683.50L474.5 683.50L475.5 683.50L476.5 683.50L477.5 683.50L478.5 683.50L479.5 683.50L480.5 683.50L481.5 682.62L482.5 681.74L483.5 681.74L484.5 682.62L485.5 683.50L486.5 683.50L487.5 683.50L488.5 683.50L489.5 683.50L490.5 683.50L491.5 683.50L492.5 683.50L493.5 683.50L494.5 683.50L495.5 683.50L496.5 683.50L497.5 683.50L498.5 683.50L499.5 683.50L500.5 683.50L501.5 683.50L502.5 683.50L503.5 683.50L504.5 683.50L505.5 683.50L506.5 683.50L507.5 683.50L508.5 683.50L509.5 683.50L510.5 683.50L511.5 683.50L512.5 683.50L513.5 682.86L514.5 682.22L515.5 682.22L516.5 682.22L517.5 683.50L518.5 683.50L519.5 683.50L520.5 683.50L521.5 683.50L522.5 683.50L523.5 683.50L524.5 683.50L525.5 683.50L526.5 683.50L527.5 683.50L528.5 683.50L529.5 683.50L530.5 683.50L531.5 683.50L532.5 683.50L533.5 683.50L534.5 683.50L535.5 683.50L536.5 683.50L537.5 683.50L538.5 683.50L539.5 683.50L540.5 683.50L541.5 683.50L542.5 683.50L543.5 683.50L544.5 683.50L545.5 683.50L546.5 683.50L547.5 683.50L548.5 683.50L549.5 683.50L550.5 683.50L551.5 683.50L552.5 683.50L553.5 683.50L554.5 683.50L555.5 683.50L556.5 683.50L557.5 683.50L558.5 683.50L559.5 683.50L560.5 683.50L561.5 683.50L562.5 683.50L563.5 683.50L564.5 683.50L565.5 683.50L566.5 683.50L567.5 683.50L568.5 683.50L569.5 683.50L570.5 683.50L571.5 683.50L572.5 683.50L573.5 683.50L574.5 683.50L575.5 683.50L576.5 683.50L577.5 683.50L577.5 683.5 Z" fill="#ee44ee"/>
<path d="M256.5 533V684M270.5 533V684M283.5 533V684M310.5 533V684M324.5 533V684M337.5 533V684M351.5 533V684M365.5 533V684M392.5 533V684M405.5 533V684M419.5 533V684M432.5 533V684M446.5 533V684M473.5 533V684M486.5 533V684M500.5 533V684M513.5 533V684M527.5 533V684M554.5 533V684M568.5 533V684" stroke="#808020" stroke-opacity="0.44" stroke-width="1" stroke-dasharray="1 1" fill="none" shape-rendering="crispEdges"/>
<path d="M297.5 533V684M378.5 533V684M459.5 533V684M541.5 533V684" stroke="#80c080" stroke-opacity="0.68" stroke-width="1" stroke-dasharray="1 1" fill="none" shape-rendering="crispEdges"/>
<path d="M252 540.5H579M252 555.5H579M252 570.5H579M252 585.5H579M252 600.5H579M252 615.5H579M252 630.5H579M252 645.5H579M252 660.5H579M252 675.5H579" stroke="#808020" stroke-opacity="0.44" stroke-width="1" stroke-dasharray="1 1" fill="none" shape-rendering="crispEdges"/>
<path d="M253 533.5H579M253 548.5H579M253 563.5H579M253 578.5H579M253 593.5H579M253 608.5H579M253 623.5H579M253 638.5H579M253 653.5H579M253 668.5H579M253 683.5H579" stroke="#80c080" stroke-opacity="0.68" stroke-width="1" stroke-dasharray="1 1" fill="none" shape-rendering="crispEdges"/>
<path d="M249 683.5H582M253.5 529V687" stroke="#101010" stroke-opacity="0.55" stroke-width="1" fill="none" shape-rendering="crispEdges"/>
<path d="M256.5 531V533M256.5 684V686M270.5 531V533M270.5 684V686M283.5 531V533M283.5 684V686M310.5 531V533M310.5 684V686M324.5 531V533M324.5 684V686M337.5 531V533M337.5 684V686M351.5 531V533M351.5 684V686M365.5 531V533M365.5 684V686M392.5 531V533M392.5 684V686M405.5 531V533M405.5 684V686M419.5 531V533M419.5 684V686M432.5 531V533M432.5 684V686M446.5 531V533M446.5 684V686M473.5 531V533M473.5 684V686M486.5 531V533M486.5 684V686M500.5 531V533M500.5 684V686M513.5 531V533M513.5 684V686M527.5 531V533M527.5 684V686M554.5 531V533M554.5 684V686M568.5 531V533M568.5 684V686" stroke="#808020" stroke-opacity="0.4" stroke-width="1" fill="none" shape-rendering="crispEdges"/>
<path d="M297.5 531V533M297.5 684V686M378.5 531V533M378.5 684V686M459.5 531V533M459.5 684V686M541.5 531V533M541.5 684V686" stroke="#80c080" stroke-opacity="0.66" stroke-width="1" fill="none" shape-rendering="crispEdges"/>
<path d="M251 540.5H253M579 540.5H581M251 555.5H253M579 555.5H581M251 570.5H253M579 570.5H581M251 585.5H253M579 585.5H581M251 600.5H253M579 600.5H581M251 615.5H253M579 615.5H581M251 630.5H253M579 630.5H581M251 645.5H253M579 645.5H581M251 660.5H253M579 660.5H581M251 675.5H253M579 675.5H581" stroke="#808020" stroke-opacity="0.4" stroke-width="1" fill="none" shape-rendering="crispEdges"/>
<path d="M251 533.5H253M579 533.5H581M251 548.5H253M579 548.5H581M251 563.5H253M579 563.5H581M251 578.5H253M579 578.5H581M251 593.5H253M579 593.5H581M251 608.5H253M579 608.5H581M251 623.5H253M579 623.5H581M251 638.5H253M579 638.5H581M251 653.5H253M579 653.5H581M251 668.5H253M579 668.5H581M251 683.5H253M579 683.5H581" stroke="#80c080" stroke-opacity="0.66" stroke-width="1" fill="none" shape-rendering="crispEdges"/>
<path d="M250.2 530.6 L253.3 526.2 L256.4 530.6 Z" fill="#fff"/>
<path d="M580.4 680.2 L584.8 683.2 L580.4 686.2 Z" fill="#fff"/>
<rect x="201.5" y="704.5" width="7" height="7" fill="#4444ee" stroke="#8c8c8c" stroke-width="1"/>
<rect x="201.5" y="716.5" width="7" height="7" fill="#eeee44" stroke="#8c8c8c" stroke-width="1"/>
<rect x="201.5" y="728.5" width="7" height="7" fill="#44eeee" stroke="#8c8c8c" stroke-width="1"/>
<rect x="201.5" y="740.5" width="7" height="7" fill="#ee44ee" stroke="#8c8c8c" stroke-width="1"/>
<rect x="201.5" y="752.5" width="7" height="7" fill="#888888" stroke="#8c8c8c" stroke-width="1"/>
<rect x="614" y="507" width="421" height="299" fill="#2c2c2c" />
<rect x="615" y="508" width="420" height="298" fill="#474747" />
<rect x="617" y="510" width="416" height="294" fill="#101010" />
<rect x="680" y="533" width="325" height="151" fill="#000" />
<path d="M680.5 683.5L680.5 672.83L681.5 668.64L682.5 668.10L683.5 668.05L684.5 659.30L685.5 654.21L686.5 653.16L687.5 655.66L688.5 653.77L689.5 649.44L690.5 653.59L691.5 658.59L692.5 656.92L693.5 660.00L694.5 665.07L695.5 670.64L696.5 671.67L697.5 661.81L698.5 660.06L699.5 662.42L700.5 672.97L701.5 673.22L702.5 673.66L703.5 672.56L704.5 673.99L705.5 673.99L706.5 673.32L707.5 673.40L708.5 672.65L709.5 672.88L710.5 673.82L711.5 674.13L712.5 672.94L713.5 672.68L714.5 674.51L715.5 673.18L716.5 672.96L717.5 673.38L718.5 674.22L719.5 673.14L720.5 673.28L721.5 674.33L722.5 673.49L723.5 674.31L724.5 674.67L725.5 674.12L726.5 674.15L727.5 674.05L728.5 673.58L729.5 673.25L730.5 673.02L731.5 673.49L732.5 674.90L733.5 676.22L734.5 678.17L735.5 677.22L736.5 675.06L737.5 675.21L738.5 674.97L739.5 676.07L740.5 675.88L741.5 674.50L742.5 675.11L743.5 674.93L744.5 676.07L745.5 675.49L746.5 674.52L747.5 675.02L748.5 674.37L749.5 675.88L750.5 675.39L751.5 674.73L752.5 675.41L753.5 674.75L754.5 675.18L755.5 676.03L756.5 676.06L757.5 674.38L758.5 676.02L759.5 675.88L760.5 675.61L761.5 674.89L762.5 674.63L763.5 675.35L764.5 675.30L765.5 674.75L766.5 675.72L767.5 675.54L768.5 675.09L769.5 675.04L770.5 676.18L771.5 676.04L772.5 675.99L773.5 674.87L774.5 674.93L775.5 674.40L776.5 674.79L777.5 675.77L778.5 674.80L779.5 674.38L780.5 675.59L781.5 676.23L782.5 675.54L783.5 675.71L784.5 675.92L785.5 676.16L786.5 676.01L787.5 674.61L788.5 676.16L789.5 675.08L790.5 675.86L791.5 675.88L792.5 674.69L793.5 675.68L794.5 675.90L795.5 675.39L796.5 674.93L797.5 675.25L798.5 674.62L799.5 675.49L800.5 675.25L801.5 674.89L802.5 675.37L803.5 674.89L804.5 675.36L805.5 676.00L806.5 676.02L807.5 674.76L808.5 674.83L809.5 674.46L810.5 674.94L811.5 675.15L812.5 675.93L813.5 674.63L814.5 676.02L815.5 675.44L816.5 675.98L817.5 675.53L818.5 675.67L819.5 675.44L820.5 674.90L821.5 675.22L822.5 675.79L823.5 674.77L824.5 674.85L825.5 674.68L826.5 676.19L827.5 675.08L828.5 674.55L829.5 675.76L830.5 675.87L831.5 674.70L832.5 675.56L833.5 675.49L834.5 674.70L835.5 675.52L836.5 675.87L837.5 675.84L838.5 675.59L839.5 674.92L840.5 675.55L841.5 674.78L842.5 676.12L843.5 675.78L844.5 675.06L845.5 675.34L846.5 675.30L847.5 674.47L848.5 675.72L849.5 675.91L850.5 676.19L851.5 675.33L852.5 675.69L853.5 675.35L854.5 676.24L855.5 676.25L856.5 675.53L857.5 674.81L858.5 675.68L859.5 674.52L860.5 675.15L861.5 675.48L862.5 674.77L863.5 675.81L864.5 675.10L865.5 674.64L866.5 675.22L867.5 675.64L868.5 676.07L869.5 675.16L870.5 675.89L871.5 675.54L872.5 675.22L873.5 674.46L874.5 674.97L875.5 675.26L876.5 674.62L877.5 675.66L878.5 675.51L879.5 674.96L880.5 675.20L881.5 675.83L882.5 675.47L883.5 674.69L884.5 675.79L885.5 674.91L886.5 676.16L887.5 674.44L888.5 674.95L889.5 675.63L890.5 674.38L891.5 674.74L892.5 676.13L893.5 675.78L894.5 675.32L895.5 674.35L896.5 675.98L897.5 676.16L898.5 675.66L899.5 676.16L900.5 675.47L901.5 675.23L902.5 675.41L903.5 675.98L904.5 676.21L905.5 674.72L906.5 675.41L907.5 675.34L908.5 675.34L909.5 674.95L910.5 674.54L911.5 674.68L912.5 674.87L913.5 675.61L914.5 675.93L915.5 676.08L916.5 674.62L917.5 676.14L918.5 675.17L919.5 674.52L920.5 675.64L921.5 675.51L922.5 675.46L923.5 674.46L924.5 674.95L925.5 674.66L926.5 676.18L927.5 674.86L928.5 675.39L929.5 675.49L930.5 674.70L931.5 674.85L932.5 674.52L933.5 674.85L934.5 674.52L935.5 675.44L936.5 675.19L937.5 674.76L938.5 675.39L939.5 675.99L940.5 675.14L941.5 674.59L942.5 674.60L943.5 676.01L944.5 675.53L945.5 675.82L946.5 675.60L947.5 674.43L948.5 675.45L949.5 675.65L950.5 675.73L951.5 675.41L952.5 674.58L953.5 669.20L954.5 669.50L955.5 669.92L956.5 661.13L957.5 658.27L958.5 659.67L959.5 661.42L960.5 664.64L961.5 658.42L962.5 658.04L963.5 657.06L964.5 660.03L965.5 667.70L966.5 668.67L967.5 667.33L968.5 669.32L969.5 667.93L970.5 668.18L971.5 667.79L972.5 666.10L973.5 665.73L974.5 664.71L975.5 665.75L976.5 664.74L977.5 665.47L978.5 665.05L979.5 666.95L980.5 668.17L981.5 669.69L982.5 665.73L983.5 663.17L984.5 662.30L985.5 658.08L986.5 656.70L987.5 657.66L988.5 658.48L989.5 658.69L990.5 661.72L991.5 666.82L992.5 664.22L993.5 664.00L994.5 666.36L995.5 664.11L996.5 663.08L997.5 664.23L998.5 665.01L999.5 665.95L1000.5 664.84L1001.5 665.55L1002.5 664.70L1003.5 664.08L1004.5 663.99L1004.5 683.5 Z" fill="#4444ee"/>
<path d="M680.5 683.5L680.5 678.79L681.5 678.00L682.5 677.60L683.5 677.10L684.5 675.14L685.5 674.08L686.5 674.20L687.5 675.34L688.5 674.46L689.5 674.52L690.5 675.26L691.5 675.83L692.5 675.68L693.5 677.02L694.5 678.15L695.5 678.27L696.5 678.30L697.5 676.11L698.5 676.09L699.5 677.11L700.5 678.21L701.5 678.46L702.5 678.59L703.5 678.58L704.5 678.41L705.5 678.58L706.5 678.57L707.5 678.60L708.5 678.60L709.5 678.60L710.5 678.54L711.5 678.57L712.5 678.54L713.5 678.42L714.5 678.57L715.5 678.44L716.5 678.46L717.5 678.49L718.5 678.49L719.5 678.45L720.5 678.49L721.5 678.56L722.5 678.54L723.5 678.56L724.5 678.53L725.5 678.41L726.5 678.52L727.5 678.59L728.5 678.51L729.5 678.44L730.5 678.52L731.5 678.77L732.5 679.51L733.5 679.82L734.5 680.07L735.5 680.26L736.5 680.28L737.5 680.26L738.5 680.30L739.5 680.33L740.5 680.34L741.5 680.15L742.5 680.20L743.5 680.15L744.5 680.24L745.5 680.15L746.5 680.17L747.5 680.22L748.5 680.23L749.5 680.24L750.5 680.29L751.5 680.26L752.5 680.20L753.5 680.30L754.5 680.17L755.5 680.24L756.5 680.22L757.5 680.18L758.5 680.21L759.5 680.31L760.5 680.29L761.5 680.34L762.5 680.33L763.5 680.15L764.5 680.22L765.5 680.15L766.5 680.18L767.5 680.28L768.5 680.15L769.5 680.16L770.5 680.25L771.5 680.32L772.5 680.28L773.5 680.31L774.5 680.27L775.5 680.32L776.5 680.20L777.5 680.14L778.5 680.30L779.5 680.18L780.5 680.22L781.5 680.24L782.5 680.16L783.5 680.26L784.5 680.18L785.5 680.33L786.5 680.15L787.5 680.30L788.5 680.34L789.5 680.16L790.5 680.20L791.5 680.21L792.5 680.19L793.5 680.26L794.5 680.32L795.5 680.28L796.5 680.15L797.5 680.14L798.5 680.29L799.5 680.25L800.5 680.25L801.5 680.16L802.5 680.34L803.5 680.17L804.5 680.29L805.5 680.23L806.5 680.31L807.5 680.32L808.5 680.16L809.5 680.24L810.5 680.15L811.5 680.17L812.5 680.19L813.5 680.33L814.5 680.22L815.5 680.14L816.5 680.24L817.5 680.33L818.5 680.30L819.5 680.14L820.5 680.14L821.5 680.29L822.5 680.28L823.5 680.20L824.5 680.24L825.5 680.30L826.5 680.14L827.5 680.22L828.5 680.27L829.5 680.34L830.5 680.24L831.5 680.19L832.5 680.30L833.5 680.32L834.5 680.20L835.5 680.16L836.5 680.26L837.5 680.25L838.5 680.21L839.5 680.24L840.5 680.31L841.5 680.29L842.5 680.30L843.5 680.30L844.5 680.32L845.5 680.26L846.5 680.30L847.5 680.17L848.5 680.28L849.5 680.15L850.5 680.18L851.5 680.29L852.5 680.31L853.5 680.23L854.5 680.25L855.5 680.23L856.5 680.32L857.5 680.23L858.5 680.19L859.5 680.25L860.5 680.29L861.5 680.16L862.5 680.28L863.5 680.14L864.5 680.20L865.5 680.34L866.5 680.25L867.5 680.31L868.5 680.18L869.5 680.26L870.5 680.32L871.5 680.15L872.5 680.18L873.5 680.22L874.5 680.23L875.5 680.33L876.5 680.14L877.5 680.28L878.5 680.24L879.5 680.24L880.5 680.25L881.5 680.34L882.5 680.16L883.5 680.24L884.5 680.26L885.5 680.17L886.5 680.17L887.5 680.20L888.5 680.16L889.5 680.27L890.5 680.32L891.5 680.27L892.5 680.22L893.5 680.18L894.5 680.19L895.5 680.21L896.5 680.22L897.5 680.21L898.5 680.23L899.5 680.34L900.5 680.23L901.5 680.28L902.5 680.33L903.5 680.22L904.5 680.17L905.5 680.28L906.5 680.21L907.5 680.21L908.5 679.55L909.5 678.86L910.5 678.90L911.5 679.67L912.5 680.22L913.5 680.27L914.5 680.26L915.5 680.21L916.5 680.31L917.5 680.21L918.5 680.15L919.5 680.32L920.5 680.17L921.5 680.20L922.5 680.26L923.5 680.19L924.5 680.32L925.5 680.31L926.5 680.14L927.5 680.22L928.5 680.31L929.5 680.31L930.5 680.25L931.5 680.23L932.5 680.14L933.5 680.30L934.5 680.21L935.5 680.25L936.5 680.23L937.5 680.15L938.5 680.32L939.5 680.17L940.5 679.21L941.5 678.33L942.5 678.36L943.5 678.23L944.5 680.17L945.5 680.27L946.5 680.31L947.5 680.23L948.5 680.21L949.5 680.27L950.5 680.26L951.5 680.32L952.5 680.11L953.5 678.87L954.5 678.15L955.5 677.88L956.5 678.06L957.5 678.01L958.5 678.07L959.5 678.06L960.5 677.97L961.5 678.07L962.5 678.01L963.5 678.11L964.5 678.03L965.5 678.67L966.5 678.72L967.5 678.77L968.5 678.80L969.5 678.75L970.5 678.22L971.5 678.14L972.5 678.08L973.5 678.07L974.5 678.16L975.5 678.05L976.5 677.99L977.5 678.16L978.5 678.21L979.5 678.13L980.5 678.11L981.5 678.01L982.5 678.02L983.5 678.06L984.5 678.03L985.5 678.07L986.5 678.16L987.5 678.20L988.5 678.14L989.5 678.10L990.5 678.19L991.5 678.17L992.5 678.23L993.5 678.25L994.5 678.21L995.5 678.09L996.5 678.25L997.5 678.24L998.5 678.20L999.5 678.09L1000.5 678.24L1001.5 678.28L1002.5 678.28L1003.5 678.23L1004.5 678.30L1004.5 683.5 Z" fill="#44eeee"/>
<path d="M680.5 683.5L680.5 683.50L681.5 683.50L682.5 683.50L683.5 683.50L684.5 683.50L685.5 683.50L686.5 683.50L687.5 683.50L688.5 683.50L689.5 683.50L690.5 683.50L691.5 683.50L692.5 683.50L693.5 683.50L694.5 683.50L695.5 683.50L696.5 683.50L697.5 683.50L698.5 683.50L699.5 683.50L700.5 683.50L701.5 683.50L702.5 683.50L703.5 683.50L704.5 683.50L705.5 683.50L706.5 683.50L707.5 683.50L708.5 683.50L709.5 683.50L710.5 683.50L711.5 683.50L712.5 683.50L713.5 683.50L714.5 683.50L715.5 683.50L716.5 683.50L717.5 683.50L718.5 683.50L719.5 683.50L720.5 683.50L721.5 683.50L722.5 683.50L723.5 683.50L724.5 683.50L725.5 683.50L726.5 683.50L727.5 683.50L728.5 683.50L729.5 683.50L730.5 683.50L731.5 683.50L732.5 683.50L733.5 683.50L734.5 683.50L735.5 683.50L736.5 683.50L737.5 683.50L738.5 683.50L739.5 683.50L740.5 683.50L741.5 683.50L742.5 683.50L743.5 683.50L744.5 683.50L745.5 683.50L746.5 683.50L747.5 683.50L748.5 683.50L749.5 683.50L750.5 683.50L751.5 683.50L752.5 683.50L753.5 683.50L754.5 683.50L755.5 683.50L756.5 683.50L757.5 683.50L758.5 683.50L759.5 683.50L760.5 683.50L761.5 683.50L762.5 683.50L763.5 683.50L764.5 683.50L765.5 683.50L766.5 683.50L767.5 683.50L768.5 683.50L769.5 683.50L770.5 683.50L771.5 683.50L772.5 683.50L773.5 683.50L774.5 683.50L775.5 683.50L776.5 683.50L777.5 683.50L778.5 683.50L779.5 683.50L780.5 683.50L781.5 683.50L782.5 683.50L783.5 683.50L784.5 683.50L785.5 683.50L786.5 683.50L787.5 683.50L788.5 683.50L789.5 683.50L790.5 683.50L791.5 683.50L792.5 683.50L793.5 683.50L794.5 683.50L795.5 683.50L796.5 683.50L797.5 683.50L798.5 683.50L799.5 683.50L800.5 683.50L801.5 683.50L802.5 683.50L803.5 683.50L804.5 683.50L805.5 683.50L806.5 683.50L807.5 683.50L808.5 683.50L809.5 683.50L810.5 683.50L811.5 683.50L812.5 683.50L813.5 683.50L814.5 683.50L815.5 683.50L816.5 683.50L817.5 683.50L818.5 683.50L819.5 683.50L820.5 683.50L821.5 683.50L822.5 683.50L823.5 683.50L824.5 683.50L825.5 683.50L826.5 683.50L827.5 683.50L828.5 683.50L829.5 683.50L830.5 683.50L831.5 683.50L832.5 683.50L833.5 683.50L834.5 683.50L835.5 683.50L836.5 683.50L837.5 683.50L838.5 683.50L839.5 683.50L840.5 683.50L841.5 683.50L842.5 683.50L843.5 683.50L844.5 683.50L845.5 683.50L846.5 683.50L847.5 683.50L848.5 683.50L849.5 683.50L850.5 683.50L851.5 683.50L852.5 683.50L853.5 683.50L854.5 683.50L855.5 683.50L856.5 683.50L857.5 683.50L858.5 683.50L859.5 683.50L860.5 683.50L861.5 683.50L862.5 683.50L863.5 683.50L864.5 683.50L865.5 683.50L866.5 683.50L867.5 683.50L868.5 683.50L869.5 683.50L870.5 683.50L871.5 683.50L872.5 683.50L873.5 683.50L874.5 683.50L875.5 683.50L876.5 683.50L877.5 683.50L878.5 683.50L879.5 683.50L880.5 683.50L881.5 683.50L882.5 683.50L883.5 683.50L884.5 683.50L885.5 683.50L886.5 683.50L887.5 683.50L888.5 683.50L889.5 683.50L890.5 683.50L891.5 683.50L892.5 683.50L893.5 683.50L894.5 683.50L895.5 683.50L896.5 683.50L897.5 683.50L898.5 683.50L899.5 683.50L900.5 683.50L901.5 683.50L902.5 683.50L903.5 683.50L904.5 683.50L905.5 683.50L906.5 683.50L907.5 683.50L908.5 682.62L909.5 681.74L910.5 681.74L911.5 682.62L912.5 683.50L913.5 683.50L914.5 683.50L915.5 683.50L916.5 683.50L917.5 683.50L918.5 683.50L919.5 683.50L920.5 683.50L921.5 683.50L922.5 683.50L923.5 683.50L924.5 683.50L925.5 683.50L926.5 683.50L927.5 683.50L928.5 683.50L929.5 683.50L930.5 683.50L931.5 683.50L932.5 683.50L933.5 683.50L934.5 683.50L935.5 683.50L936.5 683.50L937.5 683.50L938.5 683.50L939.5 683.50L940.5 682.86L941.5 682.22L942.5 682.22L943.5 682.22L944.5 683.50L945.5 683.50L946.5 683.50L947.5 683.50L948.5 683.50L949.5 683.50L950.5 683.50L951.5 683.50L952.5 683.50L953.5 683.50L954.5 683.50L955.5 683.50L956.5 683.50L957.5 683.50L958.5 683.50L959.5 683.50L960.5 683.50L961.5 683.50L962.5 683.50L963.5 683.50L964.5 683.50L965.5 683.50L966.5 683.50L967.5 683.50L968.5 683.50L969.5 683.50L970.5 683.50L971.5 683.50L972.5 683.50L973.5 683.50L974.5 683.50L975.5 683.50L976.5 683.50L977.5 683.50L978.5 683.50L979.5 683.50L980.5 683.50L981.5 683.50L982.5 683.50L983.5 683.50L984.5 683.50L985.5 683.50L986.5 683.50L987.5 683.50L988.5 683.50L989.5 683.50L990.5 683.50L991.5 683.50L992.5 683.50L993.5 683.50L994.5 683.50L995.5 683.50L996.5 683.50L997.5 683.50L998.5 683.50L999.5 683.50L1000.5 683.50L1001.5 683.50L1002.5 683.50L1003.5 683.50L1004.5 683.50L1004.5 683.5 Z" fill="#ee44ee"/>
<path d="M680.5 683.5L680.5 679.26L681.5 679.23L682.5 679.13L683.5 679.40L684.5 679.21L685.5 679.08L686.5 679.07L687.5 679.43L688.5 679.19L689.5 679.21L690.5 679.26L691.5 679.02L692.5 679.24L693.5 679.28L694.5 679.02L695.5 679.17L696.5 679.34L697.5 679.33L698.5 679.23L699.5 679.45L700.5 679.17L701.5 679.10L702.5 679.25L703.5 679.03L704.5 678.99L705.5 679.17L706.5 679.11L707.5 679.38L708.5 679.41L709.5 678.94L710.5 679.29L711.5 679.32L712.5 678.97L713.5 679.04L714.5 679.35L715.5 679.25L716.5 679.28L717.5 679.27L718.5 679.39L719.5 679.13L720.5 679.24L721.5 679.19L722.5 679.29L723.5 679.32L724.5 679.36L725.5 678.93L726.5 678.99L727.5 679.08L728.5 679.30L729.5 679.28L730.5 679.29L731.5 679.53L732.5 679.99L733.5 680.21L734.5 679.58L735.5 678.92L736.5 678.02L737.5 678.12L738.5 678.11L739.5 678.17L740.5 678.08L741.5 677.96L742.5 678.20L743.5 678.31L744.5 678.11L745.5 678.16L746.5 677.96L747.5 678.29L748.5 677.91L749.5 678.34L750.5 678.08L751.5 678.13L752.5 678.19L753.5 677.91L754.5 678.00L755.5 678.27L756.5 678.10L757.5 678.04L758.5 678.33L759.5 678.31L760.5 678.05L761.5 677.99L762.5 678.12L763.5 678.14L764.5 678.10L765.5 678.22L766.5 677.91L767.5 677.87L768.5 678.11L769.5 678.34L770.5 678.15L771.5 677.95L772.5 678.19L773.5 678.30L774.5 678.26L775.5 677.99L776.5 678.04L777.5 678.21L778.5 678.04L779.5 677.97L780.5 677.87L781.5 677.93L782.5 678.13L783.5 677.95L784.5 677.89L785.5 677.92L786.5 677.97L787.5 678.06L788.5 678.09L789.5 677.92L790.5 678.04L791.5 677.99L792.5 678.24L793.5 678.30L794.5 678.21L795.5 678.06L796.5 678.06L797.5 678.25L798.5 678.26L799.5 677.87L800.5 678.31L801.5 677.89L802.5 677.96L803.5 678.06L804.5 677.85L805.5 678.01L806.5 678.35L807.5 677.88L808.5 678.14L809.5 677.89L810.5 677.94L811.5 678.28L812.5 678.33L813.5 678.34L814.5 677.96L815.5 677.95L816.5 678.24L817.5 678.29L818.5 678.17L819.5 677.95L820.5 677.98L821.5 677.92L822.5 677.87L823.5 677.97L824.5 677.93L825.5 678.34L826.5 678.35L827.5 677.92L828.5 678.04L829.5 678.19L830.5 678.29L831.5 678.18L832.5 678.18L833.5 678.10L834.5 678.13L835.5 678.25L836.5 678.31L837.5 678.25L838.5 678.29L839.5 678.30L840.5 678.14L841.5 678.28L842.5 677.95L843.5 678.08L844.5 678.12L845.5 678.03L846.5 678.23L847.5 678.34L848.5 678.31L849.5 678.18L850.5 678.17L851.5 678.22L852.5 678.20L853.5 677.93L854.5 678.35L855.5 678.13L856.5 678.16L857.5 678.21L858.5 677.99L859.5 678.24L860.5 678.33L861.5 678.27L862.5 677.86L863.5 678.18L864.5 678.29L865.5 677.86L866.5 678.03L867.5 677.87L868.5 678.18L869.5 677.95L870.5 678.33L871.5 678.23L872.5 677.95L873.5 678.09L874.5 677.96L875.5 678.16L876.5 677.91L877.5 678.31L878.5 678.04L879.5 678.26L880.5 678.25L881.5 677.91L882.5 678.13L883.5 677.94L884.5 678.21L885.5 677.98L886.5 677.90L887.5 678.04L888.5 678.23L889.5 678.02L890.5 677.87L891.5 677.95L892.5 678.13L893.5 678.15L894.5 678.30L895.5 677.97L896.5 678.27L897.5 678.24L898.5 678.33L899.5 678.27L900.5 678.16L901.5 678.11L902.5 678.26L903.5 678.14L904.5 677.97L905.5 678.30L906.5 678.28L907.5 678.09L908.5 677.90L909.5 677.89L910.5 678.07L911.5 678.30L912.5 677.91L913.5 677.85L914.5 677.90L915.5 678.08L916.5 678.16L917.5 678.06L918.5 677.95L919.5 677.85L920.5 678.10L921.5 678.10L922.5 678.19L923.5 678.08L924.5 678.08L925.5 678.21L926.5 678.12L927.5 677.89L928.5 678.23L929.5 678.22L930.5 678.20L931.5 677.92L932.5 678.20L933.5 677.94L934.5 677.89L935.5 677.91L936.5 677.95L937.5 678.25L938.5 678.12L939.5 677.94L940.5 678.23L941.5 678.05L942.5 677.91L943.5 677.88L944.5 678.17L945.5 678.29L946.5 678.33L947.5 678.19L948.5 678.08L949.5 678.21L950.5 677.94L951.5 678.02L952.5 678.04L953.5 678.14L954.5 678.59L955.5 678.63L956.5 678.97L957.5 679.01L958.5 679.10L959.5 678.77L960.5 678.72L961.5 679.16L962.5 678.82L963.5 679.15L964.5 678.97L965.5 679.03L966.5 678.74L967.5 678.98L968.5 678.94L969.5 679.03L970.5 679.08L971.5 679.09L972.5 679.19L973.5 679.21L974.5 678.95L975.5 678.86L976.5 678.90L977.5 679.11L978.5 678.75L979.5 679.21L980.5 679.03L981.5 679.09L982.5 679.17L983.5 678.78L984.5 678.91L985.5 679.21L986.5 679.19L987.5 678.87L988.5 679.10L989.5 679.14L990.5 679.14L991.5 679.13L992.5 679.01L993.5 679.15L994.5 679.01L995.5 679.28L996.5 679.05L997.5 679.03L998.5 679.17L999.5 678.90L1000.5 678.87L1001.5 679.01L1002.5 679.14L1003.5 679.26L1004.5 679.04L1004.5 683.5 Z" fill="#e29136"/>
<path d="M680.5 672.83L681.5 668.64L682.5 668.10L683.5 668.05L684.5 659.30L685.5 654.21L686.5 653.16L687.5 655.66L688.5 653.77L689.5 649.44L690.5 653.59L691.5 658.59L692.5 656.92L693.5 660.00L694.5 665.07L695.5 670.64L696.5 671.67L697.5 661.81L698.5 660.06L699.5 662.42L700.5 672.97L701.5 673.22L702.5 673.66L703.5 672.56L704.5 673.99L705.5 673.99L706.5 673.32L707.5 673.40L708.5 672.65L709.5 672.88L710.5 673.82L711.5 674.13L712.5 672.94L713.5 672.68L714.5 674.51L715.5 673.18L716.5 672.96L717.5 673.38L718.5 674.22L719.5 673.14L720.5 673.28L721.5 674.33L722.5 673.49L723.5 674.31L724.5 674.67L725.5 674.12L726.5 674.15L727.5 674.05L728.5 673.58L729.5 673.25L730.5 673.02L731.5 673.49L732.5 674.90L733.5 676.22L734.5 678.17L735.5 677.22L736.5 675.06L737.5 675.21L738.5 674.97L739.5 676.07L740.5 675.88L741.5 674.50L742.5 675.11L743.5 674.93L744.5 676.07L745.5 675.49L746.5 674.52L747.5 675.02L748.5 674.37L749.5 675.88L750.5 675.39L751.5 674.73L752.5 675.41L753.5 674.75L754.5 675.18L755.5 676.03L756.5 676.06L757.5 674.38L758.5 676.02L759.5 675.88L760.5 675.61L761.5 674.89L762.5 674.63L763.5 675.35L764.5 675.30L765.5 674.75L766.5 675.72L767.5 675.54L768.5 675.09L769.5 675.04L770.5 676.18L771.5 676.04L772.5 675.99L773.5 674.87L774.5 674.93L775.5 674.40L776.5 674.79L777.5 675.77L778.5 674.80L779.5 674.38L780.5 675.59L781.5 676.23L782.5 675.54L783.5 675.71L784.5 675.92L785.5 676.16L786.5 676.01L787.5 674.61L788.5 676.16L789.5 675.08L790.5 675.86L791.5 675.88L792.5 674.69L793.5 675.68L794.5 675.90L795.5 675.39L796.5 674.93L797.5 675.25L798.5 674.62L799.5 675.49L800.5 675.25L801.5 674.89L802.5 675.37L803.5 674.89L804.5 675.36L805.5 676.00L806.5 676.02L807.5 674.76L808.5 674.83L809.5 674.46L810.5 674.94L811.5 675.15L812.5 675.93L813.5 674.63L814.5 676.02L815.5 675.44L816.5 675.98L817.5 675.53L818.5 675.67L819.5 675.44L820.5 674.90L821.5 675.22L822.5 675.79L823.5 674.77L824.5 674.85L825.5 674.68L826.5 676.19L827.5 675.08L828.5 674.55L829.5 675.76L830.5 675.87L831.5 674.70L832.5 675.56L833.5 675.49L834.5 674.70L835.5 675.52L836.5 675.87L837.5 675.84L838.5 675.59L839.5 674.92L840.5 675.55L841.5 674.78L842.5 676.12L843.5 675.78L844.5 675.06L845.5 675.34L846.5 675.30L847.5 674.47L848.5 675.72L849.5 675.91L850.5 676.19L851.5 675.33L852.5 675.69L853.5 675.35L854.5 676.24L855.5 676.25L856.5 675.53L857.5 674.81L858.5 675.68L859.5 674.52L860.5 675.15L861.5 675.48L862.5 674.77L863.5 675.81L864.5 675.10L865.5 674.64L866.5 675.22L867.5 675.64L868.5 676.07L869.5 675.16L870.5 675.89L871.5 675.54L872.5 675.22L873.5 674.46L874.5 674.97L875.5 675.26L876.5 674.62L877.5 675.66L878.5 675.51L879.5 674.96L880.5 675.20L881.5 675.83L882.5 675.47L883.5 674.69L884.5 675.79L885.5 674.91L886.5 676.16L887.5 674.44L888.5 674.95L889.5 675.63L890.5 674.38L891.5 674.74L892.5 676.13L893.5 675.78L894.5 675.32L895.5 674.35L896.5 675.98L897.5 676.16L898.5 675.66L899.5 676.16L900.5 675.47L901.5 675.23L902.5 675.41L903.5 675.98L904.5 676.21L905.5 674.72L906.5 675.41L907.5 675.34L908.5 675.34L909.5 674.95L910.5 674.54L911.5 674.68L912.5 674.87L913.5 675.61L914.5 675.93L915.5 676.08L916.5 674.62L917.5 676.14L918.5 675.17L919.5 674.52L920.5 675.64L921.5 675.51L922.5 675.46L923.5 674.46L924.5 674.95L925.5 674.66L926.5 676.18L927.5 674.86L928.5 675.39L929.5 675.49L930.5 674.70L931.5 674.85L932.5 674.52L933.5 674.85L934.5 674.52L935.5 675.44L936.5 675.19L937.5 674.76L938.5 675.39L939.5 675.99L940.5 675.14L941.5 674.59L942.5 674.60L943.5 676.01L944.5 675.53L945.5 675.82L946.5 675.60L947.5 674.43L948.5 675.45L949.5 675.65L950.5 675.73L951.5 675.41L952.5 674.58L953.5 669.20L954.5 669.50L955.5 669.92L956.5 661.13L957.5 658.27L958.5 659.67L959.5 661.42L960.5 664.64L961.5 658.42L962.5 658.04L963.5 657.06L964.5 660.03L965.5 667.70L966.5 668.67L967.5 667.33L968.5 669.32L969.5 667.93L970.5 668.18L971.5 667.79L972.5 666.10L973.5 665.73L974.5 664.71L975.5 665.75L976.5 664.74L977.5 665.47L978.5 665.05L979.5 666.95L980.5 668.17L981.5 669.69L982.5 665.73L983.5 663.17L984.5 662.30L985.5 658.08L986.5 656.70L987.5 657.66L988.5 658.48L989.5 658.69L990.5 661.72L991.5 666.82L992.5 664.22L993.5 664.00L994.5 666.36L995.5 664.11L996.5 663.08L997.5 664.23L998.5 665.01L999.5 665.95L1000.5 664.84L1001.5 665.55L1002.5 664.70L1003.5 664.08L1004.5 663.99" stroke="#0000ee" stroke-width="1.1" fill="none"/>
<path d="M680.5 679.26L681.5 679.23L682.5 679.13L683.5 679.40L684.5 679.21L685.5 679.08L686.5 679.07L687.5 679.43L688.5 679.19L689.5 679.21L690.5 679.26L691.5 679.02L692.5 679.24L693.5 679.28L694.5 679.02L695.5 679.17L696.5 679.34L697.5 679.33L698.5 679.23L699.5 679.45L700.5 679.17L701.5 679.10L702.5 679.25L703.5 679.03L704.5 678.99L705.5 679.17L706.5 679.11L707.5 679.38L708.5 679.41L709.5 678.94L710.5 679.29L711.5 679.32L712.5 678.97L713.5 679.04L714.5 679.35L715.5 679.25L716.5 679.28L717.5 679.27L718.5 679.39L719.5 679.13L720.5 679.24L721.5 679.19L722.5 679.29L723.5 679.32L724.5 679.36L725.5 678.93L726.5 678.99L727.5 679.08L728.5 679.30L729.5 679.28L730.5 679.29L731.5 679.53L732.5 679.99L733.5 680.21L734.5 679.58L735.5 678.92L736.5 678.02L737.5 678.12L738.5 678.11L739.5 678.17L740.5 678.08L741.5 677.96L742.5 678.20L743.5 678.31L744.5 678.11L745.5 678.16L746.5 677.96L747.5 678.29L748.5 677.91L749.5 678.34L750.5 678.08L751.5 678.13L752.5 678.19L753.5 677.91L754.5 678.00L755.5 678.27L756.5 678.10L757.5 678.04L758.5 678.33L759.5 678.31L760.5 678.05L761.5 677.99L762.5 678.12L763.5 678.14L764.5 678.10L765.5 678.22L766.5 677.91L767.5 677.87L768.5 678.11L769.5 678.34L770.5 678.15L771.5 677.95L772.5 678.19L773.5 678.30L774.5 678.26L775.5 677.99L776.5 678.04L777.5 678.21L778.5 678.04L779.5 677.97L780.5 677.87L781.5 677.93L782.5 678.13L783.5 677.95L784.5 677.89L785.5 677.92L786.5 677.97L787.5 678.06L788.5 678.09L789.5 677.92L790.5 678.04L791.5 677.99L792.5 678.24L793.5 678.30L794.5 678.21L795.5 678.06L796.5 678.06L797.5 678.25L798.5 678.26L799.5 677.87L800.5 678.31L801.5 677.89L802.5 677.96L803.5 678.06L804.5 677.85L805.5 678.01L806.5 678.35L807.5 677.88L808.5 678.14L809.5 677.89L810.5 677.94L811.5 678.28L812.5 678.33L813.5 678.34L814.5 677.96L815.5 677.95L816.5 678.24L817.5 678.29L818.5 678.17L819.5 677.95L820.5 677.98L821.5 677.92L822.5 677.87L823.5 677.97L824.5 677.93L825.5 678.34L826.5 678.35L827.5 677.92L828.5 678.04L829.5 678.19L830.5 678.29L831.5 678.18L832.5 678.18L833.5 678.10L834.5 678.13L835.5 678.25L836.5 678.31L837.5 678.25L838.5 678.29L839.5 678.30L840.5 678.14L841.5 678.28L842.5 677.95L843.5 678.08L844.5 678.12L845.5 678.03L846.5 678.23L847.5 678.34L848.5 678.31L849.5 678.18L850.5 678.17L851.5 678.22L852.5 678.20L853.5 677.93L854.5 678.35L855.5 678.13L856.5 678.16L857.5 678.21L858.5 677.99L859.5 678.24L860.5 678.33L861.5 678.27L862.5 677.86L863.5 678.18L864.5 678.29L865.5 677.86L866.5 678.03L867.5 677.87L868.5 678.18L869.5 677.95L870.5 678.33L871.5 678.23L872.5 677.95L873.5 678.09L874.5 677.96L875.5 678.16L876.5 677.91L877.5 678.31L878.5 678.04L879.5 678.26L880.5 678.25L881.5 677.91L882.5 678.13L883.5 677.94L884.5 678.21L885.5 677.98L886.5 677.90L887.5 678.04L888.5 678.23L889.5 678.02L890.5 677.87L891.5 677.95L892.5 678.13L893.5 678.15L894.5 678.30L895.5 677.97L896.5 678.27L897.5 678.24L898.5 678.33L899.5 678.27L900.5 678.16L901.5 678.11L902.5 678.26L903.5 678.14L904.5 677.97L905.5 678.30L906.5 678.28L907.5 678.09L908.5 677.90L909.5 677.89L910.5 678.07L911.5 678.30L912.5 677.91L913.5 677.85L914.5 677.90L915.5 678.08L916.5 678.16L917.5 678.06L918.5 677.95L919.5 677.85L920.5 678.10L921.5 678.10L922.5 678.19L923.5 678.08L924.5 678.08L925.5 678.21L926.5 678.12L927.5 677.89L928.5 678.23L929.5 678.22L930.5 678.20L931.5 677.92L932.5 678.20L933.5 677.94L934.5 677.89L935.5 677.91L936.5 677.95L937.5 678.25L938.5 678.12L939.5 677.94L940.5 678.23L941.5 678.05L942.5 677.91L943.5 677.88L944.5 678.17L945.5 678.29L946.5 678.33L947.5 678.19L948.5 678.08L949.5 678.21L950.5 677.94L951.5 678.02L952.5 678.04L953.5 678.14L954.5 678.59L955.5 678.63L956.5 678.97L957.5 679.01L958.5 679.10L959.5 678.77L960.5 678.72L961.5 679.16L962.5 678.82L963.5 679.15L964.5 678.97L965.5 679.03L966.5 678.74L967.5 678.98L968.5 678.94L969.5 679.03L970.5 679.08L971.5 679.09L972.5 679.19L973.5 679.21L974.5 678.95L975.5 678.86L976.5 678.90L977.5 679.11L978.5 678.75L979.5 679.21L980.5 679.03L981.5 679.09L982.5 679.17L983.5 678.78L984.5 678.91L985.5 679.21L986.5 679.19L987.5 678.87L988.5 679.10L989.5 679.14L990.5 679.14L991.5 679.13L992.5 679.01L993.5 679.15L994.5 679.01L995.5 679.28L996.5 679.05L997.5 679.03L998.5 679.17L999.5 678.90L1000.5 678.87L1001.5 679.01L1002.5 679.14L1003.5 679.26L1004.5 679.04" stroke="#d86612" stroke-width="1.3" fill="none"/>
<path d="M680.5 678.79L681.5 678.00L682.5 677.60L683.5 677.10L684.5 675.14L685.5 674.08L686.5 674.20L687.5 675.34L688.5 674.46L689.5 674.52L690.5 675.26L691.5 675.83L692.5 675.68L693.5 677.02L694.5 678.15L695.5 678.27L696.5 678.30L697.5 676.11L698.5 676.09L699.5 677.11L700.5 678.21L701.5 678.46L702.5 678.59L703.5 678.58L704.5 678.41L705.5 678.58L706.5 678.57L707.5 678.60L708.5 678.60L709.5 678.60L710.5 678.54L711.5 678.57L712.5 678.54L713.5 678.42L714.5 678.57L715.5 678.44L716.5 678.46L717.5 678.49L718.5 678.49L719.5 678.45L720.5 678.49L721.5 678.56L722.5 678.54L723.5 678.56L724.5 678.53L725.5 678.41L726.5 678.52L727.5 678.59L728.5 678.51L729.5 678.44L730.5 678.52L731.5 678.77L732.5 679.51L733.5 679.82L734.5 680.07L735.5 680.26L736.5 680.28L737.5 680.26L738.5 680.30L739.5 680.33L740.5 680.34L741.5 680.15L742.5 680.20L743.5 680.15L744.5 680.24L745.5 680.15L746.5 680.17L747.5 680.22L748.5 680.23L749.5 680.24L750.5 680.29L751.5 680.26L752.5 680.20L753.5 680.30L754.5 680.17L755.5 680.24L756.5 680.22L757.5 680.18L758.5 680.21L759.5 680.31L760.5 680.29L761.5 680.34L762.5 680.33L763.5 680.15L764.5 680.22L765.5 680.15L766.5 680.18L767.5 680.28L768.5 680.15L769.5 680.16L770.5 680.25L771.5 680.32L772.5 680.28L773.5 680.31L774.5 680.27L775.5 680.32L776.5 680.20L777.5 680.14L778.5 680.30L779.5 680.18L780.5 680.22L781.5 680.24L782.5 680.16L783.5 680.26L784.5 680.18L785.5 680.33L786.5 680.15L787.5 680.30L788.5 680.34L789.5 680.16L790.5 680.20L791.5 680.21L792.5 680.19L793.5 680.26L794.5 680.32L795.5 680.28L796.5 680.15L797.5 680.14L798.5 680.29L799.5 680.25L800.5 680.25L801.5 680.16L802.5 680.34L803.5 680.17L804.5 680.29L805.5 680.23L806.5 680.31L807.5 680.32L808.5 680.16L809.5 680.24L810.5 680.15L811.5 680.17L812.5 680.19L813.5 680.33L814.5 680.22L815.5 680.14L816.5 680.24L817.5 680.33L818.5 680.30L819.5 680.14L820.5 680.14L821.5 680.29L822.5 680.28L823.5 680.20L824.5 680.24L825.5 680.30L826.5 680.14L827.5 680.22L828.5 680.27L829.5 680.34L830.5 680.24L831.5 680.19L832.5 680.30L833.5 680.32L834.5 680.20L835.5 680.16L836.5 680.26L837.5 680.25L838.5 680.21L839.5 680.24L840.5 680.31L841.5 680.29L842.5 680.30L843.5 680.30L844.5 680.32L845.5 680.26L846.5 680.30L847.5 680.17L848.5 680.28L849.5 680.15L850.5 680.18L851.5 680.29L852.5 680.31L853.5 680.23L854.5 680.25L855.5 680.23L856.5 680.32L857.5 680.23L858.5 680.19L859.5 680.25L860.5 680.29L861.5 680.16L862.5 680.28L863.5 680.14L864.5 680.20L865.5 680.34L866.5 680.25L867.5 680.31L868.5 680.18L869.5 680.26L870.5 680.32L871.5 680.15L872.5 680.18L873.5 680.22L874.5 680.23L875.5 680.33L876.5 680.14L877.5 680.28L878.5 680.24L879.5 680.24L880.5 680.25L881.5 680.34L882.5 680.16L883.5 680.24L884.5 680.26L885.5 680.17L886.5 680.17L887.5 680.20L888.5 680.16L889.5 680.27L890.5 680.32L891.5 680.27L892.5 680.22L893.5 680.18L894.5 680.19L895.5 680.21L896.5 680.22L897.5 680.21L898.5 680.23L899.5 680.34L900.5 680.23L901.5 680.28L902.5 680.33L903.5 680.22L904.5 680.17L905.5 680.28L906.5 680.21L907.5 680.21L908.5 679.55L909.5 678.86L910.5 678.90L911.5 679.67L912.5 680.22L913.5 680.27L914.5 680.26L915.5 680.21L916.5 680.31L917.5 680.21L918.5 680.15L919.5 680.32L920.5 680.17L921.5 680.20L922.5 680.26L923.5 680.19L924.5 680.32L925.5 680.31L926.5 680.14L927.5 680.22L928.5 680.31L929.5 680.31L930.5 680.25L931.5 680.23L932.5 680.14L933.5 680.30L934.5 680.21L935.5 680.25L936.5 680.23L937.5 680.15L938.5 680.32L939.5 680.17L940.5 679.21L941.5 678.33L942.5 678.36L943.5 678.23L944.5 680.17L945.5 680.27L946.5 680.31L947.5 680.23L948.5 680.21L949.5 680.27L950.5 680.26L951.5 680.32L952.5 680.11L953.5 678.87L954.5 678.15L955.5 677.88L956.5 678.06L957.5 678.01L958.5 678.07L959.5 678.06L960.5 677.97L961.5 678.07L962.5 678.01L963.5 678.11L964.5 678.03L965.5 678.67L966.5 678.72L967.5 678.77L968.5 678.80L969.5 678.75L970.5 678.22L971.5 678.14L972.5 678.08L973.5 678.07L974.5 678.16L975.5 678.05L976.5 677.99L977.5 678.16L978.5 678.21L979.5 678.13L980.5 678.11L981.5 678.01L982.5 678.02L983.5 678.06L984.5 678.03L985.5 678.07L986.5 678.16L987.5 678.20L988.5 678.14L989.5 678.10L990.5 678.19L991.5 678.17L992.5 678.23L993.5 678.25L994.5 678.21L995.5 678.09L996.5 678.25L997.5 678.24L998.5 678.20L999.5 678.09L1000.5 678.24L1001.5 678.28L1002.5 678.28L1003.5 678.23L1004.5 678.30" stroke="#00eeee" stroke-width="1.35" fill="none"/>
<path d="M680.5 683.5L680.5 683.50L681.5 683.50L682.5 683.50L683.5 683.50L684.5 683.50L685.5 683.50L686.5 683.50L687.5 683.50L688.5 683.50L689.5 683.50L690.5 683.50L691.5 683.50L692.5 683.50L693.5 683.50L694.5 683.50L695.5 683.50L696.5 683.50L697.5 683.50L698.5 683.50L699.5 683.50L700.5 683.50L701.5 683.50L702.5 683.50L703.5 683.50L704.5 683.50L705.5 683.50L706.5 683.50L707.5 683.50L708.5 683.50L709.5 683.50L710.5 683.50L711.5 683.50L712.5 683.50L713.5 683.50L714.5 683.50L715.5 683.50L716.5 683.50L717.5 683.50L718.5 683.50L719.5 683.50L720.5 683.50L721.5 683.50L722.5 683.50L723.5 683.50L724.5 683.50L725.5 683.50L726.5 683.50L727.5 683.50L728.5 683.50L729.5 683.50L730.5 683.50L731.5 683.50L732.5 683.50L733.5 683.50L734.5 683.50L735.5 683.50L736.5 683.50L737.5 683.50L738.5 683.50L739.5 683.50L740.5 683.50L741.5 683.50L742.5 683.50L743.5 683.50L744.5 683.50L745.5 683.50L746.5 683.50L747.5 683.50L748.5 683.50L749.5 683.50L750.5 683.50L751.5 683.50L752.5 683.50L753.5 683.50L754.5 683.50L755.5 683.50L756.5 683.50L757.5 683.50L758.5 683.50L759.5 683.50L760.5 683.50L761.5 683.50L762.5 683.50L763.5 683.50L764.5 683.50L765.5 683.50L766.5 683.50L767.5 683.50L768.5 683.50L769.5 683.50L770.5 683.50L771.5 683.50L772.5 683.50L773.5 683.50L774.5 683.50L775.5 683.50L776.5 683.50L777.5 683.50L778.5 683.50L779.5 683.50L780.5 683.50L781.5 683.50L782.5 683.50L783.5 683.50L784.5 683.50L785.5 683.50L786.5 683.50L787.5 683.50L788.5 683.50L789.5 683.50L790.5 683.50L791.5 683.50L792.5 683.50L793.5 683.50L794.5 683.50L795.5 683.50L796.5 683.50L797.5 683.50L798.5 683.50L799.5 683.50L800.5 683.50L801.5 683.50L802.5 683.50L803.5 683.50L804.5 683.50L805.5 683.50L806.5 683.50L807.5 683.50L808.5 683.50L809.5 683.50L810.5 683.50L811.5 683.50L812.5 683.50L813.5 683.50L814.5 683.50L815.5 683.50L816.5 683.50L817.5 683.50L818.5 683.50L819.5 683.50L820.5 683.50L821.5 683.50L822.5 683.50L823.5 683.50L824.5 683.50L825.5 683.50L826.5 683.50L827.5 683.50L828.5 683.50L829.5 683.50L830.5 683.50L831.5 683.50L832.5 683.50L833.5 683.50L834.5 683.50L835.5 683.50L836.5 683.50L837.5 683.50L838.5 683.50L839.5 683.50L840.5 683.50L841.5 683.50L842.5 683.50L843.5 683.50L844.5 683.50L845.5 683.50L846.5 683.50L847.5 683.50L848.5 683.50L849.5 683.50L850.5 683.50L851.5 683.50L852.5 683.50L853.5 683.50L854.5 683.50L855.5 683.50L856.5 683.50L857.5 683.50L858.5 683.50L859.5 683.50L860.5 683.50L861.5 683.50L862.5 683.50L863.5 683.50L864.5 683.50L865.5 683.50L866.5 683.50L867.5 683.50L868.5 683.50L869.5 683.50L870.5 683.50L871.5 683.50L872.5 683.50L873.5 683.50L874.5 683.50L875.5 683.50L876.5 683.50L877.5 683.50L878.5 683.50L879.5 683.50L880.5 683.50L881.5 683.50L882.5 683.50L883.5 683.50L884.5 683.50L885.5 683.50L886.5 683.50L887.5 683.50L888.5 683.50L889.5 683.50L890.5 683.50L891.5 683.50L892.5 683.50L893.5 683.50L894.5 683.50L895.5 683.50L896.5 683.50L897.5 683.50L898.5 683.50L899.5 683.50L900.5 683.50L901.5 683.50L902.5 683.50L903.5 683.50L904.5 683.50L905.5 683.50L906.5 683.50L907.5 683.50L908.5 682.62L909.5 681.74L910.5 681.74L911.5 682.62L912.5 683.50L913.5 683.50L914.5 683.50L915.5 683.50L916.5 683.50L917.5 683.50L918.5 683.50L919.5 683.50L920.5 683.50L921.5 683.50L922.5 683.50L923.5 683.50L924.5 683.50L925.5 683.50L926.5 683.50L927.5 683.50L928.5 683.50L929.5 683.50L930.5 683.50L931.5 683.50L932.5 683.50L933.5 683.50L934.5 683.50L935.5 683.50L936.5 683.50L937.5 683.50L938.5 683.50L939.5 683.50L940.5 682.86L941.5 682.22L942.5 682.22L943.5 682.22L944.5 683.50L945.5 683.50L946.5 683.50L947.5 683.50L948.5 683.50L949.5 683.50L950.5 683.50L951.5 683.50L952.5 683.50L953.5 683.50L954.5 683.50L955.5 683.50L956.5 683.50L957.5 683.50L958.5 683.50L959.5 683.50L960.5 683.50L961.5 683.50L962.5 683.50L963.5 683.50L964.5 683.50L965.5 683.50L966.5 683.50L967.5 683.50L968.5 683.50L969.5 683.50L970.5 683.50L971.5 683.50L972.5 683.50L973.5 683.50L974.5 683.50L975.5 683.50L976.5 683.50L977.5 683.50L978.5 683.50L979.5 683.50L980.5 683.50L981.5 683.50L982.5 683.50L983.5 683.50L984.5 683.50L985.5 683.50L986.5 683.50L987.5 683.50L988.5 683.50L989.5 683.50L990.5 683.50L991.5 683.50L992.5 683.50L993.5 683.50L994.5 683.50L995.5 683.50L996.5 683.50L997.5 683.50L998.5 683.50L999.5 683.50L1000.5 683.50L1001.5 683.50L1002.5 683.50L1003.5 683.50L1004.5 683.50L1004.5 683.5 Z" fill="#ee44ee"/>
<path d="M683.5 533V684M697.5 533V684M710.5 533V684M737.5 533V684M751.5 533V684M764.5 533V684M778.5 533V684M792.5 533V684M819.5 533V684M832.5 533V684M846.5 533V684M859.5 533V684M873.5 533V684M900.5 533V684M913.5 533V684M927.5 533V684M940.5 533V684M954.5 533V684M981.5 533V684M995.5 533V684" stroke="#808020" stroke-opacity="0.44" stroke-width="1" stroke-dasharray="1 1" fill="none" shape-rendering="crispEdges"/>
<path d="M724.5 533V684M805.5 533V684M886.5 533V684M968.5 533V684" stroke="#80c080" stroke-opacity="0.68" stroke-width="1" stroke-dasharray="1 1" fill="none" shape-rendering="crispEdges"/>
<path d="M679 540.5H1006M679 555.5H1006M679 570.5H1006M679 585.5H1006M679 600.5H1006M679 615.5H1006M679 630.5H1006M679 645.5H1006M679 660.5H1006M679 675.5H1006" stroke="#808020" stroke-opacity="0.44" stroke-width="1" stroke-dasharray="1 1" fill="none" shape-rendering="crispEdges"/>
<path d="M680 533.5H1006M680 548.5H1006M680 563.5H1006M680 578.5H1006M680 593.5H1006M680 608.5H1006M680 623.5H1006M680 638.5H1006M680 653.5H1006M680 668.5H1006M680 683.5H1006" stroke="#80c080" stroke-opacity="0.68" stroke-width="1" stroke-dasharray="1 1" fill="none" shape-rendering="crispEdges"/>
<path d="M676 683.5H1009M680.5 529V687" stroke="#101010" stroke-opacity="0.55" stroke-width="1" fill="none" shape-rendering="crispEdges"/>
<path d="M683.5 531V533M683.5 684V686M697.5 531V533M697.5 684V686M710.5 531V533M710.5 684V686M737.5 531V533M737.5 684V686M751.5 531V533M751.5 684V686M764.5 531V533M764.5 684V686M778.5 531V533M778.5 684V686M792.5 531V533M792.5 684V686M819.5 531V533M819.5 684V686M832.5 531V533M832.5 684V686M846.5 531V533M846.5 684V686M859.5 531V533M859.5 684V686M873.5 531V533M873.5 684V686M900.5 531V533M900.5 684V686M913.5 531V533M913.5 684V686M927.5 531V533M927.5 684V686M940.5 531V533M940.5 684V686M954.5 531V533M954.5 684V686M981.5 531V533M981.5 684V686M995.5 531V533M995.5 684V686" stroke="#808020" stroke-opacity="0.4" stroke-width="1" fill="none" shape-rendering="crispEdges"/>
<path d="M724.5 531V533M724.5 684V686M805.5 531V533M805.5 684V686M886.5 531V533M886.5 684V686M968.5 531V533M968.5 684V686" stroke="#80c080" stroke-opacity="0.66" stroke-width="1" fill="none" shape-rendering="crispEdges"/>
<path d="M678 540.5H680M1006 540.5H1008M678 555.5H680M1006 555.5H1008M678 570.5H680M1006 570.5H1008M678 585.5H680M1006 585.5H1008M678 600.5H680M1006 600.5H1008M678 615.5H680M1006 615.5H1008M678 630.5H680M1006 630.5H1008M678 645.5H680M1006 645.5H1008M678 660.5H680M1006 660.5H1008M678 675.5H680M1006 675.5H1008" stroke="#808020" stroke-opacity="0.4" stroke-width="1" fill="none" shape-rendering="crispEdges"/>
<path d="M678 533.5H680M1006 533.5H1008M678 548.5H680M1006 548.5H1008M678 563.5H680M1006 563.5H1008M678 578.5H680M1006 578.5H1008M678 593.5H680M1006 593.5H1008M678 608.5H680M1006 608.5H1008M678 623.5H680M1006 623.5H1008M678 638.5H680M1006 638.5H1008M678 653.5H680M1006 653.5H1008M678 668.5H680M1006 668.5H1008M678 683.5H680M1006 683.5H1008" stroke="#80c080" stroke-opacity="0.66" stroke-width="1" fill="none" shape-rendering="crispEdges"/>
<path d="M677.2 530.6 L680.3 526.2 L683.4 530.6 Z" fill="#fff"/>
<path d="M1007.4 680.2 L1011.8 683.2 L1007.4 686.2 Z" fill="#fff"/>
<rect x="628.5" y="704.5" width="7" height="7" fill="#4444ee" stroke="#8c8c8c" stroke-width="1"/>
<rect x="628.5" y="716.5" width="7" height="7" fill="#eeee44" stroke="#8c8c8c" stroke-width="1"/>
<rect x="628.5" y="728.5" width="7" height="7" fill="#44eeee" stroke="#8c8c8c" stroke-width="1"/>
<rect x="628.5" y="740.5" width="7" height="7" fill="#ee44ee" stroke="#8c8c8c" stroke-width="1"/>
<rect x="628.5" y="752.5" width="7" height="7" fill="#888888" stroke="#8c8c8c" stroke-width="1"/>
</g>
</svg>
<svg width="1237" height="751" viewBox="0 0 1237 751" style="will-change:transform">
<clipPath id="cc2"><rect x="4" y="113" width="1214" height="634"/></clipPath>
<g clip-path="url(#cc2)">
<text xml:space="preserve" x="246.9" y="184" font-family='"Liberation Mono", monospace' font-size="9.998" font-weight="normal" fill="#c2c2c2" text-anchor="end" >100</text>
<text xml:space="preserve" x="246.9" y="199" font-family='"Liberation Mono", monospace' font-size="9.998" font-weight="normal" fill="#c2c2c2" text-anchor="end" >90</text>
<text xml:space="preserve" x="246.9" y="214" font-family='"Liberation Mono", monospace' font-size="9.998" font-weight="normal" fill="#c2c2c2" text-anchor="end" >80</text>
<text xml:space="preserve" x="246.9" y="229" font-family='"Liberation Mono", monospace' font-size="9.998" font-weight="normal" fill="#c2c2c2" text-anchor="end" >70</text>
<text xml:space="preserve" x="246.9" y="244" font-family='"Liberation Mono", monospace' font-size="9.998" font-weight="normal" fill="#c2c2c2" text-anchor="end" >60</text>
<text xml:space="preserve" x="246.9" y="259" font-family='"Liberation Mono", monospace' font-size="9.998" font-weight="normal" fill="#c2c2c2" text-anchor="end" >50</text>
<text xml:space="preserve" x="246.9" y="274" font-family='"Liberation Mono", monospace' font-size="9.998" font-weight="normal" fill="#c2c2c2" text-anchor="end" >40</text>
<text xml:space="preserve" x="246.9" y="289" font-family='"Liberation Mono", monospace' font-size="9.998" font-weight="normal" fill="#c2c2c2" text-anchor="end" >30</text>
<text xml:space="preserve" x="246.9" y="304" font-family='"Liberation Mono", monospace' font-size="9.998" font-weight="normal" fill="#c2c2c2" text-anchor="end" >20</text>
<text xml:space="preserve" x="246.9" y="319" font-family='"Liberation Mono", monospace' font-size="9.998" font-weight="normal" fill="#c2c2c2" text-anchor="end" >10</text>
<text xml:space="preserve" x="246.9" y="334" font-family='"Liberation Mono", monospace' font-size="9.998" font-weight="normal" fill="#c2c2c2" text-anchor="end" >0</text>
<text xml:space="preserve" x="315.9" y="343" font-family='"Liberation Mono", monospace' font-size="9.998" font-weight="normal" fill="#c2c2c2" text-anchor="middle" >18:00</text>
<text xml:space="preserve" x="428.9" y="343" font-family='"Liberation Mono", monospace' font-size="9.998" font-weight="normal" fill="#c2c2c2" text-anchor="middle" >00:00</text>
<text xml:space="preserve" x="540.9" y="343" font-family='"Liberation Mono", monospace' font-size="9.998" font-weight="normal" fill="#c2c2c2" text-anchor="middle" >06:00</text>
<text xml:space="preserve" x="653.9" y="343" font-family='"Liberation Mono", monospace' font-size="9.998" font-weight="normal" fill="#c2c2c2" text-anchor="middle" >12:00</text>
<text xml:space="preserve" x="460.0" y="176" font-family='"Liberation Mono", monospace' font-size="13.331" font-weight="normal" fill="#c2c2c2" text-anchor="middle" >Kernel usage  (1day)</text>
<text transform="translate(199.9,254.4) rotate(-90)" font-family='"Liberation Mono", monospace' font-size="11.665" fill="#c2c2c2" text-anchor="middle">Percent (%)</text>
<text transform="translate(721.6,157) rotate(90)" font-family='"Liberation Mono", monospace' font-size="8.6" fill="#4e4e4e" textLength="110" lengthAdjust="spacing">RRDTOOL / TOBI OETIKER</text>
<text xml:space="preserve" x="213.5" y="358" font-family='"Liberation Mono", monospace' font-size="9.998" font-weight="normal" fill="#c2c2c2" text-anchor="start" >user</text>
<text xml:space="preserve" x="287.2" y="358" font-family='"Liberation Mono", monospace' font-size="9.998" font-weight="normal" fill="#c2c2c2" text-anchor="start" >Current:  8.5%</text>
<text xml:space="preserve" x="409" y="358" font-family='"Liberation Mono", monospace' font-size="9.998" font-weight="normal" fill="#c2c2c2" text-anchor="start" >Average:  7.4%</text>
<text xml:space="preserve" x="530.8" y="358" font-family='"Liberation Mono", monospace' font-size="9.998" font-weight="normal" fill="#c2c2c2" text-anchor="start" >Min:  4.3%</text>
<text xml:space="preserve" x="628.6" y="358" font-family='"Liberation Mono", monospace' font-size="9.998" font-weight="normal" fill="#c2c2c2" text-anchor="start" >Max: 23.0%</text>
<text xml:space="preserve" x="213.5" y="370" font-family='"Liberation Mono", monospace' font-size="9.998" font-weight="normal" fill="#c2c2c2" text-anchor="start" >nice</text>
<text xml:space="preserve" x="287.2" y="370" font-family='"Liberation Mono", monospace' font-size="9.998" font-weight="normal" fill="#c2c2c2" text-anchor="start" >Current:  0.0%</text>
<text xml:space="preserve" x="409" y="370" font-family='"Liberation Mono", monospace' font-size="9.998" font-weight="normal" fill="#c2c2c2" text-anchor="start" >Average:  0.0%</text>
<text xml:space="preserve" x="530.8" y="370" font-family='"Liberation Mono", monospace' font-size="9.998" font-weight="normal" fill="#c2c2c2" text-anchor="start" >Min:  0.0%</text>
<text xml:space="preserve" x="628.6" y="370" font-family='"Liberation Mono", monospace' font-size="9.998" font-weight="normal" fill="#c2c2c2" text-anchor="start" >Max:  0.1%</text>
<text xml:space="preserve" x="213.5" y="382" font-family='"Liberation Mono", monospace' font-size="9.998" font-weight="normal" fill="#c2c2c2" text-anchor="start" >system</text>
<text xml:space="preserve" x="287.2" y="382" font-family='"Liberation Mono", monospace' font-size="9.998" font-weight="normal" fill="#c2c2c2" text-anchor="start" >Current:  3.1%</text>
<text xml:space="preserve" x="409" y="382" font-family='"Liberation Mono", monospace' font-size="9.998" font-weight="normal" fill="#c2c2c2" text-anchor="start" >Average:  2.5%</text>
<text xml:space="preserve" x="530.8" y="382" font-family='"Liberation Mono", monospace' font-size="9.998" font-weight="normal" fill="#c2c2c2" text-anchor="start" >Min:  1.7%</text>
<text xml:space="preserve" x="628.6" y="382" font-family='"Liberation Mono", monospace' font-size="9.998" font-weight="normal" fill="#c2c2c2" text-anchor="start" >Max:  5.8%</text>
<text xml:space="preserve" x="213.5" y="394" font-family='"Liberation Mono", monospace' font-size="9.998" font-weight="normal" fill="#c2c2c2" text-anchor="start" >I/O wait</text>
<text xml:space="preserve" x="287.2" y="394" font-family='"Liberation Mono", monospace' font-size="9.998" font-weight="normal" fill="#c2c2c2" text-anchor="start" >Current:  0.1%</text>
<text xml:space="preserve" x="409" y="394" font-family='"Liberation Mono", monospace' font-size="9.998" font-weight="normal" fill="#c2c2c2" text-anchor="start" >Average:  0.1%</text>
<text xml:space="preserve" x="530.8" y="394" font-family='"Liberation Mono", monospace' font-size="9.998" font-weight="normal" fill="#c2c2c2" text-anchor="start" >Min:  0.0%</text>
<text xml:space="preserve" x="628.6" y="394" font-family='"Liberation Mono", monospace' font-size="9.998" font-weight="normal" fill="#c2c2c2" text-anchor="start" >Max:  1.1%</text>
<text xml:space="preserve" x="213.5" y="406" font-family='"Liberation Mono", monospace' font-size="9.998" font-weight="normal" fill="#c2c2c2" text-anchor="start" >IRQ</text>
<text xml:space="preserve" x="287.2" y="406" font-family='"Liberation Mono", monospace' font-size="9.998" font-weight="normal" fill="#c2c2c2" text-anchor="start" >Current:  0.0%</text>
<text xml:space="preserve" x="409" y="406" font-family='"Liberation Mono", monospace' font-size="9.998" font-weight="normal" fill="#c2c2c2" text-anchor="start" >Average:  0.0%</text>
<text xml:space="preserve" x="530.8" y="406" font-family='"Liberation Mono", monospace' font-size="9.998" font-weight="normal" fill="#c2c2c2" text-anchor="start" >Min:  0.0%</text>
<text xml:space="preserve" x="628.6" y="406" font-family='"Liberation Mono", monospace' font-size="9.998" font-weight="normal" fill="#c2c2c2" text-anchor="start" >Max:  0.0%</text>
<text xml:space="preserve" x="213.5" y="418" font-family='"Liberation Mono", monospace' font-size="9.998" font-weight="normal" fill="#c2c2c2" text-anchor="start" >softIRQ</text>
<text xml:space="preserve" x="287.2" y="418" font-family='"Liberation Mono", monospace' font-size="9.998" font-weight="normal" fill="#c2c2c2" text-anchor="start" >Current:  2.2%</text>
<text xml:space="preserve" x="409" y="418" font-family='"Liberation Mono", monospace' font-size="9.998" font-weight="normal" fill="#c2c2c2" text-anchor="start" >Average:  2.1%</text>
<text xml:space="preserve" x="530.8" y="418" font-family='"Liberation Mono", monospace' font-size="9.998" font-weight="normal" fill="#c2c2c2" text-anchor="start" >Min:  1.2%</text>
<text xml:space="preserve" x="628.6" y="418" font-family='"Liberation Mono", monospace' font-size="9.998" font-weight="normal" fill="#c2c2c2" text-anchor="start" >Max:  2.6%</text>
<text xml:space="preserve" x="213.5" y="430" font-family='"Liberation Mono", monospace' font-size="9.998" font-weight="normal" fill="#c2c2c2" text-anchor="start" >steal</text>
<text xml:space="preserve" x="287.2" y="430" font-family='"Liberation Mono", monospace' font-size="9.998" font-weight="normal" fill="#c2c2c2" text-anchor="start" >Current:  0.0%</text>
<text xml:space="preserve" x="409" y="430" font-family='"Liberation Mono", monospace' font-size="9.998" font-weight="normal" fill="#c2c2c2" text-anchor="start" >Average:  0.0%</text>
<text xml:space="preserve" x="530.8" y="430" font-family='"Liberation Mono", monospace' font-size="9.998" font-weight="normal" fill="#c2c2c2" text-anchor="start" >Min:  0.0%</text>
<text xml:space="preserve" x="628.6" y="430" font-family='"Liberation Mono", monospace' font-size="9.998" font-weight="normal" fill="#c2c2c2" text-anchor="start" >Max:  0.0%</text>
<text xml:space="preserve" x="213.5" y="442" font-family='"Liberation Mono", monospace' font-size="9.998" font-weight="normal" fill="#c2c2c2" text-anchor="start" >guest</text>
<text xml:space="preserve" x="287.2" y="442" font-family='"Liberation Mono", monospace' font-size="9.998" font-weight="normal" fill="#c2c2c2" text-anchor="start" >Current:  0.0%</text>
<text xml:space="preserve" x="409" y="442" font-family='"Liberation Mono", monospace' font-size="9.998" font-weight="normal" fill="#c2c2c2" text-anchor="start" >Average:  0.0%</text>
<text xml:space="preserve" x="530.8" y="442" font-family='"Liberation Mono", monospace' font-size="9.998" font-weight="normal" fill="#c2c2c2" text-anchor="start" >Min:  0.0%</text>
<text xml:space="preserve" x="628.6" y="442" font-family='"Liberation Mono", monospace' font-size="9.998" font-weight="normal" fill="#c2c2c2" text-anchor="start" >Max:  0.0%</text>
<text xml:space="preserve" x="798.8" y="181" font-family='"Liberation Mono", monospace' font-size="9.998" font-weight="normal" fill="#c2c2c2" text-anchor="end" >20 k</text>
<text xml:space="preserve" x="798.8" y="214" font-family='"Liberation Mono", monospace' font-size="9.998" font-weight="normal" fill="#c2c2c2" text-anchor="end" >10 k</text>
<text xml:space="preserve" x="786.8" y="247" font-family='"Liberation Mono", monospace' font-size="9.998" font-weight="normal" fill="#c2c2c2" text-anchor="end" >0</text>
<text xml:space="preserve" x="833.7" y="256" font-family='"Liberation Mono", monospace' font-size="9.998" font-weight="normal" fill="#c2c2c2" text-anchor="middle" >18:00</text>
<text xml:space="preserve" x="883.7" y="256" font-family='"Liberation Mono", monospace' font-size="9.998" font-weight="normal" fill="#c2c2c2" text-anchor="middle" >00:00</text>
<text xml:space="preserve" x="933.7" y="256" font-family='"Liberation Mono", monospace' font-size="9.998" font-weight="normal" fill="#c2c2c2" text-anchor="middle" >06:00</text>
<text xml:space="preserve" x="983.7" y="256" font-family='"Liberation Mono", monospace' font-size="9.998" font-weight="normal" fill="#c2c2c2" text-anchor="middle" >12:00</text>
<text xml:space="preserve" x="888.2" y="173" font-family='"Liberation Mono", monospace' font-size="11.665" font-weight="normal" fill="#c2c2c2" text-anchor="middle" >Context switches and forks  (1day)</text>
<text transform="translate(754.6,210) rotate(-90)" font-family='"Liberation Mono", monospace' font-size="9.998" fill="#c2c2c2" text-anchor="middle">CS &amp; forks/s</text>
<text transform="translate(1024.4,157) rotate(90)" font-family='"Liberation Mono", monospace' font-size="8.6" fill="#4e4e4e" textLength="110" lengthAdjust="spacing">RRDTOOL / TOBI OETIKER</text>
<text xml:space="preserve" x="767.6" y="271" font-family='"Liberation Mono", monospace' font-size="9.998" font-weight="normal" fill="#c2c2c2" text-anchor="start" >Context switches</text>
<text xml:space="preserve" x="907.5" y="271" font-family='"Liberation Mono", monospace' font-size="9.998" font-weight="normal" fill="#c2c2c2" text-anchor="start" >Current:</text>
<text xml:space="preserve" x="997.3" y="271" font-family='"Liberation Mono", monospace' font-size="9.998" font-weight="normal" fill="#c2c2c2" text-anchor="end" >10407</text>
<text xml:space="preserve" x="767.6" y="283" font-family='"Liberation Mono", monospace' font-size="9.998" font-weight="normal" fill="#c2c2c2" text-anchor="start" >Forks</text>
<text xml:space="preserve" x="907.5" y="283" font-family='"Liberation Mono", monospace' font-size="9.998" font-weight="normal" fill="#c2c2c2" text-anchor="start" >Current:</text>
<text xml:space="preserve" x="997.3" y="283" font-family='"Liberation Mono", monospace' font-size="9.998" font-weight="normal" fill="#c2c2c2" text-anchor="end" >4</text>
<text xml:space="preserve" x="798.8" y="321" font-family='"Liberation Mono", monospace' font-size="9.998" font-weight="normal" fill="#c2c2c2" text-anchor="end" >100</text>
<text xml:space="preserve" x="798.8" y="354" font-family='"Liberation Mono", monospace' font-size="9.998" font-weight="normal" fill="#c2c2c2" text-anchor="end" >50</text>
<text xml:space="preserve" x="798.8" y="387" font-family='"Liberation Mono", monospace' font-size="9.998" font-weight="normal" fill="#c2c2c2" text-anchor="end" >0</text>
<text xml:space="preserve" x="833.7" y="396" font-family='"Liberation Mono", monospace' font-size="9.998" font-weight="normal" fill="#c2c2c2" text-anchor="middle" >18:00</text>
<text xml:space="preserve" x="883.7" y="396" font-family='"Liberation Mono", monospace' font-size="9.998" font-weight="normal" fill="#c2c2c2" text-anchor="middle" >00:00</text>
<text xml:space="preserve" x="933.7" y="396" font-family='"Liberation Mono", monospace' font-size="9.998" font-weight="normal" fill="#c2c2c2" text-anchor="middle" >06:00</text>
<text xml:space="preserve" x="983.7" y="396" font-family='"Liberation Mono", monospace' font-size="9.998" font-weight="normal" fill="#c2c2c2" text-anchor="middle" >12:00</text>
<text xml:space="preserve" x="888.2" y="313" font-family='"Liberation Mono", monospace' font-size="11.665" font-weight="normal" fill="#c2c2c2" text-anchor="middle" >VFS usage  (1day)</text>
<text transform="translate(754.6,350) rotate(-90)" font-family='"Liberation Mono", monospace' font-size="9.998" fill="#c2c2c2" text-anchor="middle">Percent (%)</text>
<text transform="translate(1024.4,297) rotate(90)" font-family='"Liberation Mono", monospace' font-size="8.6" fill="#4e4e4e" textLength="110" lengthAdjust="spacing">RRDTOOL / TOBI OETIKER</text>
<text xml:space="preserve" x="767.6" y="411" font-family='"Liberation Mono", monospace' font-size="9.998" font-weight="normal" fill="#c2c2c2" text-anchor="start" >inode</text>
<text xml:space="preserve" x="907.5" y="411" font-family='"Liberation Mono", monospace' font-size="9.998" font-weight="normal" fill="#c2c2c2" text-anchor="start" >Current:</text>
<text xml:space="preserve" x="997.3" y="411" font-family='"Liberation Mono", monospace' font-size="9.998" font-weight="normal" fill="#c2c2c2" text-anchor="end" >70.6%</text>
<text xml:space="preserve" x="767.6" y="423" font-family='"Liberation Mono", monospace' font-size="9.998" font-weight="normal" fill="#c2c2c2" text-anchor="start" >dentry</text>
<text xml:space="preserve" x="907.5" y="423" font-family='"Liberation Mono", monospace' font-size="9.998" font-weight="normal" fill="#c2c2c2" text-anchor="start" >Current:</text>
<text xml:space="preserve" x="997.3" y="423" font-family='"Liberation Mono", monospace' font-size="9.998" font-weight="normal" fill="#c2c2c2" text-anchor="end" >54.0%</text>
<text xml:space="preserve" x="767.6" y="435" font-family='"Liberation Mono", monospace' font-size="9.998" font-weight="normal" fill="#c2c2c2" text-anchor="start" >file</text>
<text xml:space="preserve" x="907.5" y="435" font-family='"Liberation Mono", monospace' font-size="9.998" font-weight="normal" fill="#c2c2c2" text-anchor="start" >Current:</text>
<text xml:space="preserve" x="997.3" y="435" font-family='"Liberation Mono", monospace' font-size="9.998" font-weight="normal" fill="#c2c2c2" text-anchor="end" >0.0%</text>
<text xml:space="preserve" x="245.9" y="537" font-family='"Liberation Mono", monospace' font-size="9.998" font-weight="normal" fill="#c2c2c2" text-anchor="end" >100</text>
<text xml:space="preserve" x="245.9" y="552" font-family='"Liberation Mono", monospace' font-size="9.998" font-weight="normal" fill="#c2c2c2" text-anchor="end" >90</text>
<text xml:space="preserve" x="245.9" y="567" font-family='"Liberation Mono", monospace' font-size="9.998" font-weight="normal" fill="#c2c2c2" text-anchor="end" >80</text>
<text xml:space="preserve" x="245.9" y="582" font-family='"Liberation Mono", monospace' font-size="9.998" font-weight="normal" fill="#c2c2c2" text-anchor="end" >70</text>
<text xml:space="preserve" x="245.9" y="597" font-family='"Liberation Mono", monospace' font-size="9.998" font-weight="normal" fill="#c2c2c2" text-anchor="end" >60</text>
<text xml:space="preserve" x="245.9" y="612" font-family='"Liberation Mono", monospace' font-size="9.998" font-weight="normal" fill="#c2c2c2" text-anchor="end" >50</text>
<text xml:space="preserve" x="245.9" y="627" font-family='"Liberation Mono", monospace' font-size="9.998" font-weight="normal" fill="#c2c2c2" text-anchor="end" >40</text>
<text xml:space="preserve" x="245.9" y="642" font-family='"Liberation Mono", monospace' font-size="9.998" font-weight="normal" fill="#c2c2c2" text-anchor="end" >30</text>
<text xml:space="preserve" x="245.9" y="657" font-family='"Liberation Mono", monospace' font-size="9.998" font-weight="normal" fill="#c2c2c2" text-anchor="end" >20</text>
<text xml:space="preserve" x="245.9" y="672" font-family='"Liberation Mono", monospace' font-size="9.998" font-weight="normal" fill="#c2c2c2" text-anchor="end" >10</text>
<text xml:space="preserve" x="245.9" y="687" font-family='"Liberation Mono", monospace' font-size="9.998" font-weight="normal" fill="#c2c2c2" text-anchor="end" >0</text>
<text xml:space="preserve" x="297.9" y="696" font-family='"Liberation Mono", monospace' font-size="9.998" font-weight="normal" fill="#c2c2c2" text-anchor="middle" >18:00</text>
<text xml:space="preserve" x="378.9" y="696" font-family='"Liberation Mono", monospace' font-size="9.998" font-weight="normal" fill="#c2c2c2" text-anchor="middle" >00:00</text>
<text xml:space="preserve" x="459.9" y="696" font-family='"Liberation Mono", monospace' font-size="9.998" font-weight="normal" fill="#c2c2c2" text-anchor="middle" >06:00</text>
<text xml:space="preserve" x="541.9" y="696" font-family='"Liberation Mono", monospace' font-size="9.998" font-weight="normal" fill="#c2c2c2" text-anchor="middle" >12:00</text>
<text xml:space="preserve" x="398.4" y="529" font-family='"Liberation Mono", monospace' font-size="11.665" font-weight="normal" fill="#c2c2c2" text-anchor="middle" >Processor 0  (1day)</text>
<text transform="translate(201.9,607.4) rotate(-90)" font-family='"Liberation Mono", monospace' font-size="9.998" fill="#c2c2c2" text-anchor="middle">Percent (%)</text>
<text transform="translate(595.6,513) rotate(90)" font-family='"Liberation Mono", monospace' font-size="8.6" fill="#4e4e4e" textLength="110" lengthAdjust="spacing">RRDTOOL / TOBI OETIKER</text>
<text xml:space="preserve" x="214.5" y="711" font-family='"Liberation Mono", monospace' font-size="9.998" font-weight="normal" fill="#c2c2c2" text-anchor="start" >user</text>
<text xml:space="preserve" x="276" y="711" font-family='"Liberation Mono", monospace' font-size="9.998" font-weight="normal" fill="#c2c2c2" text-anchor="start" >Cur:  9.7%</text>
<text xml:space="preserve" x="362" y="711" font-family='"Liberation Mono", monospace' font-size="9.998" font-weight="normal" fill="#c2c2c2" text-anchor="start" >Avg:  8.3%</text>
<text xml:space="preserve" x="448" y="711" font-family='"Liberation Mono", monospace' font-size="9.998" font-weight="normal" fill="#c2c2c2" text-anchor="start" >Min:  4.9%</text>
<text xml:space="preserve" x="534" y="711" font-family='"Liberation Mono", monospace' font-size="9.998" font-weight="normal" fill="#c2c2c2" text-anchor="start" >Max: 22.5%</text>
<text xml:space="preserve" x="214.5" y="723" font-family='"Liberation Mono", monospace' font-size="9.998" font-weight="normal" fill="#c2c2c2" text-anchor="start" >nice</text>
<text xml:space="preserve" x="276" y="723" font-family='"Liberation Mono", monospace' font-size="9.998" font-weight="normal" fill="#c2c2c2" text-anchor="start" >Cur:  0.0%</text>
<text xml:space="preserve" x="362" y="723" font-family='"Liberation Mono", monospace' font-size="9.998" font-weight="normal" fill="#c2c2c2" text-anchor="start" >Avg:  0.0%</text>
<text xml:space="preserve" x="448" y="723" font-family='"Liberation Mono", monospace' font-size="9.998" font-weight="normal" fill="#c2c2c2" text-anchor="start" >Min:  0.0%</text>
<text xml:space="preserve" x="534" y="723" font-family='"Liberation Mono", monospace' font-size="9.998" font-weight="normal" fill="#c2c2c2" text-anchor="start" >Max:  0.1%</text>
<text xml:space="preserve" x="214.5" y="735" font-family='"Liberation Mono", monospace' font-size="9.998" font-weight="normal" fill="#c2c2c2" text-anchor="start" >system</text>
<text xml:space="preserve" x="276" y="735" font-family='"Liberation Mono", monospace' font-size="9.998" font-weight="normal" fill="#c2c2c2" text-anchor="start" >Cur:  3.3%</text>
<text xml:space="preserve" x="362" y="735" font-family='"Liberation Mono", monospace' font-size="9.998" font-weight="normal" fill="#c2c2c2" text-anchor="start" >Avg:  2.8%</text>
<text xml:space="preserve" x="448" y="735" font-family='"Liberation Mono", monospace' font-size="9.998" font-weight="normal" fill="#c2c2c2" text-anchor="start" >Min:  1.8%</text>
<text xml:space="preserve" x="534" y="735" font-family='"Liberation Mono", monospace' font-size="9.998" font-weight="normal" fill="#c2c2c2" text-anchor="start" >Max:  6.4%</text>
<text xml:space="preserve" x="214.5" y="747" font-family='"Liberation Mono", monospace' font-size="9.998" font-weight="normal" fill="#c2c2c2" text-anchor="start" >I/O wait</text>
<text xml:space="preserve" x="276" y="747" font-family='"Liberation Mono", monospace' font-size="9.998" font-weight="normal" fill="#c2c2c2" text-anchor="start" >Cur:  0.1%</text>
<text xml:space="preserve" x="362" y="747" font-family='"Liberation Mono", monospace' font-size="9.998" font-weight="normal" fill="#c2c2c2" text-anchor="start" >Avg:  0.1%</text>
<text xml:space="preserve" x="448" y="747" font-family='"Liberation Mono", monospace' font-size="9.998" font-weight="normal" fill="#c2c2c2" text-anchor="start" >Min:  0.0%</text>
<text xml:space="preserve" x="534" y="747" font-family='"Liberation Mono", monospace' font-size="9.998" font-weight="normal" fill="#c2c2c2" text-anchor="start" >Max:  1.1%</text>
<text xml:space="preserve" x="214.5" y="759" font-family='"Liberation Mono", monospace' font-size="9.998" font-weight="normal" fill="#c2c2c2" text-anchor="start" >IRQ</text>
<text xml:space="preserve" x="276" y="759" font-family='"Liberation Mono", monospace' font-size="9.998" font-weight="normal" fill="#c2c2c2" text-anchor="start" >Cur:  0.0%</text>
<text xml:space="preserve" x="362" y="759" font-family='"Liberation Mono", monospace' font-size="9.998" font-weight="normal" fill="#c2c2c2" text-anchor="start" >Avg:  0.0%</text>
<text xml:space="preserve" x="448" y="759" font-family='"Liberation Mono", monospace' font-size="9.998" font-weight="normal" fill="#c2c2c2" text-anchor="start" >Min:  0.0%</text>
<text xml:space="preserve" x="534" y="759" font-family='"Liberation Mono", monospace' font-size="9.998" font-weight="normal" fill="#c2c2c2" text-anchor="start" >Max:  0.0%</text>
<text xml:space="preserve" x="672.9" y="537" font-family='"Liberation Mono", monospace' font-size="9.998" font-weight="normal" fill="#c2c2c2" text-anchor="end" >100</text>
<text xml:space="preserve" x="672.9" y="552" font-family='"Liberation Mono", monospace' font-size="9.998" font-weight="normal" fill="#c2c2c2" text-anchor="end" >90</text>
<text xml:space="preserve" x="672.9" y="567" font-family='"Liberation Mono", monospace' font-size="9.998" font-weight="normal" fill="#c2c2c2" text-anchor="end" >80</text>
<text xml:space="preserve" x="672.9" y="582" font-family='"Liberation Mono", monospace' font-size="9.998" font-weight="normal" fill="#c2c2c2" text-anchor="end" >70</text>
<text xml:space="preserve" x="672.9" y="597" font-family='"Liberation Mono", monospace' font-size="9.998" font-weight="normal" fill="#c2c2c2" text-anchor="end" >60</text>
<text xml:space="preserve" x="672.9" y="612" font-family='"Liberation Mono", monospace' font-size="9.998" font-weight="normal" fill="#c2c2c2" text-anchor="end" >50</text>
<text xml:space="preserve" x="672.9" y="627" font-family='"Liberation Mono", monospace' font-size="9.998" font-weight="normal" fill="#c2c2c2" text-anchor="end" >40</text>
<text xml:space="preserve" x="672.9" y="642" font-family='"Liberation Mono", monospace' font-size="9.998" font-weight="normal" fill="#c2c2c2" text-anchor="end" >30</text>
<text xml:space="preserve" x="672.9" y="657" font-family='"Liberation Mono", monospace' font-size="9.998" font-weight="normal" fill="#c2c2c2" text-anchor="end" >20</text>
<text xml:space="preserve" x="672.9" y="672" font-family='"Liberation Mono", monospace' font-size="9.998" font-weight="normal" fill="#c2c2c2" text-anchor="end" >10</text>
<text xml:space="preserve" x="672.9" y="687" font-family='"Liberation Mono", monospace' font-size="9.998" font-weight="normal" fill="#c2c2c2" text-anchor="end" >0</text>
<text xml:space="preserve" x="724.9" y="696" font-family='"Liberation Mono", monospace' font-size="9.998" font-weight="normal" fill="#c2c2c2" text-anchor="middle" >18:00</text>
<text xml:space="preserve" x="805.9" y="696" font-family='"Liberation Mono", monospace' font-size="9.998" font-weight="normal" fill="#c2c2c2" text-anchor="middle" >00:00</text>
<text xml:space="preserve" x="886.9" y="696" font-family='"Liberation Mono", monospace' font-size="9.998" font-weight="normal" fill="#c2c2c2" text-anchor="middle" >06:00</text>
<text xml:space="preserve" x="968.9" y="696" font-family='"Liberation Mono", monospace' font-size="9.998" font-weight="normal" fill="#c2c2c2" text-anchor="middle" >12:00</text>
<text xml:space="preserve" x="825.4" y="529" font-family='"Liberation Mono", monospace' font-size="11.665" font-weight="normal" fill="#c2c2c2" text-anchor="middle" >Processor 1  (1day)</text>
<text transform="translate(628.9,607.4) rotate(-90)" font-family='"Liberation Mono", monospace' font-size="9.998" fill="#c2c2c2" text-anchor="middle">Percent (%)</text>
<text transform="translate(1022.6,513) rotate(90)" font-family='"Liberation Mono", monospace' font-size="8.6" fill="#4e4e4e" textLength="110" lengthAdjust="spacing">RRDTOOL / TOBI OETIKER</text>
<text xml:space="preserve" x="641.5" y="711" font-family='"Liberation Mono", monospace' font-size="9.998" font-weight="normal" fill="#c2c2c2" text-anchor="start" >user</text>
<text xml:space="preserve" x="703" y="711" font-family='"Liberation Mono", monospace' font-size="9.998" font-weight="normal" fill="#c2c2c2" text-anchor="start" >Cur:  9.0%</text>
<text xml:space="preserve" x="789" y="711" font-family='"Liberation Mono", monospace' font-size="9.998" font-weight="normal" fill="#c2c2c2" text-anchor="start" >Avg:  7.5%</text>
<text xml:space="preserve" x="875" y="711" font-family='"Liberation Mono", monospace' font-size="9.998" font-weight="normal" fill="#c2c2c2" text-anchor="start" >Min:  4.3%</text>
<text xml:space="preserve" x="961" y="711" font-family='"Liberation Mono", monospace' font-size="9.998" font-weight="normal" fill="#c2c2c2" text-anchor="start" >Max: 22.1%</text>
<text xml:space="preserve" x="641.5" y="723" font-family='"Liberation Mono", monospace' font-size="9.998" font-weight="normal" fill="#c2c2c2" text-anchor="start" >nice</text>
<text xml:space="preserve" x="703" y="723" font-family='"Liberation Mono", monospace' font-size="9.998" font-weight="normal" fill="#c2c2c2" text-anchor="start" >Cur:  0.0%</text>
<text xml:space="preserve" x="789" y="723" font-family='"Liberation Mono", monospace' font-size="9.998" font-weight="normal" fill="#c2c2c2" text-anchor="start" >Avg:  0.0%</text>
<text xml:space="preserve" x="875" y="723" font-family='"Liberation Mono", monospace' font-size="9.998" font-weight="normal" fill="#c2c2c2" text-anchor="start" >Min:  0.0%</text>
<text xml:space="preserve" x="961" y="723" font-family='"Liberation Mono", monospace' font-size="9.998" font-weight="normal" fill="#c2c2c2" text-anchor="start" >Max:  0.1%</text>
<text xml:space="preserve" x="641.5" y="735" font-family='"Liberation Mono", monospace' font-size="9.998" font-weight="normal" fill="#c2c2c2" text-anchor="start" >system</text>
<text xml:space="preserve" x="703" y="735" font-family='"Liberation Mono", monospace' font-size="9.998" font-weight="normal" fill="#c2c2c2" text-anchor="start" >Cur:  2.9%</text>
<text xml:space="preserve" x="789" y="735" font-family='"Liberation Mono", monospace' font-size="9.998" font-weight="normal" fill="#c2c2c2" text-anchor="start" >Avg:  2.5%</text>
<text xml:space="preserve" x="875" y="735" font-family='"Liberation Mono", monospace' font-size="9.998" font-weight="normal" fill="#c2c2c2" text-anchor="start" >Min:  1.7%</text>
<text xml:space="preserve" x="961" y="735" font-family='"Liberation Mono", monospace' font-size="9.998" font-weight="normal" fill="#c2c2c2" text-anchor="start" >Max:  5.5%</text>
<text xml:space="preserve" x="641.5" y="747" font-family='"Liberation Mono", monospace' font-size="9.998" font-weight="normal" fill="#c2c2c2" text-anchor="start" >I/O wait</text>
<text xml:space="preserve" x="703" y="747" font-family='"Liberation Mono", monospace' font-size="9.998" font-weight="normal" fill="#c2c2c2" text-anchor="start" >Cur:  0.1%</text>
<text xml:space="preserve" x="789" y="747" font-family='"Liberation Mono", monospace' font-size="9.998" font-weight="normal" fill="#c2c2c2" text-anchor="start" >Avg:  0.1%</text>
<text xml:space="preserve" x="875" y="747" font-family='"Liberation Mono", monospace' font-size="9.998" font-weight="normal" fill="#c2c2c2" text-anchor="start" >Min:  0.0%</text>
<text xml:space="preserve" x="961" y="747" font-family='"Liberation Mono", monospace' font-size="9.998" font-weight="normal" fill="#c2c2c2" text-anchor="start" >Max:  1.0%</text>
<text xml:space="preserve" x="641.5" y="759" font-family='"Liberation Mono", monospace' font-size="9.998" font-weight="normal" fill="#c2c2c2" text-anchor="start" >IRQ</text>
<text xml:space="preserve" x="703" y="759" font-family='"Liberation Mono", monospace' font-size="9.998" font-weight="normal" fill="#c2c2c2" text-anchor="start" >Cur:  0.0%</text>
<text xml:space="preserve" x="789" y="759" font-family='"Liberation Mono", monospace' font-size="9.998" font-weight="normal" fill="#c2c2c2" text-anchor="start" >Avg:  0.0%</text>
<text xml:space="preserve" x="875" y="759" font-family='"Liberation Mono", monospace' font-size="9.998" font-weight="normal" fill="#c2c2c2" text-anchor="start" >Min:  0.0%</text>
<text xml:space="preserve" x="961" y="759" font-family='"Liberation Mono", monospace' font-size="9.998" font-weight="normal" fill="#c2c2c2" text-anchor="start" >Max:  0.0%</text>
</g>
<text xml:space="preserve" x="48.5" y="30.8" font-family='"Liberation Sans", sans-serif' font-size="13.2" font-weight="normal" fill="#3c4043" text-anchor="start" textLength="140.5" lengthAdjust="spacingAndGlyphs" >Blue Precision Monitorix</text>
<text xml:space="preserve" x="899" y="72.6" font-family='"Liberation Sans", sans-serif' font-size="10.5" font-weight="bold" fill="#f4f4f4" text-anchor="middle" >?</text>
<text xml:space="preserve" x="41.8" y="98.8" font-family='"Liberation Sans", sans-serif' font-size="13.4" font-weight="normal" fill="#3c4043" text-anchor="start" textLength="31" lengthAdjust="spacingAndGlyphs" >Apps</text>
<text xml:space="preserve" x="113.2" y="98.8" font-family='"Liberation Sans", sans-serif' font-size="13.4" font-weight="normal" fill="#3c4043" text-anchor="start" textLength="109" lengthAdjust="spacingAndGlyphs" >Inbox (16) - sjvn0…</text>
<text xml:space="preserve" x="267.4" y="98.8" font-family='"Liberation Sans", sans-serif' font-size="13.4" font-weight="normal" fill="#3c4043" text-anchor="start" textLength="66" lengthAdjust="spacingAndGlyphs" >Bookmarks</text>
<text xml:space="preserve" x="358.0" y="97.1" font-family='"Liberation Sans", sans-serif' font-size="8.6" font-weight="bold" fill="#1a73e8" text-anchor="middle" textLength="8.6" lengthAdjust="spacingAndGlyphs" >28</text>
<text xml:space="preserve" x="374.3" y="98.8" font-family='"Liberation Sans", sans-serif' font-size="13.4" font-weight="normal" fill="#3c4043" text-anchor="start" textLength="99.5" lengthAdjust="spacingAndGlyphs" >Google Calendar</text>
<text xml:space="preserve" x="495.2" y="96.0" font-family='"Liberation Sans", sans-serif' font-size="5.6" font-weight="bold" fill="#ffffff" text-anchor="middle" textLength="6.6" lengthAdjust="spacingAndGlyphs" transform="rotate(-8 495.2 94)">ZD</text>
<text xml:space="preserve" x="498.7" y="95.2" font-family='"Liberation Sans", sans-serif' font-size="5.4" font-weight="bold" fill="#2a2a2a" text-anchor="start" textLength="7.2" lengthAdjust="spacingAndGlyphs" >Net</text>
<text xml:space="preserve" x="514" y="98.8" font-family='"Liberation Sans", sans-serif' font-size="13.4" font-weight="normal" fill="#3c4043" text-anchor="start" textLength="37" lengthAdjust="spacingAndGlyphs" >ZDNet</text>
<text xml:space="preserve" x="575.1" y="100" font-family='"Liberation Sans", sans-serif' font-size="17.2" font-weight="bold" fill="#fff" text-anchor="middle" textLength="13.2" lengthAdjust="spacingAndGlyphs" >CW</text>
<text xml:space="preserve" x="591.2" y="98.8" font-family='"Liberation Sans", sans-serif' font-size="13.4" font-weight="normal" fill="#3c4043" text-anchor="start" textLength="93" lengthAdjust="spacingAndGlyphs" >Computerworld</text>
<text xml:space="preserve" x="725.5" y="98.8" font-family='"Liberation Sans", sans-serif' font-size="13.4" font-weight="normal" fill="#3c4043" text-anchor="start" textLength="70" lengthAdjust="spacingAndGlyphs" >Linux Today</text>
<text xml:space="preserve" x="835.5" y="98.8" font-family='"Liberation Sans", sans-serif' font-size="13.4" font-weight="normal" fill="#3c4043" text-anchor="start" textLength="112" lengthAdjust="spacingAndGlyphs" >Practical Technol…</text>
<text xml:space="preserve" x="1115.6" y="98.8" font-family='"Liberation Sans", sans-serif' font-size="13.4" font-weight="normal" fill="#3c4043" text-anchor="start" textLength="102.8" lengthAdjust="spacingAndGlyphs" >Other bookmarks</text>
</svg>
</body></html>
